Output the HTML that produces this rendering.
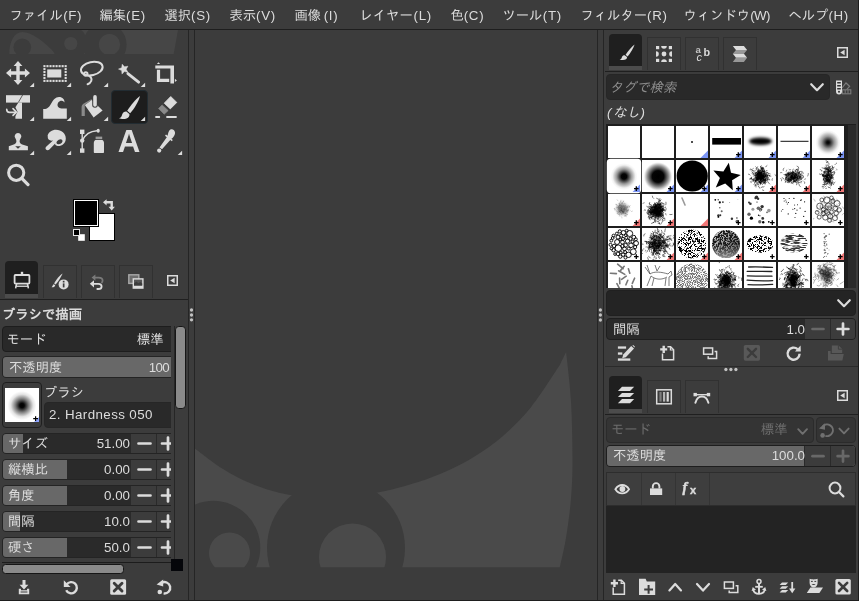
<!DOCTYPE html>
<html lang="ja">
<head>
<meta charset="utf-8">
<title>GIMP</title>
<style>
html,body{margin:0;padding:0;background:#3c3c3c;}
body{width:859px;height:601px;overflow:hidden;position:relative;
  font-family:"Liberation Sans","IPAGothic",sans-serif;font-size:13.33px;color:#dcdcdc;line-height:1;}
#app{position:absolute;left:0;top:0;width:859px;height:601px;background:#3c3c3c;overflow:hidden;}
.abs{position:absolute;}
.t{position:absolute;white-space:nowrap;line-height:16px;height:16px;}
.r{text-align:right;}
.vline,.hline{position:absolute;background:#252525;}
svg{position:absolute;overflow:visible;}
svg.ic{fill:#dcdcdc;}
#menubar,.t,svg.ic{opacity:.999;}
u{text-decoration:none;}
#menubar u{display:inline-block;width:20px;text-align:center;letter-spacing:0.7px;}
/* menubar */
#menubar{position:absolute;left:0;top:0;width:859px;height:29px;}
#menubar span{position:absolute;top:8px;line-height:16px;white-space:nowrap;}
/* tabs */
.tab{position:absolute;box-sizing:border-box;border:1px solid #313131;border-bottom:none;}
.tab.on{background:#1f1f1f;border:none;border-radius:4px 4px 0 0;}
.tab.on i{position:absolute;left:0;right:0;bottom:0;height:4px;background:#4c4c4c;}
.entry{position:absolute;box-sizing:border-box;background:#2a2a2a;border:1px solid #222;border-radius:4px;}
.spin{position:absolute;box-sizing:border-box;background:#2a2a2a;border:1px solid #242424;border-radius:4px;overflow:hidden;}
.spin .fill{position:absolute;left:0;top:0;bottom:0;background:#686868;}
.spin .btns{position:absolute;top:0;bottom:0;right:0;background:#3c3c3c;border-left:1px solid #2a2a2a;}
</style>
</head>
<body>
<div id="app">

<!-- MENUBAR -->
<div id="menubar">
<span style="left:9.4px">ファイル<u>(F)</u></span>
<span style="left:99.4px">編集<u>(E)</u></span>
<span style="left:164.4px">選択<u>(S)</u></span>
<span style="left:229.4px">表示<u>(V)</u></span>
<span style="left:294.4px">画像<u>(I)</u></span>
<span style="left:359.4px">レイヤー<u>(L)</u></span>
<span style="left:450.4px">色<u>(C)</u></span>
<span style="left:502.4px">ツール<u>(T)</u></span>
<span style="left:580.4px">フィルター<u>(R)</u></span>
<span style="left:683.4px">ウィンドウ<u style="letter-spacing:-0.6px">(W)</u></span>
<span style="left:788.4px">ヘルプ<u>(H)</u></span>
</div>
<div class="hline" style="left:0;top:29px;width:859px;height:1px;background:#1e1e1e"></div>

<!-- separators -->
<div class="vline" style="left:188px;top:30px;width:1px;height:571px"></div>
<div class="vline" style="left:194px;top:30px;width:1px;height:571px"></div>
<div class="vline" style="left:597px;top:30px;width:1px;height:571px"></div>
<div class="vline" style="left:603px;top:30px;width:1px;height:571px"></div>
<div class="hline" style="left:0;top:600px;width:859px;height:1px;background:#1e1e1e"></div>

<!-- CANVAS -->
<svg id="canvas" style="left:195px;top:30px" width="402" height="570" viewBox="195 30 402 570">
  <defs>
    <clipPath id="cc"><rect x="195" y="30" width="402" height="537.6"/></clipPath>
    <mask id="wm" maskUnits="userSpaceOnUse" x="195" y="30" width="402" height="570">
      <rect x="195" y="30" width="402" height="570" fill="#fff"/>
      <circle cx="213.3" cy="547.8" r="47" fill="#000"/>
      <circle cx="336" cy="548" r="69" fill="#000"/>
      <circle cx="229.5" cy="553" r="20.5" fill="#fff"/>
      <circle cx="352.5" cy="557" r="33.5" fill="#fff"/>
    </mask>
  </defs>
  <g clip-path="url(#cc)">
    <path d="M195.0 448.8 C199.7 452.1 213.7 463.3 223.0 469.1 C232.3 474.9 241.7 479.7 251.0 483.6 C260.3 487.6 269.7 490.5 279.0 492.8 C288.3 495.0 297.7 496.4 307.0 497.2 C316.3 498.0 325.7 498.1 335.0 497.7 C344.3 497.4 353.7 496.4 363.0 495.0 C372.3 493.7 381.7 491.9 391.0 489.7 C400.3 487.4 409.7 484.8 419.0 481.7 C428.3 478.6 437.7 475.2 447.0 470.9 C456.3 466.7 465.7 462.1 475.0 456.2 C484.3 450.4 493.7 444.1 503.0 435.9 C512.3 427.7 521.7 418.8 531.0 407.2 C540.3 395.6 554.2 373.4 559.0 366.3 C563.8 359.2 558.8 366.9 560.0 364.5 C561.2 362.2 565.1 354.1 566.1 352.0 C566.9 360.0 569.8 381.9 570.9 399.9 C572.0 417.9 572.5 443.2 572.5 459.8 C572.5 476.4 572.0 486.4 570.9 499.7 C569.8 513.0 567.6 528.3 565.7 539.6 C563.8 550.9 560.7 562.9 559.7 567.6 L195 567.6 Z" fill="#4a4a4a" mask="url(#wm)"/>
  </g>
</svg>

<!-- TOOLBOX -->
<div id="toolbox" class="abs" style="left:0;top:30px;width:188px;height:570px">
<!-- wilber header -->
<svg style="left:0px;top:0px" width="188" height="24" viewBox="0 30 188 24">
  <defs>
    <mask id="hm" maskUnits="userSpaceOnUse" x="0" y="30" width="188" height="24">
      <rect x="0" y="30" width="188" height="24" fill="#fff"/>
      <circle cx="22.3" cy="47.3" r="8.8" fill="#000"/>
      <circle cx="69.4" cy="43.5" r="18" fill="#000"/>
      <circle cx="70.8" cy="43.5" r="6.6" fill="#fff"/>
      <circle cx="104.8" cy="44.6" r="21.8" fill="#000"/>
      <circle cx="109.5" cy="44.6" r="10.6" fill="#fff"/>
    </mask>
  </defs>
  <path d="M9.3 54 C9.3 42 14 32 22.5 32 C31 32 43 41 51 49 L56 54 L60 30 L178 30 L173.7 54 Z" fill="#464646" mask="url(#hm)"/>
</svg>
<!-- selected tool button -->
<div class="abs" style="left:111px;top:60px;width:37px;height:34px;box-sizing:border-box;background:#1d1d1d;border:1px solid #222c32;border-radius:4px"></div>
<!-- tool icons: origin of toolbox is (0,30) -->
<svg class="ic" style="left:6px;top:31px" width="24" height="24" viewBox="0 0 24 24"><path d="M12 0 L16.4 5.1 H13.7 V10.3 H18.9 V7.6 L24 12 L18.9 16.4 V13.7 H13.7 V18.9 H16.4 L12 24 L7.6 18.9 H10.3 V13.7 H5.1 V16.4 L0 12 L5.1 7.6 V10.3 H10.3 V5.1 H7.6 Z"/></svg>
<svg class="ic" style="left:43px;top:31px" width="24" height="24" viewBox="0 0 24 24"><rect x="0.40" y="4.10" width="2.1" height="2.1"/><rect x="0.40" y="18.85" width="2.1" height="2.1"/><rect x="3.43" y="4.10" width="2.1" height="2.1"/><rect x="3.43" y="18.85" width="2.1" height="2.1"/><rect x="6.46" y="4.10" width="2.1" height="2.1"/><rect x="6.46" y="18.85" width="2.1" height="2.1"/><rect x="9.49" y="4.10" width="2.1" height="2.1"/><rect x="9.49" y="18.85" width="2.1" height="2.1"/><rect x="12.52" y="4.10" width="2.1" height="2.1"/><rect x="12.52" y="18.85" width="2.1" height="2.1"/><rect x="15.55" y="4.10" width="2.1" height="2.1"/><rect x="15.55" y="18.85" width="2.1" height="2.1"/><rect x="18.58" y="4.10" width="2.1" height="2.1"/><rect x="18.58" y="18.85" width="2.1" height="2.1"/><rect x="21.61" y="4.10" width="2.1" height="2.1"/><rect x="21.61" y="18.85" width="2.1" height="2.1"/><rect x="0.40" y="7.05" width="2.1" height="2.1"/><rect x="21.61" y="7.05" width="2.1" height="2.1"/><rect x="0.40" y="10.00" width="2.1" height="2.1"/><rect x="21.61" y="10.00" width="2.1" height="2.1"/><rect x="0.40" y="12.95" width="2.1" height="2.1"/><rect x="21.61" y="12.95" width="2.1" height="2.1"/><rect x="0.40" y="15.90" width="2.1" height="2.1"/><rect x="21.61" y="15.90" width="2.1" height="2.1"/><rect x="4.2" y="8.4" width="14.1" height="8.1"/></svg>
<svg class="ic" style="left:80px;top:31px" width="24" height="24" viewBox="0 0 24 24"><g fill="none" stroke="#dcdcdc" stroke-width="2" stroke-linecap="round"><ellipse cx="11.8" cy="7.6" rx="11" ry="6.6" transform="rotate(-13 11.8 7.6)"/><circle cx="5.8" cy="13" r="1.7"/><path d="M7 14.2 C10.4 14.8 12.4 17.2 11.2 20 C10.6 21.6 9.4 22.6 7.6 23.2"/></g></svg>
<svg class="ic" style="left:117px;top:31px" width="24" height="24" viewBox="0 0 24 24"><path d="M5.2 3.2 L7.5 5.8 L10.9 5.2 L9.2 8.2 L10.9 11.3 L7.4 10.6 L5.0 13.1 L4.7 9.6 L1.5 8.1 L4.7 6.7 Z" stroke="#dcdcdc" stroke-width="0.5" stroke-linejoin="round"/><path d="M10.9 12.6 L21.6 21.2" stroke="#dcdcdc" stroke-width="2.8" stroke-linecap="round"/></svg>
<svg class="ic" style="left:154px;top:31px" width="24" height="24" viewBox="0 0 24 24"><path d="M1.3 4.5 H20 V22.4 H16.4 V7.4 H1.3 Z"/><path d="M2.9 8.7 H6.1 V17.8 H15.2 V21 H2.9 Z"/><path d="M2.9 2.9 L4.5 1.3 L6.1 2.9 Z"/><path d="M20.9 17.8 L22.9 19.4 L20.9 21 Z"/></svg>
<!-- row 2 -->
<svg class="ic" style="left:6px;top:65px" width="24" height="24" viewBox="0 0 24 24"><rect x="0" y="0.2" width="24" height="7.4"/><path d="M16.6 0 L12.1 7.8" stroke="#3c3c3c" stroke-width="0.8"/><path d="M12.4 7.4 L9.4 12.3 L11.5 16.8 L9.4 21.3 V23.7 H16 V7.4 Z"/><path d="M0.7 14.2 C0.7 16.6 1.6 17.4 3.6 17.4 H9.4" fill="none" stroke="#dcdcdc" stroke-width="1.6" stroke-linecap="round"/><path d="M7 13.6 L10.4 17.1 L7 20.4" fill="none" stroke="#dcdcdc" stroke-width="1.6" stroke-linecap="round" stroke-linejoin="round"/></svg>
<svg class="ic" style="left:43px;top:65px" width="24" height="24" viewBox="0 0 24 24"><path d="M0.2 23.7 V14.1 C3 14.1 5.5 13.5 7.9 9 C10 5 12.5 1.9 16 1.9 C19.5 1.9 21.9 4.4 21.4 7.6 C20.7 6.3 19.9 5.8 18.9 5.7 C17.4 5.6 16.2 6.2 15.4 7.3 C14.3 8.8 14.2 10.8 15.2 12 C16 12.9 17 13.3 18.4 13.4 C19.6 13.5 21.4 13.5 23.8 13.5 V23.7 Z"/></svg>
<svg class="ic" style="left:80px;top:65px" width="24" height="24" viewBox="0 0 24 24"><path d="M4.8 10.1 L11.7 4.8 L22.6 15.4 L13.6 22.6 Z"/><path d="M1.6 21 V12.4 C1.6 10.4 2.4 9.2 4.2 8.2 L11.3 4.3 L11.9 5.1 L4.8 10.1 V21 Z" fill="#8a8a8a"/><path d="M15 1.8 V10" stroke="#3c3c3c" stroke-width="5.6" stroke-linecap="round"/><path d="M15 1.9 V10" stroke="#dcdcdc" stroke-width="3.6" stroke-linecap="round"/></svg>
<svg class="ic" style="left:117px;top:65px" width="24" height="24" viewBox="0 0 24 24"><path d="M23 1 C22 5.5 17.5 13.5 13.2 18.2 L10.2 15.8 C13.5 10.5 19 4 23 1 Z"/><path d="M9.4 16.6 L12.4 19 C13 22 10 24 6.5 24 C4.5 24 3 23.6 2 23.2 C4 22.6 4.6 21.6 5 20 C5.6 17.6 7.6 16.4 9.4 16.6 Z"/></svg>
<svg class="ic" style="left:154px;top:65px" width="24" height="24" viewBox="0 0 24 24"><path d="M16.7 1.5 L22.8 7.4 L16.3 13.9 L10.2 8.2 Z" stroke="#dcdcdc" stroke-width="0.8" stroke-linejoin="round"/><path d="M8.1 9.9 L14.2 15.6 L10.2 19.2 L4.5 13.5 Z" fill="#8a8a8a" stroke="#8a8a8a" stroke-width="0.6" stroke-linejoin="round"/><rect x="1.2" y="20.9" width="4.9" height="2" rx="0.6"/><rect x="12.2" y="20.9" width="10.6" height="2" rx="0.6"/></svg>
<!-- row 3 -->
<svg class="ic" style="left:6px;top:99px" width="24" height="24" viewBox="0 0 24 24"><path d="M12 4.1 A3.3 3.3 0 0 1 14.5 9.6 C13.8 10.6 13.6 11.4 13.6 12.4 C13.6 14 15 15 17 15.8 L21.9 17.2 V21.3 H2.8 V17.2 L7 15.8 C9 15 10.4 14 10.4 12.4 C10.4 11.4 10.2 10.6 9.5 9.6 A3.3 3.3 0 0 1 12 4.1 Z M9.2 17.3 L12 19.8 L14.8 17.3 Z" fill-rule="evenodd"/></svg>
<svg class="ic" style="left:43px;top:99px" width="24" height="24" viewBox="0 0 24 24"><path d="M13 0.8 C18.5 0.8 22.8 4.6 22.8 9.4 C22.8 14.4 18.6 17.4 14.6 17 C12.6 16.8 11.8 15.8 12.2 14.6 L6.4 20.4 C5.4 21.4 3.8 21.4 3 20.4 C2.2 19.4 2.4 18.2 3.4 17.4 L10 11.6 C8 12 5.8 11.4 5 9.6 C4.6 8.6 5 7.8 4.6 6.8 C5.4 3.2 9 0.8 13 0.8 Z M14 12.2 C12.8 13.8 13.6 15.4 15.8 15.2 C18.4 15 20.2 12.8 19.2 11 C18.2 9.4 15.6 10.2 14 12.2 Z" fill-rule="evenodd"/></svg>
<svg class="ic" style="left:80px;top:99px" width="24" height="24" viewBox="0 0 24 24"><rect x="0" y="0.6" width="4.4" height="4.4"/><rect x="0" y="19.4" width="4.4" height="4.4"/><circle cx="2.2" cy="11.6" r="2.2"/><rect x="1.5" y="3" width="1.4" height="18"/><path d="M2.6 11 C5 6 10 2.4 17 1.8" fill="none" stroke="#dcdcdc" stroke-width="1.5"/><ellipse cx="18.2" cy="1.8" rx="1.6" ry="2"/><rect x="15.6" y="7.6" width="6.6" height="2.6" fill="#9a9a9a"/><path d="M15.4 11 H22.4 C23.4 11.6 24 12.6 24 14 V23 C24 23.6 23.6 24 23 24 H14.8 C14.2 24 13.8 23.6 13.8 23 V14 C13.8 12.6 14.4 11.6 15.4 11 Z"/></svg>
<svg class="ic" style="left:117px;top:99px" width="24" height="24" viewBox="0 0 24 24"><text x="11.9" y="22.6" text-anchor="middle" font-family="Liberation Sans, sans-serif" font-weight="bold" font-size="31.2" fill="#dcdcdc">A</text></svg>
<svg class="ic" style="left:154px;top:99px" width="24" height="24" viewBox="0 0 24 24"><path d="M16.4 0.4 C18.8 -0.6 21.4 1.4 21 4.4 C20.8 6.4 19 8.8 17.4 9.8 L18.8 11 L17.8 12.2 L16.3 11 L8 20.3 L5.5 18.4 L12.8 8.3 L11 6.8 L12 5.6 L13.6 6.8 C14 4.4 14.8 1.2 16.4 0.4 Z"/><circle cx="5.2" cy="21.6" r="2.1"/></svg>
<!-- row 4 -->
<svg class="ic" style="left:6px;top:133px" width="24" height="24" viewBox="0 0 24 24"><circle cx="10.2" cy="9.8" r="7.6" fill="none" stroke="#dcdcdc" stroke-width="3"/><path d="M15.8 15.4 L22 21.6" stroke="#dcdcdc" stroke-width="3.2" stroke-linecap="round"/></svg>
<!-- corner triangles -->
<svg class="ic" style="left:0;top:0" width="188" height="130" viewBox="0 0 188 130"><g id="tris">
<path d="M34.1 52.8 V57 H29.7 Z"/><path d="M71.1 52.8 V57 H66.7 Z"/><path d="M108.1 52.8 V57 H103.7 Z"/><path d="M145.1 52.8 V57 H140.7 Z"/><path d="M34.1 86.8 V91 H29.7 Z"/><path d="M71.1 86.8 V91 H66.7 Z"/><path d="M108.1 86.8 V91 H103.7 Z"/><path d="M145.1 86.8 V91 H140.7 Z"/><path d="M34.1 120.8 V125 H29.7 Z"/><path d="M71.1 120.8 V125 H66.7 Z"/><path d="M182.1 120.8 V125 H177.7 Z"/>
</g></svg>
<!-- fg/bg colors (toolbox-local y = page y - 30) -->
<div class="abs" style="left:89px;top:183px;width:26px;height:28px;box-sizing:border-box;background:#fff;border:1px solid #000"></div>
<div class="abs" style="left:73px;top:169px;width:26px;height:28px;box-sizing:border-box;background:#000;border:1px solid #000;box-shadow:inset 0 0 0 1px #fff"></div>
<svg class="ic" style="left:103px;top:169px" width="12" height="12" viewBox="0 0 12 12"><path d="M0 3.3 L3.6 0.2 V2.1 H9.9 V7.8 H11.9 L8.7 11.6 L5.5 7.8 H7.5 V4.5 H3.6 V6.4 Z"/></svg>
<svg style="left:73px;top:199px" width="12" height="12" viewBox="0 0 12 12"><rect x="5.2" y="5.2" width="6.6" height="6.6" fill="#fff"/><rect x="0.5" y="0.5" width="6" height="6" fill="#000" stroke="#e6e6e6" stroke-width="1"/></svg>
<!-- tool-options tabs -->
<div class="tab on" style="left:5px;top:231px;width:33px;height:37px"><i></i></div>
<div class="tab" style="left:43px;top:235px;width:34px;height:33px"></div>
<div class="tab" style="left:81px;top:235px;width:34px;height:33px"></div>
<div class="tab" style="left:119px;top:235px;width:34px;height:33px"></div>
<div class="hline" style="left:0;top:269px;width:188px;height:1px;background:#1f1f1f"></div>
<svg class="ic" style="left:167px;top:245px" width="11" height="11" viewBox="0 0 11 11"><rect x="0.75" y="0.75" width="9.5" height="9.5" fill="none" stroke="#dcdcdc" stroke-width="1.5"/><path d="M7.6 2.8 V8.2 L3.2 5.5 Z"/></svg>
<!-- tab icons (toolbox-local: page y-30) -->
<svg class="ic" style="left:13px;top:241px" width="18" height="18" viewBox="0 0 18 18"><rect x="1.6" y="4" width="14.8" height="8.6" rx="0.8" fill="none" stroke="#dcdcdc" stroke-width="1.8"/><rect x="7.8" y="0.8" width="2.4" height="3"/><path d="M3.6 13 L2.6 17.4 M14.4 13 L15.4 17.4" stroke="#dcdcdc" stroke-width="1.5"/><rect x="2.4" y="14.6" width="13.2" height="1.3"/></svg>
<svg class="ic" style="left:51px;top:243px" width="18" height="18" viewBox="0 0 18 18"><path d="M11.6 0.6 C10.4 3.6 7.4 8.6 4.6 11.6 L3.2 10.6 C4.8 7 8.8 2.4 11.6 0.6 Z"/><path d="M2.8 11.2 L4.2 12.2 C4.2 13.6 2.6 14.4 0.6 14.2 C1.6 13.6 1.6 11.6 2.8 11.2 Z"/><circle cx="12.6" cy="11.4" r="5" /><rect x="11.8" y="10.4" width="1.7" height="4" fill="#3c3c3c"/><rect x="11.8" y="7.8" width="1.7" height="1.7" fill="#3c3c3c"/></svg>
<svg class="ic" style="left:89px;top:244px" width="16" height="16" viewBox="0 0 16 16"><g fill="none" stroke="#7a7a7a" stroke-width="1.8"><path d="M5 3.6 H9.6 C12.4 3.6 13.6 5 13.6 6.6 C13.6 7.6 13.2 8.4 12.4 9"/></g><path d="M6.4 0.4 V6.8 L2.6 3.6 Z" fill="#7a7a7a"/><g fill="none" stroke="#dcdcdc" stroke-width="1.8"><path d="M4 9.8 H9.4 C11.6 9.8 12.6 11 12.6 12.4 C12.6 13.8 11.6 15 9.4 15 H7.6"/></g><path d="M5 6.2 V13.4 L0.8 9.8 Z"/></svg>
<svg class="ic" style="left:128px;top:244px" width="16" height="16" viewBox="0 0 16 16"><rect x="0.8" y="0.8" width="10" height="8.6" fill="#6e6e6e" stroke="#a8a8a8" stroke-width="1.4"/><rect x="4.6" y="4.2" width="11" height="10.6" fill="#dcdcdc"/><rect x="6" y="5.6" width="8.2" height="6" fill="#555"/><path d="M6 11.6 V9.4 L8.4 7.6 L10.4 9.2 L12.2 8 L14.2 9.6 V11.6 Z" fill="#3c3c3c"/></svg>
<!-- title -->
<div class="t" style="left:2px;top:277px;font-weight:bold">ブラシで描画</div>
<!-- options scrolled area -->
<div class="abs" style="left:0;top:295px;width:171px;height:237px;overflow:hidden">
  <div class="entry" style="left:2px;top:1px;width:176px;height:26px;background:#292929;border-color:#1d1d1d"></div>
  <div class="t" style="left:6.5px;top:7px">モード</div>
  <div class="t" style="left:137px;top:7px">標準</div>
  <div class="spin" style="left:2px;top:31px;width:176px;height:22px"><div class="fill" style="width:100%"></div></div>
  <div class="t" style="left:9px;top:35px">不透明度</div>
  <div class="t r" style="right:2px;top:35px"><u style="letter-spacing:-.7px">100</u></div>
  <div class="abs" style="left:2px;top:57px;width:40px;height:46px;box-sizing:border-box;border:1px solid #1f1f1f;border-radius:4px;background:#3c3c3c"></div>
  <svg style="left:5px;top:63px" width="34" height="34" viewBox="0 0 34 34"><defs><radialGradient id="h50"><stop offset="0" stop-color="#000"/><stop offset="0.14" stop-color="#060606"/><stop offset="0.42" stop-color="#7e7e7e"/><stop offset="0.7" stop-color="#e4e4e4"/><stop offset="0.9" stop-color="#fff"/></radialGradient></defs><rect width="34" height="34" fill="#fff"/><circle cx="17" cy="17.5" r="16" fill="url(#h50)"/><path d="M34 29 V34 H29 Z" fill="#8ea4ff"/><path d="M28.2 30.6 H33 M30.6 28.2 V33" stroke="#000" stroke-width="1.2"/></svg>
  <div class="t" style="left:44px;top:60px">ブラシ</div>
  <div class="entry" style="left:44px;top:77px;width:134px;height:26px;background:#292929;border-color:#262626"></div>
  <div class="t" style="left:49px;top:82px"><u style="letter-spacing:.4px">2. Hardness 050</u></div>
  <!-- spin rows -->
  <div class="spin" style="left:2px;top:108px;width:176px;height:21px"><div class="fill" style="width:20px"></div><div class="btns" style="width:46px"></div></div>
  <div class="t" style="left:8px;top:111px">サイズ</div><div class="t r" style="right:41px;top:111px"><u>51.00</u></div>
  <div class="spin" style="left:2px;top:134px;width:176px;height:21px"><div class="fill" style="width:64px"></div><div class="btns" style="width:46px"></div></div>
  <div class="t" style="left:8px;top:137px">縦横比</div><div class="t r" style="right:41px;top:137px"><u>0.00</u></div>
  <div class="spin" style="left:2px;top:160px;width:176px;height:21px"><div class="fill" style="width:64px"></div><div class="btns" style="width:46px"></div></div>
  <div class="t" style="left:8px;top:163px">角度</div><div class="t r" style="right:41px;top:163px"><u>0.00</u></div>
  <div class="spin" style="left:2px;top:186px;width:176px;height:21px"><div class="fill" style="width:17px"></div><div class="btns" style="width:46px"></div></div>
  <div class="t" style="left:8px;top:189px">間隔</div><div class="t r" style="right:41px;top:189px"><u>10.0</u></div>
  <div class="spin" style="left:2px;top:212px;width:176px;height:21px"><div class="fill" style="width:64px"></div><div class="btns" style="width:46px"></div></div>
  <div class="t" style="left:8px;top:215px">硬さ</div><div class="t r" style="right:41px;top:215px"><u>50.0</u></div>
  <svg class="ic" style="left:0;top:108px" width="171" height="130" viewBox="0 108 171 130"><g id="pm" stroke="#dcdcdc" stroke-width="2.7" stroke-linecap="round" fill="none">
    <path d="M138.5 118.5 H150.5 M162 118.5 H174 M168 112.5 V124.5"/>
    <path d="M138.5 144.5 H150.5 M162 144.5 H174 M168 138.5 V150.5"/>
    <path d="M138.5 170.5 H150.5 M162 170.5 H174 M168 164.5 V176.5"/>
    <path d="M138.5 196.5 H150.5 M162 196.5 H174 M168 190.5 V202.5"/>
    <path d="M138.5 222.5 H150.5 M162 222.5 H174 M168 216.5 V228.5"/>
  </g><g stroke="#2a2a2a" stroke-width="1"><path d="M156.5 109 V128 M156.5 135 V154 M156.5 161 V180 M156.5 187 V206 M156.5 213 V232"/></g></svg>
</div>
<!-- scrolled window edges -->
<div class="vline" style="left:174px;top:296px;width:1px;height:236px;background:#262626"></div>
<div class="hline" style="left:2px;top:532px;width:170px;height:1px;background:#1c1c1c"></div>
<div class="abs" style="left:171px;top:529px;width:12px;height:12px;background:#05060a"></div>
<!-- vertical scrollbar -->
<div class="abs" style="left:175.3px;top:296px;width:10.4px;height:82.5px;box-sizing:border-box;background:#8a8a8a;border:1.8px solid #161616;border-radius:3.8px"></div>
<!-- horizontal scrollbar -->
<div class="abs" style="left:2.3px;top:533.6px;width:121.6px;height:10.2px;box-sizing:border-box;background:#8a8a8a;border:1.5px solid #161616;border-radius:3.5px"></div>
<!-- bottom buttons -->
<svg class="ic" style="left:16px;top:549px" width="16" height="16" viewBox="0 0 16 16"><path d="M6.5 1 H9.5 V5.8 H12.4 L8 10.6 L3.6 5.8 H6.5 Z"/><path d="M2.8 9.8 H5 V11.2 H11 V9.8 H13.2 V15.2 H2.8 Z M4.6 12.6 V13.6 H11.4 V12.6 Z" fill-rule="evenodd"/></svg>
<svg class="ic" style="left:63px;top:549px" width="16" height="16" viewBox="0 0 16 16"><path d="M3.6 5.6 A5.6 5.6 0 1 1 3.2 11.2" fill="none" stroke="#dcdcdc" stroke-width="2.4"/><path d="M0.8 1.2 V8 H7.6 Z"/></svg>
<svg class="ic" style="left:110px;top:549px" width="16" height="16" viewBox="0 0 16 16"><rect x="0.2" y="0.3" width="15.9" height="15.5" rx="1.5"/><path d="M4.2 4.2 L12 12 M12 4.2 L4.2 12" stroke="#3c3c3c" stroke-width="2.9" stroke-linecap="round"/></svg>
<svg class="ic" style="left:156px;top:549px" width="16" height="16" viewBox="0 0 16 16"><path d="M5.4 4 A5.7 5.7 0 1 1 7.6 14.4" fill="none" stroke="#dcdcdc" stroke-width="2.4"/><path d="M0.6 5.4 L7.2 0.4 V7.6 Z"/><circle cx="3.8" cy="13" r="2.3"/></svg>
<!-- handle dots between toolbox and canvas -->
<svg class="ic" style="left:189px;top:277px" width="5" height="16" viewBox="0 0 5 16"><circle cx="2.5" cy="3" r="1.65" fill="#c2c2c2"/><circle cx="2.5" cy="8" r="1.65" fill="#c2c2c2"/><circle cx="2.5" cy="12.8" r="1.65" fill="#c2c2c2"/></svg>
</div>

<!-- RIGHT DOCK (page coords used directly; container at 0,0) -->
<div id="rdock" class="abs" style="left:0;top:0;width:859px;height:601px">
<!-- brushes tabs -->
<div class="tab on" style="left:609px;top:34px;width:33px;height:36px"><i></i></div>
<div class="tab" style="left:647px;top:37px;width:34px;height:33px"></div>
<div class="tab" style="left:685px;top:37px;width:34px;height:33px"></div>
<div class="tab" style="left:723px;top:37px;width:34px;height:33px"></div>
<div class="hline" style="left:605px;top:71px;width:254px;height:1px;background:#1f1f1f"></div>
<svg class="ic" style="left:837px;top:47px" width="11" height="11" viewBox="0 0 11 11"><rect x="0.75" y="0.75" width="9.5" height="9.5" fill="none" stroke="#dcdcdc" stroke-width="1.5"/><path d="M7.6 2.8 V8.2 L3.2 5.5 Z"/></svg>
<!-- brushes dock tab icons -->
<svg class="ic" style="left:619px;top:44px" width="16" height="16" viewBox="0 0 16 16"><path d="M15.6 0.4 C14.6 3.8 11.4 9.2 8.6 12.4 L6.6 10.8 C8.8 7.2 12.6 2.6 15.6 0.4 Z"/><path d="M6 11.4 L8 13 C8.4 15 6.4 16 3.8 16 C2.6 16 1.4 15.8 0.6 15.4 C2 15 2.6 14.4 2.8 13.4 C3.2 11.8 4.8 11.2 6 11.4 Z"/></svg>
<svg class="ic" style="left:656px;top:46px" width="16" height="16" viewBox="0 0 16 16"><circle cx="8" cy="8" r="2.4"/><rect x="0" y="0" width="3.2" height="3.2"/><rect x="12.8" y="0" width="3.2" height="3.2"/><rect x="0" y="12.8" width="3.2" height="3.2"/><rect x="12.8" y="12.8" width="3.2" height="3.2"/><path d="M5.2 0 A2.8 2.8 0 0 0 10.8 0 Z"/><path d="M5.2 16 A2.8 2.8 0 0 1 10.8 16 Z"/><path d="M0 5.2 A2.8 2.8 0 0 1 0 10.8 Z"/><path d="M16 5.2 A2.8 2.8 0 0 0 16 10.8 Z"/></svg>
<svg class="ic" style="left:694px;top:44px" width="18" height="18" viewBox="0 0 18 18"><text x="1.5" y="9.1" font-family="Liberation Sans, sans-serif" font-weight="bold" font-size="9.6" fill="#c4c4c4">a</text><text x="9.4" y="12" font-family="Liberation Sans, sans-serif" font-weight="bold" font-size="10.8">b</text><text x="2.4" y="17.2" font-family="Liberation Sans, sans-serif" font-style="italic" font-size="11">c</text></svg>
<svg class="ic" style="left:732px;top:45px" width="16" height="18" viewBox="732 45 16 18"><path d="M732.8 45.9 H743.9 L747.1 50 H736 Z"/><path d="M736 50 H747.1 L743.9 53.8 H732.8 Z" fill="#989898"/><path d="M732.8 53.8 H743.9 L747.1 57.8 H736 Z"/><path d="M736 57.8 H747.1 L743.9 61.9 H732.8 Z" fill="#989898"/></svg>
<!-- tag palette icon -->
<svg class="ic" style="left:835px;top:80px" width="17" height="15" viewBox="835 80 17 15"><path d="M842 88 L846 83 L849.6 86.4 L846.6 89.6" fill="none" stroke="#7c7c7c" stroke-width="1.2"/><rect x="842.4" y="89.8" width="8.4" height="4" fill="none" stroke="#7c7c7c" stroke-width="1.1"/><path d="M845.2 90 V93.6 M848 90 V93.6" stroke="#7c7c7c" stroke-width="1"/><path d="M836 80.6 H842 V91.4 A3 3 0 0 1 836 91.4 Z"/><rect x="837.2" y="82" width="3.6" height="1.5" fill="#333"/><rect x="837.2" y="85" width="3.6" height="1.5" fill="#333"/><rect x="837.2" y="88" width="3.6" height="1.5" fill="#333"/><circle cx="839" cy="91.8" r="1" fill="#333"/></svg>
<!-- tag search -->
<div class="entry" style="left:606px;top:74px;width:224px;height:26px;background:#292929;border-color:#262626"></div>
<div class="t" style="left:609.5px;top:80px;font-style:italic;color:#8c8c8c">タグで検索</div>
<svg style="left:810px;top:83px" width="14" height="9" viewBox="0 0 14 9"><path d="M1.2 1.2 L7 7.2 L12.8 1.2" fill="none" stroke="#dcdcdc" stroke-width="2.2" stroke-linecap="round" stroke-linejoin="round"/></svg>
<div class="t" style="left:607px;top:105px;font-style:italic"><u style="letter-spacing:1.5px">(</u>なし<u style="letter-spacing:1.5px;margin-left:1px">)</u></div>
<!-- brush grid -->
<div id="grid" class="abs" style="left:606px;top:124px;width:250px;height:164px;background:#1e1e1e;overflow:hidden">
<svg style="left:0;top:0" width="250" height="164" viewBox="606 124 250 164">
<defs>
<radialGradient id="g25"><stop offset="0" stop-color="#000"/><stop offset="0.12" stop-color="#111"/><stop offset="0.5" stop-color="#9a9a9a"/><stop offset="0.85" stop-color="#f0f0f0"/><stop offset="1" stop-color="#fff"/></radialGradient>
<radialGradient id="g50"><stop offset="0" stop-color="#000"/><stop offset="0.2" stop-color="#050505"/><stop offset="0.55" stop-color="#9a9a9a"/><stop offset="0.85" stop-color="#f2f2f2"/><stop offset="1" stop-color="#fff"/></radialGradient>
<radialGradient id="g75"><stop offset="0" stop-color="#000"/><stop offset="0.4" stop-color="#050505"/><stop offset="0.72" stop-color="#8a8a8a"/><stop offset="0.94" stop-color="#f2f2f2"/><stop offset="1" stop-color="#fff"/></radialGradient>
<radialGradient id="fade"><stop offset="0" stop-color="#fff"/><stop offset="0.45" stop-color="#fff"/><stop offset="0.8" stop-color="#666"/><stop offset="1" stop-color="#000"/></radialGradient>
<radialGradient id="fade2"><stop offset="0" stop-color="#fff"/><stop offset="0.3" stop-color="#ccc"/><stop offset="0.7" stop-color="#444"/><stop offset="1" stop-color="#000"/></radialGradient>
<radialGradient id="hard"><stop offset="0" stop-color="#fff"/><stop offset="0.93" stop-color="#fff"/><stop offset="1" stop-color="#000"/></radialGradient>
<filter id="nA" x="0" y="0" width="1" height="1"><feTurbulence type="fractalNoise" baseFrequency="0.95" numOctaves="3" seed="2"/><feColorMatrix type="matrix" values="0 0 0 0 0 0 0 0 0 0 0 0 0 0 0 5 0 0 0 -1.7"/></filter>
<filter id="nB" x="0" y="0" width="1" height="1"><feTurbulence type="fractalNoise" baseFrequency="0.7" numOctaves="4" seed="11"/><feColorMatrix type="matrix" values="0 0 0 0 0 0 0 0 0 0 0 0 0 0 0 6 0 0 0 -1.9"/></filter>
<filter id="nC" x="0" y="0" width="1" height="1"><feTurbulence type="fractalNoise" baseFrequency="1.1" numOctaves="3" seed="5"/><feColorMatrix type="matrix" values="0 0 0 0 0 0 0 0 0 0 0 0 0 0 0 5 0 0 0 -2"/></filter>
<filter id="nD" x="0" y="0" width="1" height="1"><feTurbulence type="fractalNoise" baseFrequency="0.22" numOctaves="5" seed="23"/><feColorMatrix type="matrix" values="0 0 0 0 0 0 0 0 0 0 0 0 0 0 0 7 0 0 0 -2.9"/></filter>
<filter id="nE" x="0" y="0" width="1" height="1"><feTurbulence type="turbulence" baseFrequency="0.45" numOctaves="2" seed="8"/><feColorMatrix type="matrix" values="0 0 0 0 0 0 0 0 0 0 0 0 0 0 0 -12 0 0 0 2.9"/></filter>
<filter id="nF" x="0" y="0" width="1" height="1"><feTurbulence type="fractalNoise" baseFrequency="0.15 1.1" numOctaves="2" seed="4"/><feColorMatrix type="matrix" values="0 0 0 0 0 0 0 0 0 0 0 0 0 0 0 6 0 0 0 -2.5"/></filter>
<linearGradient id="lg33" x1="0" y1="0" x2="0" y2="1"><stop offset="0" stop-color="#999" stop-opacity="0"/><stop offset="1" stop-color="#bbb" stop-opacity="0.9"/></linearGradient>
<filter id="nW" x="0" y="0" width="1" height="1"><feTurbulence type="fractalNoise" baseFrequency="0.6" numOctaves="3" seed="19"/><feColorMatrix type="matrix" values="0 0 0 0 1 0 0 0 0 1 0 0 0 0 1 7 0 0 0 -3.2"/></filter>
<linearGradient id="lgm" x1="0" y1="0" x2="0.8" y2="1"><stop offset="0" stop-color="#fff"/><stop offset="0.55" stop-color="#888"/><stop offset="1" stop-color="#222"/></linearGradient>
<filter id="bl1" x="-0.3" y="-0.5" width="1.6" height="2"><feGaussianBlur stdDeviation="1.6"/></filter>
<filter id="bl2" x="-0.5" y="-0.5" width="2" height="2"><feGaussianBlur stdDeviation="0.5"/></filter>
</defs>
<rect x="608" y="126" width="32" height="32" fill="#fff"/>
<rect x="642" y="126" width="32" height="32" fill="#fff"/>
<rect x="676" y="126" width="32" height="32" fill="#fff"/>
<rect x="710" y="126" width="32" height="32" fill="#fff"/>
<rect x="744" y="126" width="32" height="32" fill="#fff"/>
<rect x="778" y="126" width="32" height="32" fill="#fff"/>
<rect x="812" y="126" width="32" height="32" fill="#fff"/>
<rect x="608" y="160" width="32" height="32" fill="#fff"/>
<rect x="642" y="160" width="32" height="32" fill="#fff"/>
<rect x="676" y="160" width="32" height="32" fill="#fff"/>
<rect x="710" y="160" width="32" height="32" fill="#fff"/>
<rect x="744" y="160" width="32" height="32" fill="#fff"/>
<rect x="778" y="160" width="32" height="32" fill="#fff"/>
<rect x="812" y="160" width="32" height="32" fill="#fff"/>
<rect x="608" y="194" width="32" height="32" fill="#fff"/>
<rect x="642" y="194" width="32" height="32" fill="#fff"/>
<rect x="676" y="194" width="32" height="32" fill="#fff"/>
<rect x="710" y="194" width="32" height="32" fill="#fff"/>
<rect x="744" y="194" width="32" height="32" fill="#fff"/>
<rect x="778" y="194" width="32" height="32" fill="#fff"/>
<rect x="812" y="194" width="32" height="32" fill="#fff"/>
<rect x="608" y="228" width="32" height="32" fill="#fff"/>
<rect x="642" y="228" width="32" height="32" fill="#fff"/>
<rect x="676" y="228" width="32" height="32" fill="#fff"/>
<rect x="710" y="228" width="32" height="32" fill="#fff"/>
<rect x="744" y="228" width="32" height="32" fill="#fff"/>
<rect x="778" y="228" width="32" height="32" fill="#fff"/>
<rect x="812" y="228" width="32" height="32" fill="#fff"/>
<rect x="608" y="262" width="32" height="32" fill="#fff"/>
<rect x="642" y="262" width="32" height="32" fill="#fff"/>
<rect x="676" y="262" width="32" height="32" fill="#fff"/>
<rect x="710" y="262" width="32" height="32" fill="#fff"/>
<rect x="744" y="262" width="32" height="32" fill="#fff"/>
<rect x="778" y="262" width="32" height="32" fill="#fff"/>
<rect x="812" y="262" width="32" height="32" fill="#fff"/>
<path d="M691 141 l2 2 m0 -2 l-2 2" stroke="#222" stroke-width="0.8"/>
<path d="M708 150.5 V158 H700.5 Z" fill="#7b96f6"/>
<rect x="712.2" y="138" width="28.8" height="6.6" fill="#000"/>
<path d="M742 150.5 V158 H734.5 Z" fill="#7b96f6"/>
<path d="M736 154.6 H740.6 M738.3 152.3 V156.9" stroke="#000" stroke-width="1.3"/>
<ellipse cx="760.5" cy="141.2" rx="11.5" ry="3.8" fill="#000" filter="url(#bl1)"/>
<path d="M776 150.5 V158 H768.5 Z" fill="#7b96f6"/>
<path d="M770 154.6 H774.6 M772.3 152.3 V156.9" stroke="#000" stroke-width="1.3"/>
<rect x="780.5" y="140.8" width="28" height="1" fill="#111"/>
<path d="M810 150.5 V158 H802.5 Z" fill="#7b96f6"/>
<path d="M804 154.6 H808.6 M806.3 152.3 V156.9" stroke="#000" stroke-width="1.3"/>
<circle cx="828" cy="142.5" r="12.5" fill="url(#g25)"/>
<path d="M844 150.5 V158 H836.5 Z" fill="#7b96f6"/>
<path d="M838 154.6 H842.6 M840.3 152.3 V156.9" stroke="#000" stroke-width="1.3"/>
<rect x="607.5" y="159.5" width="33" height="33" rx="3" fill="#fff" stroke="#fff" stroke-width="1.4"/>
<circle cx="624" cy="176.5" r="13.5" fill="url(#g50)"/>
<path d="M640 184.5 V192 H632.5 Z" fill="#7b96f6"/>
<path d="M634 188.6 H638.6 M636.3 186.3 V190.9" stroke="#000" stroke-width="1.3"/>
<circle cx="658" cy="176.5" r="14.5" fill="url(#g75)"/>
<path d="M674 184.5 V192 H666.5 Z" fill="#7b96f6"/>
<path d="M668 188.6 H672.6 M670.3 186.3 V190.9" stroke="#000" stroke-width="1.3"/>
<path d="M708 184.5 V192 H700.5 Z" fill="#7b96f6"/>
<path d="M702 188.6 H706.6 M704.3 186.3 V190.9" stroke="#000" stroke-width="1.3"/>
<circle cx="692.2" cy="176" r="15.6" fill="#000"/>
<polygon points="728.8,162.8 731.0,172.7 740.7,175.1 732.1,180.2 732.8,190.3 725.2,183.6 715.8,187.4 719.9,178.1 713.4,170.4 723.4,171.4" fill="#000"/>
<path d="M742 184.5 V192 H734.5 Z" fill="#7b96f6"/>
<path d="M736 188.6 H740.6 M738.3 186.3 V190.9" stroke="#000" stroke-width="1.3"/>
<clipPath id="c1"><rect x="744" y="160" width="32" height="32"/></clipPath>
<g clip-path="url(#c1)"><ellipse cx="760.5" cy="176.5" rx="4.7" ry="4.7" fill="#000" opacity="0.8" filter="url(#bl1)"/><path d="M758.3 175.2l1.2 -0.3l1.2 -0.4M759.1 174.2l0.1 0.7l-0.2 0.7M762.9 186.6l0.6 0.3l0.6 -0.3M761.0 172.8l-0.7 0.1l-0.8 -0.1M758.3 178.0l-0.7 0.3l-0.1 0.7M763.1 171.2l-0.6 -1.0l-0.9 -0.9M757.5 179.3l-0.9 0.6l0.2 1.0M755.8 177.6l-0.3 0.4l-0.5 0.2M765.5 176.8l0.3 0.4l0.5 0.1M762.5 177.4l-0.4 -1.0l-0.7 -0.8M758.0 172.9l-1.2 0.0l-1.1 0.5M764.6 172.1l-0.2 -0.5l-0.5 -0.1M764.0 177.2l1.1 -0.4l1.1 0.5M765.0 180.6l0.2 -1.1l0.9 -0.8M762.1 178.4l0.3 -1.1l1.0 -0.4M752.8 179.2l0.8 1.0l-0.3 1.2M759.7 177.7l-1.0 -0.3l-1.0 0.1M763.4 177.6l0.3 -0.5l0.6 -0.0M760.5 179.1l1.0 0.8l-0.1 1.3M759.8 178.1l-0.7 -1.0l-1.2 0.2M755.3 170.8l-0.9 0.2l-0.9 -0.4M760.7 179.6l-0.5 -0.8l-0.4 -0.8M755.9 184.4l-0.2 1.0l-1.0 0.4M759.4 177.3l0.1 0.5l0.5 0.3M763.1 179.0l-0.6 0.6l-0.8 0.4M757.9 171.2l-0.7 0.8l-0.8 0.7M763.9 180.0l-0.4 0.9l-0.9 0.6M760.7 180.7l-0.7 0.2l-0.1 0.7M772.2 180.3l-0.1 -0.8l0.3 -0.8M759.8 182.6l1.1 -0.3l1.0 -0.4M769.3 175.6l0.8 0.3l0.8 0.2M759.7 181.8l0.7 0.9l-0.2 1.1M766.0 178.8l-0.1 1.0l-0.5 0.9M767.4 175.5l-0.6 0.9l0.3 1.0M759.6 172.6l-0.1 0.7l0.4 0.6M761.0 174.8l0.1 0.6l0.5 0.4M759.8 171.4l-0.6 -1.0l-0.7 -1.0M763.0 177.1l-1.1 -0.1l-0.5 -1.0M757.7 176.3l-1.0 -0.7l-1.2 -0.2M768.2 173.0l-0.8 -0.4l-0.8 0.4M761.4 177.2l-0.8 -0.7l0.3 -1.0M750.6 169.0l-0.5 0.3l0.1 0.6M759.4 181.2l0.7 -0.1l0.6 -0.5M759.9 172.7l-0.6 -0.2l-0.2 -0.6M766.2 173.3l0.7 -0.3l0.0 -0.8M757.7 184.3l-0.6 0.1l-0.3 0.6M762.7 180.1l1.1 -0.5l1.2 0.2M760.6 174.0l0.1 -0.7l0.2 -0.7M768.6 178.2l0.7 0.7l0.4 0.9M756.8 171.9l-0.8 0.8l-1.1 -0.3M752.4 169.2l0.3 -0.4l0.5 -0.3M765.3 179.6l-0.8 0.9l0.4 1.1M761.6 176.1l0.5 0.2l0.4 -0.3M767.9 175.9l0.6 -0.3l0.6 -0.0M762.3 170.5l-0.2 1.3l-0.8 1.0M759.2 173.6l-0.9 0.7l-0.9 0.6M751.8 177.2l-1.0 0.6l0.0 1.2M754.5 175.3l1.1 0.1l1.0 -0.5M756.7 172.6l0.8 0.9l1.2 0.3M763.3 179.7l0.5 0.2l0.3 0.5M764.5 179.3l0.6 -0.6l0.9 0.0M761.6 174.5l1.0 0.5l0.2 1.1M764.2 171.6l-1.3 -0.1l-1.0 -0.8M761.2 167.9l1.0 0.4l0.9 0.6M763.5 176.7l-0.2 -0.9l-0.1 -0.9M759.3 181.4l0.9 -0.9l1.0 -0.8M760.3 174.8l0.6 0.7l-0.1 0.9M762.1 178.0l-0.7 0.0l-0.5 0.6M762.7 179.9l0.2 -0.6l0.5 -0.3M763.1 177.8l-0.2 -0.4l-0.4 -0.3M762.1 178.8l0.5 -0.4l0.6 -0.1M763.0 174.9l0.5 -0.6l0.7 -0.2M757.3 174.7l0.8 -0.7l0.4 -1.0M757.6 175.1l-0.3 1.2l-1.2 0.3M765.3 183.8l-0.1 -0.5l-0.5 -0.2M753.0 179.7l0.5 -0.5l0.4 -0.6M762.9 175.3l0.7 0.5l0.4 0.7M766.1 170.8l0.6 0.0l0.4 -0.5M757.2 174.2l0.9 -0.5l1.0 -0.2M759.5 174.1l0.9 -0.7l1.2 0.1M761.0 174.1l0.7 0.3l0.5 0.6M762.9 184.0l0.7 -0.8l0.6 -0.9M764.7 182.3l0.4 0.8l-0.1 0.9M758.6 174.3l0.5 -0.5l0.4 -0.6M754.9 178.8l1.0 0.2l1.0 0.2M761.7 173.0l-1.1 -0.6l-1.0 0.7M761.6 172.3l-0.2 0.7l0.3 0.7M762.0 174.3l0.9 -0.2l0.7 -0.6M761.6 171.5l0.5 -0.4l0.6 -0.2M762.9 176.9l-0.6 0.4l-0.4 0.7M754.6 173.8l-0.8 0.5l-0.9 -0.1M762.5 190.0l0.8 0.1l0.5 0.6M760.8 180.0l0.6 1.1l-0.5 1.2M764.7 178.9l0.3 0.4l0.5 0.1M759.1 171.9l-0.2 0.9l0.7 0.7M759.5 178.0l0.4 -0.7l0.7 -0.4M758.4 180.0l-0.6 -0.3l-0.6 -0.4M760.7 175.0l0.2 0.5l0.2 0.5M764.1 179.5l0.5 0.8l0.8 0.4M760.5 169.3l0.8 -0.2l0.7 0.5M762.8 173.8l1.3 -0.2l0.7 -1.0M760.6 170.6l-0.8 -0.7l-1.0 -0.2M763.6 171.1l0.5 1.2l-0.2 1.3M761.4 176.8l0.5 0.9l-0.0 1.0M767.8 173.1l0.2 0.6l0.6 0.2M757.3 179.1l-0.8 0.8l-1.0 0.5M763.1 169.2l0.1 -0.9l-0.1 -0.9M756.3 175.5l-0.6 -1.0l-0.1 -1.2M760.4 181.5l-0.6 0.2l-0.2 0.6M751.7 179.3l-0.2 -0.5l0.4 -0.4M759.7 171.3l0.7 0.0l0.7 -0.3M758.5 176.7l-0.7 -0.7l-0.4 -0.9M755.5 176.7l0.9 0.8l-0.0 1.2M764.5 171.1l0.0 0.7l0.7 0.3M762.2 169.0l0.9 -0.4l0.9 0.3M761.6 174.9l1.1 0.5l0.0 1.2M759.4 171.2l-0.9 0.7l-0.5 1.1M767.1 178.9l1.0 0.4l0.8 0.7M763.7 179.2l-0.2 1.1l-0.8 0.8M759.4 178.5l-0.5 0.7l-0.6 0.6M763.7 175.4l0.6 0.8l0.7 0.7M760.2 170.8l-1.1 -0.3l-1.0 0.5M761.0 174.1l-0.9 0.1l-0.9 0.0M763.8 179.3l-0.1 0.7l-0.0 0.7M758.2 177.9l-0.5 -1.1l0.8 -1.0M761.7 179.1l-0.8 0.5l-1.0 0.1M756.7 174.1l1.3 -0.0l1.0 0.8M760.4 183.2l1.2 0.3l1.0 0.8M764.2 174.6l-0.2 -0.7l0.5 -0.5M760.7 177.0l-0.2 1.0l-0.3 1.0M762.6 171.0l0.2 -1.2l-0.9 -0.8M763.0 178.5l0.6 0.7l0.2 0.9M762.4 180.7l0.0 0.5l0.3 0.4M759.9 182.4l0.5 -0.1l0.5 -0.1M755.2 177.7l0.8 1.0l1.2 0.5M757.0 174.6l-1.1 -0.5l-0.9 -0.8M755.3 184.6l0.6 1.1l0.1 1.3M760.9 187.9l0.6 -0.7l0.9 -0.1M763.1 178.2l-1.2 0.2l-1.1 0.5M765.6 176.2l-0.2 -1.1l-1.0 -0.5M765.1 173.9l0.4 0.4l0.1 0.6M752.2 173.1l0.6 -0.7l0.4 -0.8M761.3 165.8l-0.3 0.9l0.5 0.8M761.8 176.9l-0.7 0.7l-1.0 -0.1M760.5 166.4l-0.0 1.2l0.5 1.1M757.0 180.0l0.9 -0.0l0.4 -0.8M757.1 180.3l-0.3 -0.6l-0.5 -0.4M762.8 180.5l-0.6 0.5l-0.6 0.5M760.6 171.1l-0.1 -0.8l0.7 -0.5M761.6 177.5l0.7 0.5l0.9 0.2M760.7 176.9l0.1 -0.5l0.3 -0.5M763.4 175.9l-1.0 -0.6l-1.1 -0.5M761.4 176.0l-1.0 -0.5l-1.0 -0.5M765.8 166.8l0.5 -0.8l0.7 -0.5M764.3 172.6l0.6 0.2l0.6 0.4M762.2 178.0l0.9 -0.2l0.5 0.8M764.1 170.7l-0.6 0.3l-0.0 0.7M761.3 181.0l-0.5 -0.4l-0.5 -0.3M755.1 182.4l-0.4 1.1l-0.7 0.9M763.4 175.3l-0.1 0.9l0.4 0.8M752.8 170.7l-0.6 -0.1l-0.4 0.5M757.6 173.4l0.8 0.0l0.6 0.6M758.0 174.0l1.2 -0.3l0.2 -1.3M761.3 181.8l-0.4 0.6l-0.6 0.2M764.2 173.9l0.9 -0.2l1.0 0.1M753.6 175.9l0.7 -0.5l0.7 -0.6M762.5 169.3l-0.3 -0.5l-0.6 -0.1M759.7 177.4l-0.5 0.6l0.2 0.8M763.9 180.9l0.5 -0.4l0.7 -0.1M760.0 176.8l0.5 -0.2l0.5 -0.3M763.7 176.8l-0.5 0.6l-0.5 0.6M765.8 175.4l-1.1 0.4l-1.1 0.5M759.2 172.5l-0.0 -0.6l-0.4 -0.4M758.4 170.4l-0.3 0.4l-0.4 0.3M763.6 178.9l0.4 -1.1l1.0 -0.5M765.5 180.4l1.3 0.2l0.9 0.9M761.6 168.9l0.5 -1.0l1.1 -0.1M762.0 177.1l-0.2 -0.6l0.3 -0.5M754.9 179.8l0.7 0.6l0.4 0.9M760.3 174.0l0.1 1.2l-0.7 0.9M759.7 176.5l-0.2 -1.1l0.2 -1.1M765.9 175.6l0.3 -0.6l-0.1 -0.7M775.0 174.7l0.8 0.6l0.4 0.9M757.5 174.0l-0.7 1.0l0.3 1.2M766.0 179.9l0.8 0.1l0.8 0.2M759.2 173.8l-0.7 -0.8l0.1 -1.0M751.6 178.1l-1.2 0.4l-1.0 0.6M760.0 173.3l-0.8 -0.8l-1.1 0.3M760.7 174.9l0.2 -0.6l-0.2 -0.6M759.3 179.3l-0.6 -0.5l-0.1 -0.8M755.6 181.1l-0.4 0.8l-0.5 0.7M756.4 182.0l-0.7 -0.7l-0.4 -0.9M761.0 179.9l0.7 -0.7l0.7 -0.8M769.8 176.4l-0.2 -0.6l-0.3 -0.5M756.6 179.6l-0.3 0.8l-0.8 0.3M761.8 177.6l-0.5 -0.1l-0.5 0.1M760.5 183.2l0.4 0.8l-0.4 0.8M758.7 173.0l0.5 1.2l-0.3 1.2M759.4 173.7l0.1 1.2l-0.8 0.9M762.1 173.6l-0.2 -1.1l0.8 -0.9M760.2 175.1l0.7 0.2l0.4 0.6M759.9 177.6l-0.6 0.1l-0.6 0.3M759.3 172.1l-0.9 -0.2l-0.2 -0.9M764.7 174.5l0.8 0.7l1.1 -0.1M762.2 176.6l-1.1 0.4l-1.1 0.4M761.4 171.8l-0.2 -0.9l0.3 -0.8M758.6 178.9l0.3 -1.1l0.9 -0.6M757.4 170.3l-0.9 -0.5l-0.6 -0.8M759.6 177.1l0.8 -0.9l0.4 -1.1M758.8 177.3l0.5 -0.2l0.5 -0.3M768.1 177.7l-0.4 -1.1l-0.2 -1.1M757.2 168.7l0.6 0.4l0.7 -0.3M759.0 176.8l-0.6 -0.7l-0.2 -1.0M761.2 175.2l0.8 0.2l0.8 0.2M759.7 173.1l0.9 -0.4l0.8 -0.4M756.7 168.8l-0.1 -1.2l-0.9 -0.8M761.2 177.0l-0.9 -0.6l-1.1 0.1M758.4 174.9l-1.1 -0.7l-0.1 -1.3M760.3 177.9l0.0 0.9l0.4 0.8M756.1 178.1l0.7 -0.4l0.6 -0.5M758.3 181.0l0.5 0.8l0.5 0.8M762.0 171.8l0.7 -0.4l0.7 -0.4M760.3 176.7l-0.2 -1.0l0.9 -0.6M767.8 179.0l0.2 -1.2l-0.8 -0.9M760.0 182.8l-0.3 -0.5l-0.6 0.0M766.6 175.2l-0.6 0.6l0.0 0.9M758.1 186.1l1.0 0.7l0.4 1.2M756.0 181.3l-1.0 -0.3l-0.9 -0.5M752.2 181.1l0.1 -0.8l0.1 -0.8M760.1 178.5l-0.2 1.2l0.6 1.0M760.4 177.6l0.7 -0.1l0.5 -0.5M760.1 174.8l0.4 -1.0l-0.7 -0.8M761.2 173.9l0.9 0.6l-0.1 1.1M758.4 179.0l-1.1 -0.0l-0.5 -1.0M758.8 173.0l-1.2 0.2l-0.9 0.8M758.7 178.3l1.1 -0.1l0.8 -0.8M762.1 167.2l-0.3 0.7l0.1 0.8M763.0 173.1l0.5 -0.6l0.8 -0.3M764.8 175.2l0.5 1.1l-0.8 0.9M753.8 181.0l1.3 -0.0l0.8 1.0M757.2 177.5l0.1 0.7l0.4 0.6M760.6 176.7l-0.2 0.5l-0.5 0.3M751.2 182.7l-0.3 -0.6l0.0 -0.7M752.1 170.4l-0.2 -0.7l-0.6 -0.4M757.4 178.1l0.2 1.1l0.7 0.9M756.8 176.1l-0.4 -0.5l-0.6 -0.3M759.7 181.6l-1.1 -0.5l-0.8 -0.9M767.0 176.7l0.7 -1.0l-0.1 -1.2M758.4 175.2l-0.8 -0.8l0.1 -1.1M755.5 175.8l-0.2 0.6l-0.1 0.6M763.0 181.9l0.1 0.8l0.8 0.3M757.8 183.5l0.7 0.6l0.2 0.9M765.8 174.5l1.1 0.3l0.5 1.0M764.3 170.8l-0.2 -1.1l-0.4 -1.0M763.0 177.5l-0.9 0.2l-0.5 -0.8M757.7 179.6l0.0 -0.7l-0.2 -0.7M762.5 180.5l0.6 0.8l0.7 0.7M761.6 179.3l-0.6 -0.4l0.1 -0.7M764.3 175.7l-0.3 -0.7l-0.6 -0.3M762.3 167.6l0.0 0.7l-0.2 0.7M762.0 178.7l-0.8 0.0l-0.7 0.5M757.4 176.7l-0.9 0.6l-1.0 0.4M756.5 178.1l1.2 -0.3l1.0 0.8M760.6 172.4l-0.6 -0.1l-0.2 -0.6M761.2 177.9l-0.4 -0.4l-0.1 -0.6M758.3 182.5l-0.6 -0.2l-0.6 -0.2M760.4 176.3l0.5 0.6l0.4 0.7M757.2 178.7l-0.3 -0.6l-0.6 -0.4M751.6 178.3l-0.5 0.3l-0.2 0.5M750.0 175.1l-0.6 -0.7l-0.9 -0.2M756.4 183.3l0.8 -0.1l0.8 0.2M758.4 170.6l-0.1 0.7l0.1 0.7M757.7 176.8l1.2 0.3l1.2 -0.2M757.3 176.7l1.0 -0.3l0.9 0.5M761.3 183.1l-0.6 0.3l-0.7 0.0M768.2 182.3l0.7 0.9l0.8 0.8M764.7 181.7l1.0 0.6l1.1 -0.2M760.4 177.5l1.0 0.6l0.4 1.1M753.6 179.0l-0.2 0.8l0.0 0.8M757.5 180.2l-1.1 0.1l-0.9 -0.5M757.6 179.4l-0.6 -0.2l-0.5 0.4M766.9 178.2l0.3 0.5l-0.0 0.6M758.5 172.8l0.8 0.9l1.2 0.3M765.0 181.0l0.2 1.3l-0.9 0.9M754.3 179.0l0.6 0.9l0.9 0.6M762.9 182.3l0.9 -0.4l0.9 0.3M757.8 179.0l-0.3 -1.0l-1.0 -0.1M761.9 182.2l-0.6 -0.0l-0.6 0.2M762.3 175.6l0.5 0.0l0.5 0.1M770.2 173.9l-0.6 -0.2l-0.5 0.3M765.4 171.8l-0.9 -0.9l-0.8 -1.0M760.1 172.6l1.2 0.0l1.2 -0.1M767.2 178.9l0.5 0.5l-0.0 0.7M756.8 168.1l0.5 -0.6l0.3 -0.7M764.3 182.4l0.5 -0.7l0.8 -0.2M766.1 176.4l-1.0 0.0l-1.0 -0.1M757.5 180.0l0.4 -0.6l-0.2 -0.7M762.8 175.9l0.3 0.7l-0.5 0.5M753.6 174.1l-0.2 -1.1l-1.1 -0.2M765.0 179.9l0.1 -1.1l-0.2 -1.1" fill="none" stroke="#000" stroke-width="0.6" opacity="0.85" stroke-linecap="round"/></g>
<path d="M776 184.5 V192 H768.5 Z" fill="#f37878"/>
<path d="M770 188.6 H774.6 M772.3 186.3 V190.9" stroke="#000" stroke-width="1.3"/>
<clipPath id="c2"><rect x="778" y="160" width="32" height="32"/></clipPath>
<g clip-path="url(#c2)"><ellipse cx="793.5" cy="177" rx="5.5" ry="3.6" fill="#000" opacity="0.4" filter="url(#bl1)"/><path d="M797.3 180.3l0.6 1.0l0.3 1.1M788.7 179.8l-0.5 -0.2l-0.5 -0.3M789.4 174.5l0.8 -0.8l0.6 -1.0M793.8 178.6l0.4 -1.0l0.7 -0.9M788.4 178.3l0.2 1.0l0.8 0.5M788.8 174.1l-0.3 -0.6l-0.7 -0.1M790.0 181.0l-1.2 -0.1l-1.2 0.1M785.4 180.9l0.3 0.6l0.2 0.7M790.2 174.7l-0.8 -0.3l-0.6 -0.6M800.1 173.4l-0.6 -0.7l0.3 -0.9M787.4 178.4l0.8 -0.8l0.5 -1.0M793.2 172.9l0.9 -0.5l1.0 -0.5M799.1 176.4l-1.1 0.8l-1.2 -0.6M794.3 178.0l0.8 -1.0l0.5 -1.2M793.3 181.6l0.6 -0.3l0.6 -0.3M791.8 175.2l-0.5 0.3l-0.5 0.3M793.7 178.2l-0.5 0.4l0.0 0.6M796.3 179.5l-0.5 1.1l-0.3 1.1M793.6 178.9l-0.3 1.1l0.5 1.1M785.4 178.2l0.4 -0.8l0.9 -0.2M791.4 175.3l0.5 0.4l0.2 0.6M786.8 180.7l1.3 -0.3l1.3 -0.4M797.2 177.1l0.2 1.1l-0.3 1.0M799.8 174.8l1.0 -0.3l1.0 -0.3M795.4 174.9l0.2 -1.1l1.0 -0.6M796.3 177.7l0.6 -0.2l0.6 -0.3M789.3 174.9l1.0 -0.9l0.6 -1.2M800.3 182.0l-0.7 0.2l-0.3 0.7M799.6 177.2l-0.2 1.0l-0.9 0.4M782.2 177.7l1.1 0.5l0.6 1.0M794.6 176.8l-1.0 -0.0l-1.0 -0.3M789.9 177.4l1.1 -0.7l1.3 -0.2M799.2 176.0l1.0 0.5l1.0 -0.5M793.5 172.7l0.2 0.6l0.6 0.2M799.1 184.4l0.2 1.3l1.1 0.7M790.8 179.9l-0.9 1.1l-0.1 1.4M790.4 177.2l0.9 0.7l1.1 0.3M786.5 177.4l0.5 0.3l0.3 0.5M794.4 177.0l-1.3 0.4l-1.2 -0.7M799.1 176.8l0.5 -0.1l0.5 -0.1M796.1 174.6l-0.8 0.3l-0.7 0.6M798.3 169.6l0.1 0.8l-0.5 0.6M793.2 171.5l-0.5 -1.2l0.5 -1.2M791.0 175.2l1.1 0.6l0.2 1.3M796.3 175.5l-0.1 -1.3l-0.9 -1.0M796.3 177.3l0.2 1.1l-0.6 0.9M796.4 172.8l1.4 -0.2l1.3 -0.4M800.0 174.7l0.0 1.0l0.8 0.7M786.7 180.2l1.0 0.1l1.0 -0.1M793.2 178.1l-0.8 -0.1l-0.5 0.6M787.9 179.6l1.1 0.6l1.1 -0.6M789.2 177.5l0.8 -1.0l1.2 -0.4M792.4 179.6l0.4 -0.9l0.7 -0.7M793.0 175.1l-1.0 0.9l-0.6 1.2M795.0 175.6l0.9 0.1l0.9 -0.4M787.0 174.1l0.9 0.2l0.9 -0.1M800.9 173.8l0.9 -0.8l0.5 -1.0M789.3 174.4l-0.5 0.6l-0.7 0.3M796.2 175.6l-0.4 0.5l-0.2 0.6M791.9 177.9l-0.5 -0.6l0.1 -0.8M793.8 181.9l0.6 -0.1l0.6 -0.3M798.1 176.5l-0.3 0.6l-0.6 0.2M789.2 182.5l-0.6 -0.2l-0.0 -0.7M799.7 174.1l-0.9 -0.7l0.2 -1.2M794.6 179.1l0.1 -0.9l0.8 -0.3M796.3 173.9l0.6 0.9l0.3 1.0M786.5 174.5l-1.3 0.2l-1.3 -0.1M798.0 181.7l0.6 1.1l-0.6 1.1M794.5 178.9l-0.3 -0.9l-0.5 -0.8M793.5 174.3l0.7 0.7l-0.2 1.0M795.6 176.6l-0.0 -0.8l0.7 -0.4M791.8 177.9l-0.5 0.8l0.3 0.9M794.0 174.3l-0.0 -0.7l-0.0 -0.7M791.8 175.3l-0.3 1.2l0.0 1.3M789.8 180.4l-0.5 -1.2l-0.3 -1.2M799.4 172.0l1.2 -0.6l1.3 0.0M792.0 174.2l1.0 0.8l1.2 0.6M790.5 180.2l0.0 -1.2l-1.0 -0.8M795.8 170.0l1.3 -0.2l1.3 0.0M798.2 174.4l0.8 -1.1l0.4 -1.3M799.0 180.5l1.2 -0.5l1.2 -0.6M791.2 177.5l0.4 -0.6l-0.2 -0.7M802.0 181.1l-1.0 0.6l-0.0 1.2M785.9 177.6l0.1 -0.7l0.1 -0.7M797.4 170.9l0.9 0.6l0.0 1.0M787.6 173.4l-0.3 0.9l0.7 0.6M795.3 173.3l0.6 1.2l1.2 0.6M800.7 178.0l1.0 0.5l1.0 -0.4M800.9 177.7l-0.8 -0.7l-0.4 -1.0M792.9 175.2l-0.9 0.5l-1.0 -0.4M790.3 174.2l0.5 -1.1l-0.2 -1.2M793.7 177.3l0.5 -0.5l0.6 -0.4M786.8 176.3l1.0 -0.4l0.4 -1.0M790.8 177.8l-0.9 0.8l-1.1 0.4M787.1 172.7l0.7 -0.0l0.6 0.3M792.8 176.4l0.9 -0.0l0.8 0.3M794.1 180.1l1.0 0.9l1.3 -0.5M800.2 179.1l-0.7 -0.4l-0.0 -0.8M791.9 173.9l-0.3 -1.3l0.8 -1.1M788.3 180.9l0.2 0.8l-0.7 0.5M793.1 174.0l-0.9 -0.2l-0.6 -0.6M788.5 176.5l-1.1 0.6l-1.3 -0.3M793.7 180.0l0.9 -0.7l1.1 -0.4M791.4 175.5l-1.1 -0.5l-1.1 -0.3M789.4 178.7l-0.6 -0.4l-0.1 -0.7M800.8 179.1l-0.7 -0.1l-0.7 0.3M793.2 178.8l0.8 -0.0l0.4 -0.6M786.7 170.1l-0.2 0.7l-0.3 0.6M791.2 180.0l-1.3 -0.6l-1.4 -0.2M788.8 180.6l-1.2 -0.6l-1.2 -0.4M789.9 174.3l-0.7 -0.6l-0.9 0.1M796.8 179.1l1.0 -0.0l1.0 -0.0M786.0 178.7l-0.5 0.7l-0.2 0.8M788.8 175.5l-1.1 -0.8l-1.3 -0.4M783.3 170.4l-0.1 -1.3l0.8 -1.0M795.7 181.0l-0.5 0.7l0.2 0.8M795.5 170.3l0.6 -0.7l0.9 0.1M795.6 173.1l0.4 -1.1l-0.9 -0.8M788.7 174.0l-0.8 1.0l-1.2 0.4M797.3 178.6l0.8 0.0l0.5 -0.6M797.4 177.0l-0.1 -0.6l0.5 -0.4M796.9 182.2l-0.2 1.3l-0.2 1.3M796.2 174.3l-0.2 1.3l1.1 0.7M795.2 178.2l-1.1 -0.4l-1.2 0.3M785.6 174.1l1.2 0.0l0.8 -0.9M798.8 177.6l-0.6 0.6l-0.8 0.3M799.7 177.4l0.8 1.1l0.9 1.0M794.8 180.6l-0.5 0.3l-0.6 -0.0M785.5 179.4l0.1 -1.2l1.1 -0.5M791.8 180.7l-1.0 -0.5l-0.5 -0.9M794.1 172.7l-0.8 -0.6l-1.0 0.2M793.2 178.5l-0.9 -0.6l-1.0 0.1M786.9 181.2l0.5 0.8l0.5 0.8M789.8 177.4l1.0 -0.3l1.0 -0.3M794.6 177.4l-0.7 0.1l-0.7 -0.2M793.1 176.0l-0.6 0.5l-0.7 0.3M785.1 174.6l0.9 0.2l0.7 0.7M794.2 177.7l-0.7 0.2l-0.1 0.7M797.9 173.0l-0.6 -1.1l0.1 -1.3M786.2 178.8l1.2 -0.6l1.2 0.6M796.5 169.4l1.0 -0.4l0.9 -0.6M789.1 169.4l0.7 0.5l0.9 -0.2M798.2 179.4l0.2 0.5l0.1 0.6M788.4 175.8l0.6 0.1l0.6 0.2M795.5 177.6l-0.7 1.1l-1.3 0.5M799.6 173.6l0.9 0.7l0.6 1.0M794.9 176.5l0.3 0.5l0.4 0.5M791.5 179.0l0.2 -1.3l1.3 -0.5M796.0 177.8l-1.1 0.4l-1.1 -0.4M794.8 175.7l-0.5 -0.2l-0.4 -0.4M795.4 174.7l-0.4 0.4l-0.6 -0.1M791.5 179.0l-0.5 0.4l-0.6 -0.3M798.8 175.5l-0.8 0.6l-0.9 -0.4M796.7 177.5l-0.4 -0.7l-0.4 -0.7M797.5 178.8l1.0 -0.5l1.1 -0.2M795.2 175.5l-0.4 -1.3l-0.7 -1.1M799.8 177.4l0.5 -0.3l0.3 -0.5M791.9 173.5l1.0 -0.1l0.9 -0.4M790.2 179.7l0.2 -1.2l0.1 -1.2M788.9 179.9l0.4 0.9l0.7 0.7M800.4 177.5l0.7 0.4l0.5 0.5M797.9 173.8l0.5 -0.1l0.5 0.2M793.0 172.3l0.5 -0.1l0.2 -0.5M802.7 175.2l0.7 0.6l-0.0 0.9M792.5 176.6l0.3 1.2l1.1 0.6M791.7 182.4l0.4 0.9l1.0 0.4M796.3 180.3l0.2 -0.8l-0.3 -0.8M791.6 172.4l1.1 0.1l1.1 0.2M799.7 176.7l-0.4 -0.4l-0.4 -0.4M796.2 177.6l-1.3 -0.0l-0.5 -1.2M796.3 174.0l-1.1 0.4l-0.9 0.7M801.1 177.7l1.2 -0.4l1.3 0.0M794.4 175.1l0.1 1.3l0.1 1.3M794.4 181.3l-0.2 -1.3l-1.1 -0.6M791.8 180.4l0.7 -1.2l-0.5 -1.3M791.2 179.7l1.0 -0.5l0.7 -0.9M790.8 176.1l0.6 -0.7l0.7 -0.6M795.1 173.6l0.7 0.3l0.6 -0.6M781.5 180.8l0.1 -1.4l-0.9 -1.0M790.2 172.2l-1.2 0.4l-0.3 1.2M803.1 172.7l0.2 0.5l-0.3 0.5M781.9 172.7l-0.7 -0.2l-0.7 0.2M791.3 174.6l1.2 -0.1l1.2 0.1M799.2 173.1l-0.8 0.7l-0.7 0.8M795.7 177.4l-0.1 0.5l-0.4 0.3M790.0 176.9l0.9 0.6l1.0 0.4M797.7 173.8l1.1 0.8l0.1 1.4M788.3 181.1l-0.4 -0.4l-0.6 -0.1M791.0 180.5l-1.0 -0.0l-0.5 0.9M791.9 178.2l-1.0 0.9l0.2 1.4M798.2 177.2l-0.4 0.4l-0.6 -0.1M796.2 171.7l-0.6 -0.8l-0.5 -0.8M793.9 177.6l1.3 -0.3l0.9 -0.9M791.2 176.7l0.6 -1.2l1.3 0.1M803.9 181.5l0.9 0.7l-0.2 1.2M796.1 180.7l0.4 -1.1l1.1 -0.5M790.8 173.9l-1.2 -0.3l-0.8 -0.9M788.8 171.8l-0.1 0.8l0.1 0.8M792.9 181.7l1.3 0.1l1.0 -0.9M789.2 172.9l-0.1 0.5l-0.5 0.1M798.1 175.2l0.1 0.9l-0.2 0.9M798.1 179.9l-0.2 -0.7l-0.4 -0.5M790.7 178.6l-0.6 0.2l-0.4 0.4M798.2 173.7l-0.6 0.2l-0.5 0.4M792.4 173.7l0.1 -1.1l0.1 -1.1M791.6 173.7l-0.8 1.2l-1.3 0.6M793.0 177.3l-0.8 0.2l-0.6 -0.5M800.6 175.9l1.1 0.2l1.0 -0.6M785.6 174.9l1.3 0.5l0.5 1.3M788.5 178.7l-0.7 1.0l-1.2 -0.2M785.6 178.1l0.5 0.4l-0.1 0.6M797.0 181.3l-0.1 -0.6l0.4 -0.4M788.5 175.7l-0.2 -0.8l0.5 -0.7M786.3 174.8l-0.8 0.4l-0.6 0.7M797.1 182.6l-1.1 -0.7l-0.8 -1.0M794.0 173.1l-1.3 0.0l-0.8 1.0M793.0 176.7l1.0 1.0l1.3 -0.5M798.7 168.1l-0.4 -1.3l-1.3 -0.6M792.3 172.9l-0.6 -0.0l-0.3 0.5M794.4 175.3l-0.2 -0.6l-0.0 -0.6M805.0 179.7l-0.3 -0.6l0.5 -0.5M796.3 179.9l-0.5 -0.3l-0.3 -0.5M792.7 182.4l1.3 -0.2l0.6 -1.2M786.5 177.4l0.5 0.1l0.3 0.4M792.6 175.1l-0.1 -1.2l-0.7 -1.0M786.1 175.3l1.1 0.4l0.1 1.1M807.7 176.0l0.5 -1.2l0.1 -1.3M791.3 182.0l0.1 0.7l-0.1 0.7M785.0 181.0l0.5 0.6l-0.2 0.8M791.1 181.5l-1.3 -0.1l-1.0 0.9" fill="none" stroke="#000" stroke-width="0.55" opacity="0.85" stroke-linecap="round"/></g>
<path d="M810 184.5 V192 H802.5 Z" fill="#f37878"/>
<path d="M804 188.6 H808.6 M806.3 186.3 V190.9" stroke="#000" stroke-width="1.3"/>
<clipPath id="c3"><rect x="812" y="160" width="32" height="32"/></clipPath>
<g clip-path="url(#c3)"><ellipse cx="828" cy="176.5" rx="3.6" ry="6.2" fill="#000" opacity="0.35" filter="url(#bl1)"/><path d="M831.3 175.7l-0.2 -1.1l-0.8 -0.7M831.6 179.8l0.6 0.6l-0.1 0.8M829.0 174.6l0.6 0.3l0.2 0.7M830.1 177.1l0.5 0.4l0.4 0.4M829.3 181.4l-0.1 -1.1l-0.3 -1.0M828.9 169.9l0.3 -0.6l0.1 -0.7M821.7 170.4l-0.6 -0.6l-0.9 -0.1M827.6 180.1l1.2 -0.1l0.8 0.9M823.4 175.0l-0.3 0.8l0.5 0.8M826.0 178.4l1.0 0.7l1.2 -0.4M829.8 169.1l0.7 0.5l-0.2 0.9M831.8 175.9l0.1 -1.1l-0.4 -1.0M824.2 174.3l-0.9 0.7l-0.8 0.8M828.0 174.6l-0.5 0.2l-0.5 -0.0M830.6 171.8l-0.9 -0.4l-1.0 0.2M825.0 181.0l-0.5 -0.6l-0.5 -0.6M826.1 182.3l-0.3 -0.7l-0.0 -0.8M830.2 171.3l0.7 -0.1l0.5 0.6M829.2 181.0l0.2 -0.5l0.3 -0.4M833.0 167.5l-0.3 -0.7l-0.6 -0.5M827.2 175.1l1.2 0.2l1.1 0.6M829.7 181.2l-0.3 1.2l0.3 1.2M827.2 168.0l-0.3 0.6l-0.3 0.6M824.7 180.6l-0.5 1.0l-0.3 1.1M831.4 183.3l0.8 -0.6l0.9 -0.5M832.8 167.8l0.9 0.1l0.4 -0.8M826.9 179.8l-1.0 0.3l-0.8 -0.6M828.0 177.3l1.1 -0.0l1.1 0.1M828.7 177.6l0.8 -0.4l0.8 0.4M829.1 168.0l0.2 -0.7l-0.2 -0.7M823.3 180.1l0.3 -1.1l0.5 -1.0M826.0 177.0l-0.5 -0.9l-0.5 -0.9M826.8 162.2l0.5 -0.2l0.4 -0.4M824.5 171.3l-0.3 1.2l-0.2 1.2M828.1 174.8l-0.1 0.5l-0.4 0.3M820.7 174.7l-0.6 -0.5l-0.7 -0.2M826.6 178.9l0.8 0.6l1.0 0.2M823.5 178.8l-0.1 0.8l0.2 0.8M826.0 183.4l0.7 0.5l0.8 -0.3M826.8 172.7l0.9 -0.2l0.9 0.1M822.5 175.1l-0.3 -1.0l-1.0 -0.1M831.1 183.2l-1.1 0.7l-1.2 0.3M830.2 168.8l1.0 -0.2l0.7 0.7M825.9 178.3l0.5 0.4l-0.0 0.7M827.5 175.2l0.9 0.2l0.8 0.2M827.6 177.3l-0.1 1.2l-0.7 1.0M829.0 172.8l-0.3 -0.6l-0.6 -0.4M830.0 175.5l-0.2 0.7l-0.6 0.3M826.5 170.1l0.5 -0.7l0.9 0.1M828.4 172.2l0.1 0.9l0.2 0.9M829.1 169.2l-0.0 -1.0l-0.6 -0.8M827.7 161.8l-0.7 -0.8l-1.0 -0.2M830.4 180.3l-0.9 -0.6l-0.9 -0.5M826.8 175.9l0.6 0.2l0.6 -0.1M828.1 179.4l-0.4 0.7l-0.7 0.2M836.8 169.9l-0.0 -0.5l-0.3 -0.4M832.6 176.4l0.4 -0.5l0.0 -0.7M831.0 180.2l-0.6 0.7l0.1 0.9M830.9 177.3l0.9 -0.5l1.0 -0.3M831.0 178.6l-0.7 0.7l-0.5 0.9M828.8 172.5l-0.1 -0.5l-0.4 -0.3M829.7 166.8l-0.2 0.6l-0.7 0.1M826.9 175.3l1.0 -0.1l0.8 -0.5M825.1 176.3l-0.7 -0.4l-0.8 -0.2M827.7 172.1l0.5 -1.0l1.1 -0.0M831.4 185.0l-0.1 -0.6l0.4 -0.5M826.1 176.5l0.3 1.3l-0.6 1.2M828.7 187.4l1.0 0.2l0.9 0.6M832.5 168.2l-0.1 -1.2l-0.2 -1.2M830.9 174.3l-0.2 -1.1l-0.4 -1.0M830.0 169.0l0.5 0.8l0.6 0.8M827.4 175.8l-0.2 -0.8l0.2 -0.8M828.0 177.6l-1.0 0.2l-0.9 -0.4M822.0 173.8l0.3 0.5l0.4 0.4M825.2 169.1l0.9 0.4l1.0 0.0M826.7 176.1l0.5 0.9l0.8 0.6M831.5 175.6l-0.4 0.5l-0.4 0.5M825.7 176.2l0.9 -0.2l0.8 0.4M825.7 167.5l1.0 0.8l0.8 1.0M830.1 182.5l0.8 0.3l0.7 -0.5M831.1 178.2l0.6 -0.9l1.1 0.0M828.8 169.4l-1.0 -0.8l-1.2 0.3M824.3 175.7l1.2 0.1l1.0 0.6M825.1 184.3l-1.1 0.2l-1.1 0.0M830.3 171.8l0.9 0.6l1.1 -0.1M821.7 171.2l-0.1 -0.5l0.3 -0.4M831.3 175.3l-0.0 0.9l-0.1 0.9M833.6 179.4l-0.5 -0.6l0.1 -0.8M830.9 186.2l0.6 -0.7l-0.2 -0.9M826.7 177.3l-0.6 -0.2l-0.6 -0.2M825.8 179.0l-0.8 -0.5l-0.1 -0.9M824.3 178.7l-0.1 -0.6l-0.0 -0.6M829.5 182.0l-1.2 -0.1l-0.5 -1.1M826.0 186.1l-0.5 0.5l-0.6 0.4M825.7 188.4l0.4 -0.3l0.5 0.3M829.2 174.7l-0.5 -0.8l-0.9 -0.2M827.9 175.8l-0.5 0.7l-0.9 0.2M825.9 178.9l-0.9 0.2l-0.8 0.4M832.7 182.2l0.2 0.6l0.5 0.4M829.2 176.0l-0.7 -0.7l-1.0 -0.1M828.4 173.3l0.4 0.3l0.2 0.5M831.9 178.8l-0.3 -0.5l0.3 -0.5M829.7 180.0l0.2 -0.7l0.6 -0.4M826.3 168.2l-0.5 0.5l-0.5 0.5M827.5 175.7l0.6 0.4l0.6 -0.3M828.2 162.6l-0.8 -0.1l-0.8 0.1M831.4 170.6l-0.9 -0.4l-0.2 -1.0M826.5 174.1l0.4 -0.3l0.0 -0.5M829.0 181.3l-1.0 -0.5l-1.2 0.1M835.0 164.6l0.8 -0.8l0.9 -0.7M826.3 177.4l-0.5 0.5l-0.3 0.6M835.0 182.2l-0.5 0.3l-0.1 0.6M826.9 177.2l-0.4 -0.7l-0.1 -0.7M826.4 180.9l0.6 -0.6l0.8 0.2M825.8 168.8l-0.1 -0.9l-0.5 -0.8M827.7 175.2l0.0 1.1l-0.8 0.8M833.2 177.7l-0.6 0.2l-0.5 -0.4M826.0 174.7l0.5 -0.3l0.6 -0.0M827.3 168.1l-0.7 0.1l-0.5 0.6M828.2 170.4l1.0 0.2l0.8 0.7M828.9 170.8l-0.4 -0.9l0.3 -0.9M827.7 180.1l0.4 -0.6l-0.4 -0.6M825.8 168.3l0.9 -1.0l-0.4 -1.2M830.3 175.1l0.5 0.5l0.7 -0.1M829.7 176.6l-0.5 -0.2l-0.3 -0.5M830.1 176.6l0.3 0.5l0.6 -0.1M826.9 176.4l0.4 0.3l0.0 0.5M829.7 181.0l0.1 -0.6l-0.1 -0.6M830.1 170.1l0.6 0.7l-0.1 0.9M825.7 175.5l0.3 1.2l0.6 1.1M828.8 180.4l-1.0 -0.7l-0.6 -1.0M825.8 173.5l0.1 1.0l0.4 0.9M826.5 184.7l1.0 -0.6l0.2 -1.2M828.3 170.0l1.0 0.5l1.0 0.6M826.9 176.7l-0.8 -0.3l-0.4 -0.8M829.3 175.0l0.7 -0.4l-0.1 -0.8M828.1 167.0l0.2 -0.6l0.5 -0.4M834.7 171.0l-0.8 0.9l0.3 1.1M831.0 172.0l-0.6 -0.9l-1.0 -0.5M828.2 178.4l-0.1 -0.5l-0.5 -0.1M826.0 171.5l0.6 -0.0l0.6 0.0M829.9 185.3l1.2 -0.4l0.4 -1.2M827.6 170.0l0.7 0.5l0.3 0.8M827.4 170.9l0.7 0.4l0.8 0.1M823.7 186.8l-0.7 -0.7l-0.9 0.4M825.2 184.0l0.3 0.4l0.5 0.2M830.5 181.7l-0.5 1.0l-1.1 0.5M823.2 184.6l0.9 -0.9l1.2 0.4M833.6 168.9l-1.3 0.3l-0.9 0.9M827.7 175.7l1.0 -0.0l0.5 -0.9M832.1 174.8l-0.7 0.5l-0.8 -0.4M829.4 175.2l0.0 0.6l0.6 0.2M830.5 181.9l-0.7 -0.9l0.2 -1.1M825.9 165.1l1.3 0.2l1.3 -0.0M828.3 169.5l0.1 -1.0l-0.7 -0.8M827.1 176.1l0.8 -0.8l0.3 -1.0M826.8 180.6l0.7 0.6l0.3 0.9M826.2 181.1l0.7 -0.8l-0.1 -1.0M829.0 187.6l-0.4 -0.5l-0.4 -0.4M825.2 181.6l0.7 -0.9l0.2 -1.1M828.0 178.9l-0.1 1.0l-0.5 0.9M823.1 175.6l0.5 0.4l0.6 -0.1M826.9 169.2l-0.8 0.8l-0.3 1.2M833.7 171.3l0.5 0.9l0.1 1.0M827.9 180.5l0.6 0.6l0.1 0.8M825.1 184.1l-0.7 0.8l-0.3 1.0M824.7 171.8l-0.7 0.0l-0.4 0.6M830.0 182.4l-0.5 -0.1l-0.5 -0.3M829.5 177.9l0.6 -0.6l0.5 -0.7M825.9 171.7l-0.6 1.1l-0.9 0.9M824.8 176.5l-1.0 -0.6l-1.1 -0.3M828.2 178.9l1.0 -0.8l1.3 0.1M824.4 172.3l-0.3 -0.4l-0.5 -0.3M826.6 178.9l-1.2 -0.2l-0.8 -0.9M826.2 181.2l0.8 -0.5l0.4 -0.9M826.7 174.4l0.3 -0.8l0.0 -0.8M828.6 173.6l-0.6 0.1l-0.5 0.3M823.2 188.2l0.0 -0.7l-0.5 -0.4M829.6 181.4l-0.7 -1.0l-0.7 -1.0M828.7 178.2l-0.9 -0.5l-0.3 -1.0M828.8 178.2l0.7 0.6l0.2 0.9M826.7 179.7l0.6 0.7l0.9 0.3M826.0 171.8l-0.4 -0.5l-0.3 -0.5M823.5 175.8l-0.1 0.6l0.3 0.5M823.9 168.4l-0.9 -0.3l-0.9 -0.3M830.5 174.7l0.8 0.1l0.7 -0.3M828.8 181.1l-0.4 -1.2l-1.3 -0.1M829.3 179.5l-0.0 -0.7l-0.3 -0.7M826.2 175.4l-0.5 -0.0l-0.5 0.2M830.2 171.6l-0.5 -0.5l-0.7 -0.0M829.6 171.2l-0.5 0.9l-0.9 0.4M827.7 172.7l0.7 -0.5l0.4 -0.7M833.7 184.6l-0.9 -0.3l-0.2 -0.9M830.2 178.5l0.8 0.4l0.7 -0.6M831.2 173.6l0.5 -1.1l1.2 -0.1M826.6 183.5l-0.7 -1.0l-1.1 -0.5M825.0 168.9l-0.5 -0.1l-0.3 -0.5M831.1 177.8l-0.2 0.8l-0.8 0.3M834.1 173.5l0.3 -0.4l0.4 -0.4M823.7 174.4l-1.0 0.5l-0.1 1.1M830.5 166.6l-0.9 0.1l-0.3 0.9M830.5 167.9l0.7 0.5l0.9 -0.2M832.8 175.1l0.6 -0.7l0.9 -0.2M828.6 182.4l-1.0 -0.7l-1.1 -0.3M831.4 177.0l0.1 0.7l0.5 0.4M830.1 172.5l-0.4 0.7l-0.5 0.6M823.6 176.5l0.2 -1.2l-0.2 -1.2M822.4 176.0l-0.0 -0.6l-0.0 -0.6M824.8 181.1l-0.1 1.0l-0.2 1.0M824.8 171.1l-0.4 0.6l0.3 0.7M824.5 167.8l0.2 0.8l0.7 0.4M831.1 170.7l0.8 -0.3l0.6 -0.7M825.3 176.2l-0.8 0.8l-0.8 0.7M829.0 180.8l0.4 -0.9l0.9 -0.3M828.2 175.0l-0.4 1.0l-0.1 1.1M823.4 178.8l-0.0 0.5l0.3 0.4M824.9 180.8l0.6 0.1l0.5 0.4M827.9 169.4l-0.3 -0.7l0.4 -0.7M831.5 183.5l-0.2 -1.1l0.9 -0.7M827.5 181.2l-0.7 0.1l-0.6 0.2M825.2 176.6l0.3 -0.6l0.6 -0.4M827.2 171.6l1.0 -0.7l-0.0 -1.2M827.1 183.0l0.6 -0.9l0.9 -0.6M827.2 170.4l0.5 -0.3l0.5 -0.1M824.5 175.0l0.6 0.1l0.5 0.3M825.1 172.7l-0.5 -0.1l-0.5 -0.2M832.1 175.2l0.4 -0.2l0.4 0.2M824.1 176.7l0.4 -0.6l0.6 -0.4M829.4 164.0l-0.7 -0.2l-0.7 0.3M830.1 176.9l1.2 0.1l1.0 0.8" fill="none" stroke="#000" stroke-width="0.55" opacity="0.85" stroke-linecap="round"/></g>
<path d="M844 184.5 V192 H836.5 Z" fill="#f37878"/>
<path d="M838 188.6 H842.6 M840.3 186.3 V190.9" stroke="#000" stroke-width="1.3"/>
<clipPath id="c4"><rect x="608" y="194" width="32" height="32"/></clipPath>
<g clip-path="url(#c4)"><ellipse cx="622.5" cy="209" rx="5.4" ry="5.4" fill="#333" opacity="0.6" filter="url(#bl1)"/><path d="M629.6 207.2l-0.1 -0.7l-0.4 -0.6M621.0 202.6l0.6 0.1l0.3 0.6M626.4 212.6l-0.5 0.9l-1.1 0.2M619.4 207.2l-0.5 1.0l-0.7 0.8M619.1 211.2l-0.7 -0.2l-0.6 0.4M621.0 208.3l-1.0 -0.7l-0.2 -1.2M622.4 212.7l0.7 -0.4l0.6 0.5M624.6 215.6l1.1 0.3l0.6 0.9M617.6 207.5l1.2 -0.7l0.4 -1.3M621.5 208.9l-0.5 0.4l0.0 0.6M621.4 207.9l0.3 0.4l-0.1 0.5M622.6 210.4l-0.8 -0.8l-0.5 -1.0M618.2 207.7l-0.1 -0.8l0.5 -0.6M620.0 202.3l1.0 -0.8l1.0 -0.8M616.7 208.2l-0.5 -0.3l-0.0 -0.5M623.8 212.9l-0.6 0.2l-0.6 0.1M616.9 205.5l-0.6 -0.5l-0.5 -0.6M627.5 207.7l0.3 -0.4l0.4 -0.3M623.0 211.1l-0.3 0.6l0.3 0.6M623.1 211.5l0.0 1.2l1.0 0.7M622.9 210.1l-0.7 -0.0l-0.7 -0.1M622.7 211.4l-0.6 0.0l-0.4 -0.4M619.2 207.6l-1.3 -0.4l-1.3 -0.4M620.5 210.6l-0.9 0.8l-1.1 0.6M621.3 216.6l0.5 0.6l0.1 0.8M625.9 207.0l1.0 0.1l1.0 -0.1M625.8 209.6l0.4 -0.4l0.0 -0.5M625.7 214.6l-0.4 1.0l-0.8 0.8M626.4 209.3l0.9 0.8l0.9 0.8M618.0 213.8l0.2 -0.5l-0.3 -0.5M621.1 211.8l-0.8 0.3l-0.6 -0.6M618.1 200.9l-0.5 -0.5l-0.4 -0.6M625.1 213.0l0.8 1.0l1.2 0.6M624.5 207.4l0.2 0.7l-0.4 0.6M625.3 203.7l-0.6 -0.3l-0.6 0.1M630.6 210.7l0.8 0.8l1.1 -0.4M621.4 213.8l0.2 0.5l-0.3 0.5M622.4 209.4l-0.4 -1.3l-0.2 -1.4M626.2 209.8l-0.6 -0.5l-0.6 -0.3M622.2 203.7l0.7 -1.2l0.7 -1.2M624.3 208.8l-1.1 -0.1l-0.5 -1.0M618.7 209.7l0.7 -0.6l-0.2 -0.9M619.8 209.9l-0.7 -1.0l-1.2 0.1M619.4 216.1l0.4 -1.1l0.1 -1.2M629.2 207.0l0.4 -0.9l0.7 -0.7M623.2 209.7l0.5 0.1l0.5 0.1M626.9 207.4l0.3 -1.1l1.1 -0.3M621.8 213.2l0.7 -0.4l0.8 0.0M620.7 210.1l0.2 0.8l0.8 0.1M625.0 206.7l0.1 1.2l1.2 0.4M622.8 205.1l0.7 0.5l-0.1 0.8M625.4 209.7l0.5 0.9l1.0 0.4M624.5 206.2l0.6 -0.2l0.3 -0.5M623.6 209.2l0.4 0.9l0.3 1.0M622.1 206.4l-1.1 -0.8l-1.4 -0.3M622.7 211.3l1.0 -0.2l1.0 -0.2M621.0 209.0l0.2 1.1l0.8 0.8M614.7 208.3l0.4 0.8l-0.2 0.9M622.3 202.3l0.9 -0.5l0.4 -1.0M614.3 208.5l0.2 0.7l0.7 0.4M623.7 207.9l0.6 0.9l0.1 1.0M617.2 211.8l-0.2 -0.8l-0.8 -0.2M620.7 204.3l1.1 -0.3l0.3 -1.1M623.5 211.9l-0.1 -0.8l-0.6 -0.5M623.6 211.6l-1.1 0.0l-0.8 -0.8M626.2 211.7l0.8 -0.1l0.4 -0.8M618.7 203.5l0.6 0.1l0.6 -0.1M621.3 210.3l0.8 0.4l-0.0 0.9M619.8 207.8l0.7 -0.2l0.3 -0.7M623.1 209.6l0.8 -0.5l0.8 0.6M621.2 208.7l-0.6 0.6l0.1 0.8M627.3 211.7l0.9 -1.0l0.2 -1.3M620.4 207.2l0.7 -1.1l-0.7 -1.1M625.2 215.8l1.3 -0.1l0.5 -1.2M617.5 205.4l-0.9 -0.4l-0.4 -0.9M626.9 210.7l1.0 -0.2l0.9 -0.5M627.5 214.7l-0.7 -1.2l0.8 -1.1M620.0 202.4l0.5 -1.1l0.3 -1.1M619.7 203.4l-0.1 1.2l-0.4 1.1M619.7 211.6l0.5 -0.3l-0.0 -0.6M620.8 209.0l0.8 -1.0l0.4 -1.3M619.4 213.3l0.8 -0.7l1.0 0.2M620.3 212.4l-0.4 -1.1l-0.7 -0.9M618.3 214.5l-0.5 -0.8l-0.9 -0.4M621.5 210.1l0.0 0.6l0.4 0.4M619.2 205.8l0.6 -0.8l0.2 -1.0M618.6 214.5l0.6 0.1l0.6 -0.0M624.7 211.9l0.6 0.9l-0.3 1.0M617.7 212.9l0.6 0.0l0.4 -0.4M623.1 206.2l-1.2 -0.6l-1.1 -0.7" fill="none" stroke="#333" stroke-width="0.5" opacity="0.4" stroke-linecap="round"/></g>
<path d="M640 218.5 V226 H632.5 Z" fill="#f37878"/>
<path d="M634 222.6 H638.6 M636.3 220.3 V224.9" stroke="#000" stroke-width="1.3"/>
<clipPath id="c5"><rect x="642" y="194" width="32" height="32"/></clipPath>
<g clip-path="url(#c5)"><ellipse cx="657" cy="211" rx="5.3" ry="5.5" fill="#000" opacity="0.85" filter="url(#bl1)"/><path d="M659.9 208.0l0.5 -1.8l-0.4 -1.8M657.5 206.9l0.5 0.8l-0.1 1.0M660.9 216.4l-0.4 0.6l-0.3 0.7M653.3 214.3l1.3 -1.2l0.3 -1.8M663.0 210.5l1.6 -0.4l1.6 -0.3M656.9 221.6l1.4 -0.0l0.8 -1.1M660.3 204.0l1.4 -1.3l1.7 0.7M656.6 206.4l-1.2 -0.2l-0.8 -0.9M651.2 204.9l-1.3 -0.1l-0.5 -1.2M659.6 200.7l-0.2 -0.6l-0.3 -0.6M656.1 214.5l0.5 0.5l0.5 0.4M658.8 202.0l1.3 -0.3l0.3 -1.3M657.5 212.5l0.6 -0.7l0.9 -0.3M651.4 212.8l0.8 -1.1l-0.5 -1.3M654.3 207.8l0.9 -0.1l0.6 -0.6M661.0 208.8l1.4 0.8l0.1 1.6M654.3 211.1l0.7 -0.7l0.1 -1.0M665.7 213.6l0.1 0.7l0.3 0.6M652.4 196.1l0.3 1.3l1.0 1.0M660.3 206.9l-0.7 -1.5l-0.5 -1.6M656.4 211.1l0.7 1.3l-0.1 1.5M655.8 210.3l-0.0 -1.7l1.3 -1.1M657.0 204.2l-0.6 0.8l0.1 1.0M654.5 207.7l0.3 -0.8l-0.2 -0.8M660.1 212.9l0.3 -1.6l1.5 -0.6M663.5 212.5l-0.9 -0.4l-0.1 -1.0M655.4 207.4l0.5 -1.0l0.5 -1.0M652.1 211.8l1.6 0.3l1.6 -0.5M654.4 211.9l-0.5 -0.2l-0.5 0.4M659.2 220.2l-0.6 -1.4l-1.5 -0.3M650.2 213.3l-0.0 -1.1l-1.0 -0.6M649.2 218.7l1.0 -0.9l0.7 -1.2M652.4 207.4l-1.6 0.4l-1.7 0.1M662.9 215.3l-0.2 -0.6l-0.2 -0.6M663.3 210.1l-0.5 -1.0l-0.7 -0.9M660.6 210.7l-0.6 0.1l-0.6 0.1M653.5 205.0l0.9 -0.1l0.6 -0.6M654.5 214.2l0.7 -0.4l0.6 -0.5M661.5 211.0l-1.0 0.3l-0.8 0.7M653.4 218.9l0.6 0.1l0.4 0.4M656.2 206.2l-1.2 0.1l-0.9 0.8M653.2 212.7l-0.8 -0.5l-0.7 -0.7M669.8 214.5l1.2 0.1l1.1 -0.2M665.1 220.0l-0.7 0.2l-0.6 0.5M659.1 216.4l1.8 -0.0l1.5 -1.1M655.6 205.3l0.1 -0.7l-0.6 -0.4M663.9 217.9l0.5 0.2l0.5 0.1M659.5 212.1l0.7 -0.2l0.7 0.2M659.7 206.8l-0.7 0.3l-0.6 0.6M651.4 209.7l-1.0 -0.2l-0.4 -0.9M652.8 212.2l-1.7 0.3l-1.7 -0.2M656.6 202.4l-0.9 1.2l0.5 1.4M652.1 211.5l-0.6 0.5l-0.7 -0.0M654.6 214.8l1.3 1.2l-0.1 1.7M658.8 215.2l-0.2 0.7l-0.6 0.4M649.8 204.3l-0.4 -0.9l0.3 -0.9M661.6 214.8l-0.6 -0.1l-0.6 0.2M654.8 210.7l1.2 0.7l-0.1 1.4M644.1 202.8l-0.6 0.1l-0.4 0.5M648.4 213.6l0.7 -1.7l1.1 -1.5M657.2 205.2l0.6 1.1l1.1 0.6M660.1 203.1l0.1 0.7l0.4 0.5M659.9 211.4l1.7 -0.5l1.6 -0.7M659.1 209.0l1.3 -0.0l1.3 0.3M656.9 211.5l-1.3 -0.4l-1.0 -0.9M658.6 200.7l1.4 0.2l1.0 -1.1M660.1 206.4l1.1 0.1l0.7 0.8M664.4 204.1l-1.5 -0.1l-1.3 -0.7M649.5 211.3l0.4 0.7l0.2 0.8M656.6 198.3l1.7 0.8l1.9 -0.1M652.4 216.3l0.8 -0.0l0.7 -0.2M663.9 205.8l-0.8 0.4l-0.9 -0.2M658.3 215.2l0.8 0.1l0.8 -0.0M649.5 210.8l-0.6 -0.6l-0.7 -0.4M657.1 213.5l1.0 1.6l-0.3 1.8M661.1 205.0l-0.1 1.5l-0.3 1.5M658.4 205.1l-0.4 -0.5l0.1 -0.7M655.4 205.3l-0.1 1.4l0.2 1.4M658.3 218.7l-0.5 -1.5l1.2 -1.1M652.2 214.7l1.3 0.7l0.4 1.4M656.2 211.5l-0.2 -1.0l-0.9 -0.6M657.0 206.3l-1.3 -0.1l-1.3 0.1M655.4 207.6l0.2 1.1l-0.7 0.9M655.7 213.6l-0.1 1.0l0.7 0.7M651.3 212.2l0.6 -0.0l0.5 -0.4M659.3 214.7l0.5 -0.6l0.5 -0.6M649.4 215.0l-1.8 -0.7l-0.7 -1.8M663.7 207.0l0.5 0.4l-0.2 0.6M657.6 212.6l-1.0 -0.9l-1.3 0.1M652.9 213.0l-1.0 0.3l-0.4 0.9M654.7 207.6l1.2 -1.4l-0.8 -1.7M657.9 203.5l-0.4 1.3l0.3 1.3M659.6 207.8l-0.5 -0.7l0.2 -0.8M658.9 222.0l0.5 0.9l0.1 1.1M650.8 215.8l0.9 1.7l0.8 1.7M659.1 209.2l-1.0 0.6l-1.1 -0.6M661.4 210.8l-0.8 0.6l0.1 1.0M661.8 217.0l1.3 1.0l1.5 0.8M658.4 214.7l1.0 1.0l1.4 0.3M653.3 207.8l-0.4 -0.4l-0.1 -0.6M658.6 215.5l1.8 -0.6l1.8 -0.4M651.8 212.3l-1.1 -1.5l-1.7 -0.8M662.6 211.2l-0.7 1.0l-0.6 1.0M659.9 214.0l1.0 -0.8l1.3 -0.3M654.1 208.8l0.9 0.9l1.3 -0.1M648.5 206.3l1.6 0.4l1.5 0.8M661.2 210.4l-0.5 0.6l-0.8 0.1M659.4 212.2l-0.3 1.8l-1.7 0.7M652.7 206.3l-0.5 1.4l-1.4 0.2M655.5 213.0l0.2 1.1l0.6 0.9M654.7 216.2l1.3 -0.6l0.9 -1.1M654.4 211.3l0.4 -0.3l0.5 -0.3M657.9 204.2l1.6 0.2l1.6 -0.0M657.5 209.1l-1.8 0.1l-1.1 1.5M660.9 207.3l-0.7 0.3l-0.7 0.3M658.7 212.4l0.7 0.2l0.6 0.4M651.0 217.6l0.2 0.8l-0.2 0.8M655.2 210.4l-0.8 -0.2l-0.3 -0.8M653.9 205.1l-0.3 1.6l-1.3 1.1M654.1 207.3l0.2 -1.0l-0.7 -0.7M654.3 214.0l-0.5 -0.5l-0.1 -0.7M660.4 215.4l-1.1 1.5l-1.3 1.4M657.0 214.5l-0.5 1.3l0.1 1.4M664.5 209.8l0.2 0.5l0.5 0.1M653.9 212.3l-0.8 0.6l-1.0 -0.4M661.3 223.5l0.9 -1.6l0.7 -1.6M652.0 212.3l0.6 -1.0l-0.5 -1.0M658.2 223.3l1.4 0.0l0.9 1.0M653.3 214.4l-0.6 -0.0l-0.6 0.1M660.6 208.1l0.4 1.7l-0.8 1.5M651.9 206.9l-0.1 1.3l-0.8 1.0M660.6 213.4l-0.2 0.8l-0.4 0.7M659.1 212.0l-1.0 0.1l-1.0 -0.1M658.1 215.0l0.7 -0.8l-0.3 -1.1M663.8 209.6l-0.7 -1.4l0.1 -1.5M656.0 209.4l0.5 0.1l0.3 0.5M659.9 212.5l0.6 -0.6l0.8 -0.3M658.0 211.8l-1.5 0.1l-0.7 1.3M660.0 205.7l-0.8 -0.4l-0.8 0.5M649.5 211.5l-0.7 0.7l-0.9 0.4M658.4 211.7l-1.3 0.4l-1.3 0.3M661.3 213.7l0.5 -0.4l0.6 0.3M646.9 206.2l0.5 0.9l1.0 0.4M649.0 210.3l-0.4 1.2l-1.3 0.3M653.9 207.1l0.6 1.7l-1.2 1.3M657.2 214.8l0.8 -0.5l0.5 -0.8M650.0 206.1l1.1 0.8l1.2 -0.4M657.1 208.3l-0.9 -0.6l-0.8 -0.7M657.1 210.9l0.4 -0.8l0.6 -0.7M656.6 214.7l0.2 1.2l1.1 0.5M654.7 204.0l-0.1 -0.7l0.2 -0.7M655.2 203.4l0.7 1.0l1.1 0.7M665.5 207.0l0.1 0.8l0.5 0.7M659.1 204.5l0.7 -0.1l0.4 -0.6M658.6 216.3l-1.2 0.0l-0.8 -0.9M653.2 210.5l-0.1 0.8l0.3 0.7M659.5 213.1l-0.6 0.2l-0.6 0.3M659.4 205.1l0.7 0.1l0.2 0.6M663.4 218.4l-0.9 0.6l0.2 1.0M653.9 209.0l0.6 0.2l0.6 -0.2M654.8 219.8l0.5 -0.3l0.4 -0.3M657.0 210.7l0.7 -1.6l-0.3 -1.8M655.2 212.4l-0.3 0.6l-0.3 0.6M652.4 211.5l1.3 -0.1l0.7 1.1M660.7 207.8l-0.4 1.0l0.5 1.0M665.8 204.8l0.2 -1.3l-0.1 -1.3M652.7 216.2l-0.9 0.7l-0.1 1.2M656.2 209.9l0.5 0.6l0.4 0.7M651.0 208.7l-0.1 1.8l0.2 1.8M661.8 215.7l1.0 -0.1l0.9 0.4M650.5 211.9l0.3 -1.1l-0.1 -1.2M658.9 211.5l0.4 -1.6l0.4 -1.6M650.8 211.6l0.2 1.0l0.7 0.7M655.7 220.7l-1.3 1.1l-1.3 1.1M653.9 211.1l0.5 -0.5l0.7 0.1M656.7 220.2l0.8 -0.3l0.4 -0.7M657.3 211.8l0.5 -0.5l-0.3 -0.7M648.8 210.4l-0.2 0.6l-0.4 0.5M656.6 208.9l-0.9 -0.8l-0.6 -1.0M655.7 207.4l0.7 -1.3l1.4 -0.4M655.4 207.4l0.7 -0.2l0.8 0.2M658.4 205.0l-0.1 -0.8l-0.7 -0.2M652.9 211.1l-0.3 1.2l-0.9 0.9M653.1 205.0l1.1 -1.1l1.5 0.5M659.4 215.0l1.7 0.5l0.9 1.6M657.3 215.8l1.2 -1.1l1.6 -0.1M650.5 213.5l0.6 1.4l1.5 0.5M655.2 217.3l-0.4 1.7l0.1 1.8M659.6 215.0l-0.4 -1.3l-0.1 -1.3M644.2 210.2l0.7 -0.4l0.7 0.4M659.1 211.4l0.9 0.4l1.0 0.1M663.4 213.8l-0.2 1.2l-0.1 1.2M661.7 206.6l0.9 -0.1l0.5 -0.7M659.7 204.2l0.7 -0.1l0.5 0.5M656.0 212.4l-0.5 -0.2l-0.4 -0.4M654.0 214.0l1.3 -0.6l0.8 -1.2M653.4 209.2l-0.5 0.1l-0.5 0.3M652.7 210.4l0.6 -0.2l0.6 0.1M654.3 209.2l-0.0 1.7l-1.2 1.2M658.1 216.3l0.8 0.7l0.5 0.9M649.5 208.2l-1.3 1.1l-0.8 1.5M660.2 219.0l0.5 0.5l0.1 0.7M660.8 209.5l0.6 0.4l0.6 -0.4M657.7 203.1l0.3 -0.9l0.5 -0.8M656.3 212.8l1.7 0.1l0.7 1.5M662.0 213.4l-0.8 -0.3l-0.7 0.5M661.1 210.5l1.0 -1.2l1.5 -0.2M657.9 211.5l1.0 1.2l0.8 1.3M652.0 213.3l-0.3 -0.6l-0.6 -0.3M649.4 208.5l1.3 0.2l1.3 -0.1M651.8 213.7l-0.7 0.2l-0.8 -0.1M659.4 212.0l-0.6 0.0l-0.3 -0.5M654.3 213.3l1.1 -1.0l0.0 -1.5M662.9 209.4l-0.5 -0.6l0.0 -0.7M648.9 212.9l-0.7 0.2l-0.7 0.1M653.7 214.4l0.3 -1.6l1.2 -1.0M654.5 210.0l-1.7 0.0l-1.7 0.3M656.0 210.0l0.1 -0.5l-0.4 -0.3M648.9 217.3l0.1 1.4l1.0 0.9M656.0 213.1l0.7 0.9l0.7 0.8M659.1 208.3l1.4 0.3l0.4 1.3M657.3 214.1l-0.7 -0.5l-0.7 -0.5M655.5 222.2l-0.2 -1.2l-0.8 -0.9M655.9 214.5l-0.8 1.0l-0.9 0.8M655.8 212.1l-0.4 -0.6l0.1 -0.7M651.5 214.3l-0.6 0.1l-0.4 0.4M662.0 210.0l1.8 0.1l1.2 1.3M657.1 208.3l-1.0 -1.0l-1.4 0.4M653.2 216.6l-1.2 0.1l-0.4 1.1M652.5 207.5l0.0 0.7l-0.4 0.5M648.5 216.4l0.8 0.5l0.2 0.9M659.0 207.8l-0.3 -0.6l-0.3 -0.6M659.3 205.6l0.5 -1.4l-0.3 -1.5M658.7 210.7l0.6 -0.1l0.5 -0.2M650.9 211.4l-0.2 0.5l0.1 0.6M659.3 213.9l0.3 -1.3l0.3 -1.3M653.6 215.5l-0.3 0.6l-0.1 0.6M657.2 210.5l-1.0 -0.4l-1.1 -0.1M654.8 207.8l0.9 0.4l0.4 0.9M657.0 215.3l0.4 -1.8l0.9 -1.6M655.7 211.4l0.3 1.7l1.5 0.8M661.7 207.6l0.4 0.9l0.3 0.9M656.1 216.4l-0.3 -0.4l0.2 -0.5M656.3 208.8l1.4 -1.0l1.7 -0.6M654.5 210.2l0.3 1.4l0.9 1.1M657.3 204.2l0.7 0.2l0.7 -0.3M655.2 213.2l0.7 -1.7l0.8 -1.6M657.6 212.4l-0.2 1.2l-0.8 0.9M654.1 210.2l0.6 -1.4l-0.4 -1.4M651.4 205.4l-0.2 1.1l-0.2 1.1M652.8 210.0l0.8 0.9l-0.2 1.2M659.9 209.0l1.1 1.4l1.7 -0.4M659.2 213.9l-0.7 -0.4l-0.8 0.1M657.2 203.7l0.8 1.1l1.3 0.3M660.4 210.9l1.4 -0.3l1.1 1.0M658.6 208.4l-0.7 0.5l-0.4 0.8M651.1 212.4l-1.0 1.0l-0.9 1.0M652.2 212.2l-0.9 1.4l-1.3 1.0M660.2 214.3l0.4 1.5l1.4 0.7M648.9 213.1l0.9 -0.6l0.9 -0.6M656.6 216.8l-0.7 0.8l-1.0 -0.0M652.8 213.0l0.8 0.6l0.0 1.0M650.6 217.1l-1.2 -0.8l-1.3 0.7M657.3 213.8l-1.2 -0.4l-1.2 -0.2M652.6 209.6l-1.3 0.2l-1.1 -0.8M648.5 214.9l1.5 0.2l1.3 0.7M658.4 212.0l0.2 -0.7l-0.1 -0.7M657.8 209.6l0.3 0.5l0.1 0.6M658.5 208.3l-1.7 -0.3l-1.1 1.3M660.9 206.7l-0.7 -0.0l-0.7 0.2M655.2 205.1l0.6 0.0l0.4 0.4M654.9 218.0l0.8 0.2l0.6 0.6M655.9 212.7l0.9 0.2l0.3 0.9M656.4 213.0l0.3 -0.5l0.6 -0.1M656.5 208.4l-1.5 -0.4l-1.2 -0.9M659.8 205.1l0.7 -1.1l0.3 -1.3M660.8 214.6l1.4 0.6l0.9 1.3M659.2 214.9l0.3 -0.8l0.7 -0.5M658.8 208.0l1.7 -0.2l0.7 -1.5M660.5 204.8l0.7 1.3l1.4 -0.0M652.2 210.5l0.6 1.3l0.0 1.4M658.0 206.9l-0.8 -0.6l-1.0 -0.2M652.2 208.7l1.2 1.0l0.4 1.5M654.1 222.1l-1.3 0.6l-1.3 0.7M661.0 206.4l0.7 1.8l1.8 0.5M652.1 209.2l1.4 -1.0l0.1 -1.7M660.8 218.2l0.6 0.1l0.5 0.4M658.5 208.1l0.3 -1.2l-0.7 -1.1M650.6 210.3l1.6 1.0l1.9 0.3M658.1 212.0l1.1 -0.5l1.2 0.0M658.3 202.9l-0.0 -0.6l0.4 -0.4M657.0 207.5l-0.2 -0.9l-0.5 -0.7M650.0 212.0l0.3 0.6l0.3 0.6M652.6 214.7l-1.0 -0.7l-0.9 -0.8M659.2 207.4l-0.5 -1.8l-0.4 -1.8M655.8 216.8l-0.6 -1.3l-1.4 -0.4M662.0 214.0l-0.7 0.1l-0.6 0.4M658.1 210.4l1.2 -0.4l0.9 0.9M658.2 211.9l-0.5 0.6l-0.8 -0.2M651.0 209.3l-0.5 0.2l-0.3 0.5" fill="none" stroke="#000" stroke-width="0.6" opacity="0.85" stroke-linecap="round"/></g>
<path d="M674 218.5 V226 H666.5 Z" fill="#f37878"/>
<path d="M668 222.6 H672.6 M670.3 220.3 V224.9" stroke="#000" stroke-width="1.3"/>
<path d="M682 198 L685 205" stroke="#999" stroke-width="1.6" stroke-linecap="round"/>
<path d="M708 218.5 V226 H700.5 Z" fill="#f37878"/>
<g filter="url(#bl2)"><circle cx="715.3" cy="199.8" r="0.9" fill="#000"/><circle cx="718.2" cy="199.8" r="0.7" fill="#333"/><circle cx="718.4" cy="215.5" r="1.2" fill="#333"/><circle cx="720.3" cy="215.3" r="1.0" fill="#333"/><circle cx="737.9" cy="199.3" r="0.4" fill="#999"/><circle cx="722.9" cy="202.1" r="0.9" fill="#333"/><circle cx="719.8" cy="202.4" r="1.1" fill="#000"/><circle cx="736.9" cy="218.0" r="0.8" fill="#333"/><circle cx="718.4" cy="216.9" r="0.9" fill="#000"/><circle cx="731.9" cy="218.7" r="1.2" fill="#333"/><circle cx="719.8" cy="207.8" r="0.8" fill="#666"/><circle cx="729.7" cy="202.5" r="0.4" fill="#666"/><circle cx="721.7" cy="211.3" r="1.0" fill="#666"/><circle cx="737.1" cy="221.4" r="1.6" fill="#666"/></g>
<path d="M736 222.6 H740.6 M738.3 220.3 V224.9" stroke="#000" stroke-width="1.3"/>
<g><circle cx="749.0" cy="202.6" r="1.0" fill="#333"/><circle cx="759.9" cy="215.7" r="0.7" fill="#666"/><circle cx="768.9" cy="210.6" r="1.8" fill="#999"/><circle cx="756.6" cy="197.0" r="1.6" fill="#333"/><circle cx="760.6" cy="209.6" r="1.6" fill="#333"/><circle cx="768.8" cy="221.8" r="0.9" fill="#000"/><circle cx="755.7" cy="197.9" r="1.3" fill="#333"/><circle cx="758.4" cy="208.2" r="1.8" fill="#666"/><circle cx="752.9" cy="209.2" r="1.5" fill="#999"/><circle cx="751.4" cy="218.2" r="1.6" fill="#000"/><circle cx="767.0" cy="212.3" r="0.9" fill="#666"/><circle cx="749.0" cy="214.2" r="1.7" fill="#666"/><circle cx="758.1" cy="198.8" r="1.2" fill="#333"/><circle cx="758.6" cy="215.3" r="0.7" fill="#000"/><circle cx="750.4" cy="203.8" r="1.3" fill="#333"/><circle cx="757.0" cy="202.0" r="0.6" fill="#000"/><circle cx="760.1" cy="210.6" r="1.0" fill="#666"/><circle cx="759.8" cy="221.8" r="1.7" fill="#666"/><circle cx="760.7" cy="210.2" r="0.9" fill="#999"/><circle cx="762.1" cy="206.6" r="1.7" fill="#333"/><circle cx="762.7" cy="218.4" r="1.4" fill="#333"/><circle cx="763.2" cy="222.2" r="1.2" fill="#000"/></g>
<path d="M770 222.6 H774.6 M772.3 220.3 V224.9" stroke="#000" stroke-width="1.3"/>
<g><circle cx="795.8" cy="213.4" r="0.6" fill="#000"/><circle cx="788.2" cy="213.9" r="0.6" fill="#000"/><circle cx="804.6" cy="201.8" r="0.6" fill="#000"/><circle cx="797.0" cy="210.1" r="0.6" fill="#000"/><circle cx="794.7" cy="208.6" r="0.6" fill="#000"/><circle cx="797.5" cy="204.8" r="0.5" fill="#000"/><circle cx="793.9" cy="198.4" r="0.6" fill="#000"/><circle cx="800.1" cy="208.1" r="0.6" fill="#000"/><circle cx="805.1" cy="211.4" r="0.6" fill="#000"/><circle cx="784.0" cy="198.5" r="0.6" fill="#000"/><circle cx="788.4" cy="202.5" r="0.6" fill="#000"/><circle cx="800.5" cy="200.2" r="0.5" fill="#000"/><circle cx="787.3" cy="204.1" r="0.5" fill="#000"/><circle cx="794.6" cy="204.9" r="0.5" fill="#000"/><circle cx="785.8" cy="199.9" r="0.5" fill="#000"/><circle cx="803.7" cy="216.4" r="0.6" fill="#000"/><circle cx="784.2" cy="200.9" r="0.5" fill="#000"/><circle cx="789.2" cy="198.5" r="0.5" fill="#000"/><circle cx="786.3" cy="202.0" r="0.6" fill="#000"/><circle cx="792.9" cy="209.3" r="0.5" fill="#000"/><circle cx="795.0" cy="217.4" r="0.5" fill="#000"/><circle cx="782.8" cy="209.5" r="0.5" fill="#000"/><circle cx="801.3" cy="199.9" r="0.6" fill="#000"/><circle cx="781.4" cy="211.1" r="0.5" fill="#000"/></g>
<path d="M804 222.6 H808.6 M806.3 220.3 V224.9" stroke="#000" stroke-width="1.3"/>
<g fill="none" stroke="#222" stroke-width="0.7"><circle cx="823.1" cy="213.6" r="2.1"/><circle cx="837.1" cy="203.5" r="3.0"/><circle cx="819.8" cy="206.2" r="3.1"/><circle cx="832.9" cy="201.1" r="2.1"/><circle cx="821.8" cy="199.9" r="1.9"/><circle cx="828.5" cy="206.5" r="3.4"/><circle cx="835.0" cy="218.1" r="2.5"/><circle cx="826.8" cy="200.0" r="3.1"/><circle cx="829.6" cy="220.4" r="2.0"/><circle cx="839.2" cy="209.9" r="2.2"/><circle cx="817.2" cy="212.5" r="1.9"/><circle cx="830.2" cy="216.3" r="2.5"/><circle cx="835.2" cy="208.3" r="2.3"/><circle cx="836.2" cy="213.3" r="2.2"/><circle cx="826.4" cy="211.5" r="2.0"/><circle cx="825.3" cy="217.5" r="2.6"/><circle cx="819.2" cy="217.1" r="2.0"/><circle cx="831.4" cy="212.0" r="2.0"/><circle cx="823.4" cy="209.4" r="1.9"/><circle cx="831.5" cy="197.8" r="1.8"/></g>
<clipPath id="c6"><rect x="812" y="194" width="32" height="32"/></clipPath>
<g clip-path="url(#c6)"><path d="M826.6 208.9l0.1 -0.7l0.4 -0.5M832.4 209.0l-1.2 -0.5l-0.3 -1.2M824.3 211.3l-0.8 1.1l-1.3 0.3M831.6 217.2l-0.5 0.6l-0.7 0.2M827.8 215.9l-0.1 0.8l0.5 0.6M833.5 200.8l0.0 -1.2l0.2 -1.2M820.4 207.3l-0.6 0.2l-0.4 0.5M824.5 215.9l0.6 -0.8l0.3 -1.0M823.4 214.6l-0.4 -1.0l-0.9 -0.6M828.8 207.6l-0.2 0.5l0.1 0.5M822.0 203.7l-0.4 0.8l-0.5 0.7M827.4 207.5l-0.3 -1.0l-0.4 -0.9M824.6 208.4l-0.6 -0.2l-0.4 -0.5M835.5 207.3l-1.0 0.9l-1.4 -0.3M831.2 201.9l-0.5 0.7l-0.8 -0.1M824.9 212.1l-0.3 -0.8l0.5 -0.7M825.4 207.1l-0.5 -1.1l-1.2 -0.2M819.1 205.9l1.5 0.5l0.5 1.5M813.4 219.0l0.5 -0.2l0.0 -0.5M824.8 206.2l-0.8 -0.2l-0.8 0.2M831.0 212.1l-0.7 0.2l-0.1 0.7M831.8 203.7l1.1 -0.2l1.1 0.2M825.3 211.0l0.8 -0.1l0.4 -0.6M817.9 210.6l-0.3 0.8l0.5 0.6M843.5 208.5l-0.3 -1.1l-1.0 -0.5M832.8 204.1l-0.5 -0.6l-0.8 -0.1M826.2 211.7l-0.7 -0.7l-1.0 0.1M828.1 198.4l-0.4 -0.8l0.3 -0.8M830.0 205.8l-0.1 -0.7l-0.2 -0.7M834.3 199.0l-0.7 -0.1l-0.7 -0.1M836.5 217.7l0.5 -1.5l0.1 -1.6M826.3 208.2l0.6 0.0l0.3 -0.5M825.2 203.4l-0.8 -0.2l-0.5 0.7M825.4 211.5l0.9 1.0l1.2 0.6M828.0 207.0l-0.9 -0.5l-0.9 -0.4M829.5 216.1l1.2 -0.7l1.2 -0.7M816.8 208.3l0.4 -0.5l-0.1 -0.6M825.0 197.1l-0.6 -0.5l-0.7 -0.4M833.7 204.8l-0.6 0.4l-0.3 0.7M835.4 201.4l-0.9 -0.2l-0.9 0.1M828.2 207.8l-0.4 0.5l-0.1 0.6M827.9 214.5l-0.6 -0.1l-0.3 -0.5M833.8 205.7l0.5 0.6l0.7 0.2M829.6 221.3l1.4 -0.7l1.0 -1.1M829.0 206.0l-0.6 -0.1l-0.6 -0.1M830.2 206.7l-0.8 -1.0l-1.1 -0.6M824.8 205.5l1.2 -1.1l1.1 -1.1M823.0 205.7l-0.8 0.7l0.3 1.1M822.9 214.8l-0.0 0.9l-0.3 0.9M831.9 221.6l1.0 0.1l1.0 0.2M832.2 209.0l-0.6 -0.7l-0.9 -0.3M815.1 201.3l-0.3 -1.3l-1.1 -0.7M838.3 203.7l0.9 -0.5l1.0 0.2M836.6 199.2l1.2 0.8l0.3 1.4M826.9 204.3l-0.0 0.6l-0.4 0.4M825.1 213.1l0.1 0.5l0.3 0.4M821.0 202.4l1.4 -0.2l1.5 0.1M828.2 214.3l0.7 0.2l0.2 0.6M825.3 211.4l1.4 -0.6l1.2 -1.0M820.5 205.9l0.4 -1.1l-0.6 -1.0M838.8 213.0l0.5 0.1l0.5 -0.3M830.6 216.4l-0.3 0.8l-0.8 0.3M827.5 206.4l1.3 0.2l1.1 0.6M828.7 211.9l0.7 0.7l0.9 -0.1M826.9 214.7l-0.9 -0.3l-0.3 -0.9M826.2 206.6l0.0 -0.7l-0.5 -0.4M836.8 204.1l0.4 1.3l-0.7 1.1M829.4 201.3l0.3 -0.6l0.5 -0.5M828.1 206.2l0.3 1.5l-0.7 1.3M835.6 210.8l1.3 -0.3l1.2 -0.7M823.5 209.1l-0.2 -0.9l0.1 -0.9M827.8 209.0l1.2 -0.2l0.6 -1.1M824.9 198.9l-0.9 -0.1l-0.5 -0.7M821.0 210.8l0.7 1.4l0.7 1.4M826.7 211.4l1.3 0.8l1.3 0.8M817.5 211.7l-0.5 -1.0l-1.1 -0.2M824.6 200.0l0.7 -1.0l0.1 -1.2M830.2 204.7l1.1 0.7l1.3 0.1M826.4 215.6l0.1 -0.8l0.2 -0.7M830.8 206.4l-1.1 0.4l-0.9 0.8M832.1 201.5l0.6 -0.5l0.5 -0.7M821.8 213.6l0.7 -1.0l-0.5 -1.1M823.6 210.8l-1.0 0.1l-0.5 0.8M821.8 211.0l-0.5 0.1l-0.4 -0.3M821.3 209.3l-0.7 -1.0l0.1 -1.2M831.1 199.8l0.7 0.5l0.2 0.8M830.0 212.0l-0.5 1.5l0.8 1.4M827.0 207.8l0.5 -0.4l0.6 -0.2M842.3 214.9l0.7 -1.1l1.1 -0.7M831.2 204.6l-0.8 1.3l-0.1 1.5" fill="none" stroke="#000" stroke-width="0.45" opacity="0.5" stroke-linecap="round"/></g>
<path d="M838 222.6 H842.6 M840.3 220.3 V224.9" stroke="#000" stroke-width="1.3"/>
<g fill="none" stroke="#000" stroke-width="0.9"><circle cx="622.5" cy="242.2" r="1.9"/><circle cx="627.5" cy="241.2" r="2.1"/><circle cx="631.0" cy="245.3" r="2.3"/><circle cx="617.1" cy="242.0" r="2.5"/><circle cx="621.2" cy="235.6" r="1.6"/><circle cx="632.5" cy="241.7" r="1.5"/><circle cx="629.7" cy="233.5" r="3.0"/><circle cx="612.7" cy="238.0" r="1.4"/><circle cx="625.1" cy="252.1" r="1.5"/><circle cx="624.5" cy="248.8" r="1.9"/><circle cx="618.0" cy="237.1" r="2.0"/><circle cx="636.1" cy="243.2" r="2.4"/><circle cx="618.3" cy="248.2" r="3.3"/><circle cx="633.3" cy="251.7" r="2.9"/><circle cx="623.1" cy="254.7" r="1.7"/><circle cx="617.9" cy="253.9" r="1.8"/><circle cx="626.3" cy="237.8" r="1.5"/><circle cx="611.3" cy="240.6" r="1.4"/><circle cx="628.6" cy="254.8" r="2.7"/><circle cx="623.4" cy="232.7" r="2.2"/><circle cx="633.8" cy="237.2" r="1.9"/><circle cx="613.6" cy="250.2" r="1.7"/><circle cx="619.8" cy="231.4" r="1.6"/><circle cx="610.5" cy="244.8" r="1.5"/><circle cx="628.8" cy="248.6" r="1.5"/><circle cx="614.1" cy="245.9" r="1.7"/><circle cx="620.3" cy="256.6" r="1.7"/><circle cx="615.0" cy="254.1" r="1.3"/><circle cx="620.8" cy="252.3" r="1.3"/><circle cx="613.5" cy="235.6" r="1.4"/><circle cx="625.6" cy="245.3" r="1.9"/><circle cx="616.8" cy="233.6" r="1.4"/><circle cx="630.5" cy="238.8" r="1.6"/><circle cx="623.0" cy="238.9" r="1.5"/><circle cx="635.1" cy="247.1" r="1.6"/><circle cx="635.8" cy="239.3" r="1.5"/><circle cx="625.5" cy="257.6" r="1.5"/><circle cx="625.8" cy="235.2" r="1.3"/><circle cx="622.4" cy="246.1" r="1.7"/><circle cx="620.3" cy="239.4" r="1.3"/><circle cx="626.7" cy="230.6" r="1.4"/><circle cx="611.4" cy="248.6" r="1.3"/></g>
<path d="M634 256.6 H638.6 M636.3 254.3 V258.9" stroke="#000" stroke-width="1.3"/>
<clipPath id="c7"><rect x="642" y="228" width="32" height="32"/></clipPath>
<g clip-path="url(#c7)"><ellipse cx="658" cy="244" rx="7.0" ry="6.7" fill="#000" opacity="0.2" filter="url(#bl1)"/><path d="M654.9 232.3l1.5 0.2l1.0 1.2M667.8 247.5l0.2 -0.7l0.7 -0.1M653.8 248.6l-0.7 -1.0l-0.0 -1.3M656.8 250.3l0.5 0.6l0.5 0.6M662.8 246.3l0.3 -0.6l0.2 -0.7M667.2 246.1l0.6 0.4l0.2 0.7M651.1 246.5l-0.8 -0.7l-0.9 -0.5M659.8 246.5l0.2 0.7l0.5 0.6M661.1 241.6l0.5 0.6l0.8 -0.0M664.8 231.8l0.2 -1.5l0.3 -1.5M652.5 245.6l-0.4 -0.6l-0.4 -0.6M651.4 249.3l0.8 -0.9l-0.1 -1.2M650.2 239.0l-0.6 -0.1l-0.4 0.4M649.1 241.8l-1.3 0.0l-1.3 -0.1M659.8 240.5l0.6 -1.2l-0.5 -1.2M658.7 248.6l0.3 -1.2l-0.9 -0.8M657.5 239.2l0.5 -0.6l-0.2 -0.8M654.8 249.4l-1.0 0.5l-0.2 1.1M657.8 245.6l1.0 -0.1l0.9 -0.6M661.9 250.6l0.7 0.0l0.6 0.3M649.0 242.5l0.5 -0.7l0.8 -0.3M661.7 234.1l-1.3 -0.3l-0.8 1.0M660.7 250.8l-1.1 -0.4l-1.2 -0.2M662.8 245.5l0.4 1.2l1.0 0.7M658.4 237.1l-0.9 0.8l-1.1 -0.3M657.0 245.7l0.5 -0.6l0.8 0.1M652.1 244.8l0.3 -0.5l0.6 -0.1M656.3 253.5l1.4 -0.4l1.1 -0.9M665.0 242.6l-0.3 0.9l0.6 0.7M653.7 239.6l-1.4 -0.6l-1.4 -0.4M665.7 245.3l1.0 0.6l0.9 0.7M649.9 246.6l0.8 0.5l0.9 -0.1M658.6 246.8l0.3 1.4l-1.2 0.8M650.5 237.5l0.9 0.1l0.7 0.5M659.6 243.0l1.6 -0.1l0.8 -1.4M647.5 251.1l-0.4 0.6l-0.5 0.5M650.9 237.2l0.2 1.0l0.8 0.6M669.7 239.3l0.6 -0.2l0.3 -0.6M660.6 238.2l0.7 -1.0l-0.6 -1.1M665.0 250.0l-0.1 0.9l-0.4 0.9M660.5 244.8l-0.5 0.0l-0.5 0.2M656.0 245.6l1.2 0.7l0.8 1.1M651.6 244.4l0.9 -0.5l0.3 -1.0M651.3 243.7l-0.8 -0.3l-0.8 -0.3M666.4 246.1l1.0 -0.8l1.3 0.1M664.7 243.1l-1.2 0.6l-0.5 1.2M655.3 251.1l1.5 0.3l0.5 1.5M649.9 243.4l-0.6 0.8l0.4 0.9M655.8 246.9l-1.0 0.7l-1.2 -0.3M660.7 245.5l-1.1 -1.1l-0.9 -1.2M646.5 242.7l0.1 0.5l0.1 0.5M655.5 242.5l-0.5 -1.1l0.5 -1.1M656.9 245.8l0.1 0.7l0.4 0.6M655.3 240.4l0.7 -0.1l0.5 0.5M658.6 256.7l0.2 1.1l0.8 0.8M656.4 236.4l-0.1 -0.9l-0.8 -0.6M653.1 253.9l-0.7 -0.0l-0.4 0.6M647.1 242.6l-0.6 -1.2l-1.4 -0.1M653.4 245.7l0.2 1.5l-1.0 1.1M647.7 257.6l0.4 1.4l0.5 1.3M642.5 250.9l0.3 -1.2l0.8 -1.0M651.4 235.8l-0.3 -0.8l-0.1 -0.9M654.6 245.8l1.3 0.8l1.4 0.5M654.6 243.7l-1.4 -0.4l-1.1 -1.0M653.9 237.9l0.5 0.0l0.3 -0.4M649.3 237.4l1.2 -0.4l1.3 0.3M658.8 245.9l0.1 -0.8l0.4 -0.7M659.7 242.8l0.2 -0.8l0.3 -0.8M648.7 249.1l-0.6 -1.4l0.2 -1.5M661.6 234.7l-1.1 0.0l-1.1 -0.1M659.2 244.9l-0.3 0.9l0.6 0.7M656.5 239.5l-1.5 0.1l-1.1 -1.0M651.8 246.2l0.5 0.1l0.5 0.2M666.5 246.5l0.5 0.5l0.1 0.7M663.8 251.4l1.0 0.1l1.0 -0.1M658.0 249.0l0.4 -0.6l-0.1 -0.7M652.6 246.2l-1.0 0.5l-1.0 0.3M658.2 250.7l-1.3 -0.5l-1.4 0.3M661.5 247.8l0.3 -0.9l-0.0 -1.0M655.8 243.3l-0.2 1.5l-0.2 1.5M656.5 241.7l1.3 0.8l1.4 -0.7M658.0 241.2l-0.8 -0.6l-1.0 0.1M642.5 253.5l-1.1 -0.7l-1.1 0.7M663.9 241.2l-0.8 -0.5l-0.9 0.2M658.1 253.5l1.3 -0.0l0.5 1.2M653.6 242.2l-0.6 -0.2l-0.4 0.4M664.6 246.9l0.9 -0.6l0.9 -0.6M656.2 243.0l-0.6 -1.3l-1.4 0.0M664.6 240.2l-0.6 -0.0l-0.5 -0.2M653.4 233.3l0.2 0.8l-0.6 0.5M664.3 243.9l-0.3 -0.6l0.1 -0.7M661.7 243.4l-0.9 1.3l0.2 1.5M660.0 236.8l0.2 -1.0l0.9 -0.3M661.3 236.5l0.1 1.5l-1.4 0.6M655.8 243.6l-0.9 0.8l-1.2 -0.2M664.6 241.7l-1.1 0.6l-1.2 -0.5M653.5 237.2l-1.1 0.9l-0.5 1.3M657.2 246.9l-0.4 -0.4l0.1 -0.5M652.8 252.9l-0.5 -0.2l-0.1 -0.6M651.6 239.4l1.0 -1.1l0.9 -1.2M649.8 244.3l0.3 0.5l0.5 0.4M668.2 236.8l1.3 -0.8l1.5 -0.2M661.8 249.2l-0.7 -0.7l-0.7 -0.7M650.1 242.3l0.7 0.5l0.8 -0.4M659.4 238.9l0.1 -0.7l-0.1 -0.7M667.9 245.4l-0.6 0.5l-0.7 0.2M655.0 241.4l-0.3 1.5l0.9 1.3M664.8 240.3l1.0 -1.0l1.4 0.1M653.8 255.3l0.7 1.3l-0.5 1.3M654.0 241.2l0.1 -0.9l-0.0 -0.9M656.5 235.8l-1.5 0.2l-0.8 1.3M658.5 236.4l-0.5 0.3l-0.2 0.6M657.7 244.8l1.1 -0.7l1.2 -0.3M653.9 248.6l0.5 1.1l0.7 1.0M654.6 240.9l0.3 0.7l0.1 0.8M660.9 245.6l-0.7 0.8l-1.0 -0.3M654.6 237.0l-0.4 -1.0l-1.0 -0.4M666.8 236.3l0.5 0.7l0.1 0.8M643.1 244.2l-1.3 -0.2l-1.0 0.9M659.2 246.3l-0.5 -0.4l-0.2 -0.6M651.0 240.9l-1.4 -0.2l-0.9 1.0M661.3 248.6l1.2 -0.3l1.2 0.3M660.3 245.7l-1.4 -0.2l-1.3 -0.7M665.4 250.8l0.7 0.2l0.2 0.7M651.4 242.4l-1.0 1.1l-1.0 1.2M656.3 246.1l0.9 0.8l1.2 0.0M656.4 248.6l0.5 -0.4l0.6 0.2M666.1 239.4l0.7 0.8l0.6 0.9M651.8 246.4l-1.3 0.5l-1.4 0.0M654.0 240.4l-0.2 1.1l0.6 0.9M652.9 245.4l-0.1 1.1l0.3 1.1M652.5 244.1l0.2 -1.4l-0.3 -1.4M652.0 236.6l1.3 -0.7l0.3 -1.4M658.8 240.8l1.1 0.0l0.9 -0.6M665.7 246.2l0.6 -0.6l0.8 -0.3M654.2 247.1l0.2 -1.4l-0.3 -1.4M664.1 250.0l0.6 -0.8l1.0 0.0M658.7 240.4l-0.8 1.0l0.2 1.2M645.4 250.1l0.3 0.5l-0.3 0.5M660.8 239.9l0.4 0.7l0.5 0.7M656.3 243.2l-0.3 0.5l-0.3 0.4M654.8 250.1l-0.6 0.5l-0.8 -0.1M645.9 247.0l0.6 -0.1l0.6 0.1M667.6 241.8l0.7 -0.6l0.9 0.0M660.2 253.0l-0.6 0.7l-0.0 0.9M657.6 248.0l-0.9 1.3l-1.5 0.5M673.5 244.6l-0.4 1.1l-1.1 0.5M655.8 237.4l0.8 -0.5l-0.1 -0.9M654.1 240.6l0.2 1.1l0.6 1.0M651.0 241.1l0.5 1.0l0.8 0.9M657.0 240.1l0.6 -1.3l-0.8 -1.2M665.6 247.8l0.1 -0.5l-0.3 -0.4M664.2 247.7l-0.7 0.6l0.2 0.9M645.1 233.9l-1.2 0.7l-0.1 1.4M663.8 241.8l-0.5 1.1l0.4 1.1M653.4 237.5l-0.6 -0.8l-0.8 -0.5M661.4 230.2l0.5 1.2l-0.0 1.3M652.5 246.4l-1.2 0.9l-1.5 0.4M654.3 232.4l0.8 -1.0l0.1 -1.3M657.1 249.9l-0.8 -0.4l-0.8 0.4M658.3 246.5l0.6 -0.4l0.5 -0.5M655.7 243.9l-0.4 0.4l0.1 0.5M655.3 240.3l-0.1 -0.5l-0.4 -0.3M650.3 247.4l-0.2 -0.9l-0.9 -0.2M656.5 244.6l0.3 -0.6l-0.2 -0.6M654.2 251.0l-0.4 1.0l-0.4 1.0M673.5 244.2l-0.1 -0.6l-0.1 -0.6M659.5 241.0l0.7 -0.5l0.8 -0.3M659.2 232.1l-0.7 -0.7l-0.9 0.1M657.9 240.6l0.6 -0.3l0.6 -0.0M660.7 243.8l1.1 -0.7l1.0 -0.8M656.2 258.4l0.1 0.6l-0.4 0.4M657.7 247.8l-1.0 1.2l-1.5 -0.5M658.6 251.7l0.1 -1.0l0.9 -0.3M665.3 253.2l-1.0 1.0l-1.3 0.4M660.9 242.2l-1.2 -0.2l-0.8 0.8M654.2 244.2l0.6 1.2l0.7 1.2M662.3 236.1l0.7 0.9l-0.1 1.1M654.3 243.7l-0.9 -1.3l-0.0 -1.6M653.4 233.9l-1.3 0.1l-1.0 -0.8M658.6 234.7l1.0 -0.3l0.2 -1.0M649.9 245.7l-0.3 0.8l-0.6 0.6M661.8 244.7l-1.2 1.0l-1.6 -0.1M671.7 238.9l-0.2 0.8l0.2 0.8M664.2 240.2l-0.5 1.5l-0.5 1.5M655.2 245.5l-1.1 0.6l-1.1 0.5M653.3 253.8l0.2 1.0l-0.9 0.6M659.1 245.9l0.3 0.5l0.2 0.5M669.0 239.0l0.9 -0.4l0.0 -1.0M667.0 252.3l0.7 1.4l1.4 0.7M649.3 246.3l-0.0 -1.3l1.2 -0.5M663.1 235.6l0.6 0.1l0.3 0.5M652.7 238.7l-0.2 -0.7l0.5 -0.5M656.7 248.3l-0.5 -0.5l-0.2 -0.7M649.4 244.6l-0.4 1.2l0.7 1.0M655.6 233.7l0.8 -0.6l1.0 -0.1M659.2 256.9l0.6 0.0l0.5 0.5M650.1 249.1l0.9 0.1l0.8 -0.4M659.2 247.8l0.4 0.5l-0.3 0.5M663.0 242.3l0.7 0.1l0.5 -0.4M655.3 254.0l0.8 -1.3l1.3 -0.8M651.6 250.0l0.1 1.5l-0.4 1.5M658.6 238.0l1.4 -0.4l0.9 1.1M673.5 244.3l0.5 -1.0l0.6 -1.0M654.4 249.8l-0.4 0.4l-0.4 0.5M650.9 242.0l-1.0 0.4l-1.0 -0.4M656.4 253.1l0.5 -0.3l0.4 0.4M653.3 240.5l-0.3 0.5l-0.4 0.4M665.4 247.9l-0.7 -0.4l-0.7 0.4M651.3 244.7l-0.4 -0.9l-0.9 -0.6M652.1 246.3l0.9 1.3l0.4 1.5M654.5 239.6l1.2 -0.7l1.1 -0.9M651.9 240.9l0.1 -1.3l-0.3 -1.3M653.3 254.3l0.3 -1.1l-0.3 -1.0M654.0 249.5l-0.5 1.2l0.3 1.2M659.0 249.7l0.8 0.7l1.0 0.2M659.9 251.1l-0.4 -1.1l-1.2 -0.2M666.9 237.7l-1.0 1.0l-1.4 0.3M654.5 245.9l-0.6 0.7l0.2 0.9M667.4 239.5l0.8 -0.2l0.7 0.4M664.6 242.5l0.8 -0.3l0.6 0.6M652.2 244.5l1.6 0.3l1.0 -1.3M659.7 238.2l0.9 0.5l0.7 0.8M652.7 248.7l0.8 1.2l1.1 0.9M657.0 243.6l-0.0 -0.9l-0.0 -0.9M655.8 243.7l-1.3 -0.6l-1.4 0.3M663.4 241.3l0.9 -1.3l1.6 0.2M664.9 253.6l-0.1 -0.6l-0.1 -0.6M653.9 259.5l-0.7 0.0l-0.6 0.3M663.7 245.7l1.1 0.2l1.1 -0.3M655.9 256.9l0.2 0.6l-0.3 0.5M658.9 242.8l0.8 -0.1l0.8 -0.0M658.2 242.9l-0.5 0.4l-0.3 0.6M673.5 238.1l0.1 -0.6l-0.3 -0.5M657.3 237.0l-0.7 0.4l0.0 0.8M656.1 245.3l0.3 0.8l-0.4 0.8M649.5 247.6l0.5 -0.1l0.4 0.4M659.2 243.9l-0.6 -0.3l-0.7 0.0M656.3 247.3l-0.6 -1.3l-1.0 -1.0M660.3 236.1l-0.3 -1.1l0.9 -0.7M657.3 230.6l0.3 -1.4l-0.4 -1.4M656.8 255.1l-0.8 -0.2l-0.4 -0.7M652.8 253.3l0.2 1.0l-0.7 0.8M660.1 243.6l0.3 0.6l0.1 0.7M673.5 255.8l-0.6 -0.5l-0.7 -0.1M646.9 244.3l-0.3 -0.6l-0.1 -0.7M653.3 243.0l-1.4 0.6l-0.2 1.5M653.5 236.1l1.1 -0.3l0.9 0.7M655.1 243.0l-1.4 -0.2l-0.8 1.1M661.7 248.3l-1.2 -0.3l-1.0 -0.7M651.7 244.0l0.3 -0.8l-0.2 -0.8M658.5 241.3l0.1 -1.3l0.1 -1.3M660.3 249.6l0.5 0.6l-0.3 0.8M655.3 251.2l-0.3 1.6l0.5 1.5M668.8 238.0l1.3 0.8l0.8 1.3M652.8 244.4l0.5 1.0l0.9 0.6M656.1 243.4l0.3 -0.5l-0.1 -0.5M667.0 251.8l-0.6 -1.1l-1.1 -0.4M663.2 247.9l0.8 0.4l0.9 0.2M659.5 241.9l-0.2 0.9l0.1 0.9M654.4 241.7l-0.3 -0.5l-0.5 -0.4M655.6 251.5l0.6 0.5l0.7 0.3M673.5 235.4l1.0 0.4l0.8 0.7M669.9 249.3l-0.5 -0.3l-0.1 -0.6M654.6 245.7l0.7 -0.1l0.6 -0.4M658.7 245.0l-1.5 -0.3l-0.4 -1.5M661.9 240.3l0.6 1.3l-0.1 1.4M656.7 240.6l-0.6 -0.3l-0.2 -0.6M658.3 237.9l-0.4 -1.5l-1.6 -0.3M658.2 245.8l0.5 1.5l-0.7 1.4M663.2 247.4l1.1 -1.0l-0.2 -1.4M659.0 243.4l-1.4 0.6l-1.2 -1.0M656.8 248.1l-1.5 -0.2l-1.4 0.6M656.7 244.9l0.3 1.5l-1.2 1.0M647.4 242.1l-1.2 -0.4l-1.3 -0.2M664.7 234.8l-0.3 -1.4l-1.4 -0.3M664.3 241.2l0.8 1.3l1.3 0.8M663.7 239.1l-1.0 1.2l0.6 1.5M666.6 244.3l-0.1 -0.5l0.4 -0.3M657.8 245.6l-0.2 0.7l0.1 0.7M659.1 237.3l0.8 -0.6l0.3 -1.0M661.3 249.2l-0.6 -0.3l-0.6 0.2M654.5 236.1l-0.3 -0.5l0.1 -0.6M654.7 241.9l-0.9 0.5l-1.0 0.1M662.4 237.4l0.4 0.6l0.6 0.3M659.0 245.5l-0.4 0.9l0.0 1.0M653.9 238.6l0.2 1.1l0.8 0.8M657.3 246.1l0.1 -0.5l0.4 -0.3M665.0 249.7l-1.2 1.1l-0.1 1.6M662.4 255.2l0.9 0.2l0.9 -0.0M657.0 246.8l0.5 -0.5l0.6 -0.3M654.7 242.1l-0.7 0.7l0.1 1.0M649.8 251.8l-0.5 -0.6l0.2 -0.8M655.0 244.1l-0.7 -0.1l-0.5 -0.4M654.6 251.6l0.2 -0.5l-0.0 -0.5M661.3 246.8l0.6 -0.7l0.7 -0.5M652.6 246.4l-0.8 0.6l-1.0 -0.3M654.3 238.4l-1.2 0.3l-1.1 0.6M651.8 245.2l0.5 0.9l1.0 -0.1M658.2 247.1l0.7 -0.4l0.8 0.1M652.4 246.4l-0.2 -1.5l-0.2 -1.5M658.5 242.9l1.4 -0.0l1.3 -0.7M650.8 242.7l-0.4 -0.3l-0.5 0.1M660.5 250.0l-0.5 -0.2l-0.5 0.1M654.8 248.5l-0.3 1.6l-0.3 1.6M661.4 246.8l0.5 -0.3l0.6 -0.1M660.6 244.4l0.6 -0.3l0.2 -0.6M658.3 236.9l0.5 0.7l0.8 -0.1M650.0 248.1l-0.9 -0.5l-1.0 0.2M660.5 244.7l1.0 -0.2l1.0 -0.1M655.3 241.2l0.0 1.6l-0.6 1.5M657.9 254.0l0.2 0.8l0.2 0.8M658.1 229.5l0.8 0.9l-0.1 1.2M667.1 245.7l-0.7 0.3l-0.8 -0.2M659.0 243.1l-0.6 -1.0l0.7 -0.9M658.1 244.0l-0.5 1.2l-1.1 0.7M648.4 241.7l-0.3 1.0l0.4 0.9M660.4 235.3l-1.0 0.6l-1.0 0.6M661.2 240.8l1.4 -0.1l1.2 -0.8M660.5 239.0l0.1 -0.5l-0.1 -0.5M654.0 253.0l0.5 -0.8l-0.2 -0.9M669.9 245.4l0.5 0.4l0.6 -0.3M665.3 240.4l0.2 1.1l-0.9 0.7M652.0 244.8l0.4 -0.4l0.5 0.2M652.2 243.1l-0.7 -0.3l-0.8 0.1M656.7 247.8l-0.4 -0.5l0.3 -0.6M657.1 248.5l-1.2 -0.3l-1.2 -0.2M658.7 250.2l0.7 0.2l0.6 0.5M654.7 250.2l-0.3 -1.4l0.3 -1.4M654.8 239.0l-0.7 0.3l-0.3 0.6M654.7 247.9l-0.2 1.2l-0.3 1.2M655.2 237.7l-0.8 -0.7l0.3 -1.0M656.9 250.3l-1.0 0.4l-0.4 1.0M649.5 249.1l-1.1 0.4l-0.7 0.9M659.3 244.9l-0.7 0.7l0.2 1.0M648.0 243.3l1.4 -0.3l1.4 0.3M649.6 247.4l-0.6 0.6l0.2 0.8M660.1 237.9l-1.3 -0.7l-0.8 -1.2M666.8 239.9l0.8 -0.2l0.6 -0.6M651.3 239.6l-0.3 -0.5l0.3 -0.5M668.9 245.1l-1.5 -0.4l-1.4 0.6M663.1 237.9l-0.2 -1.5l0.7 -1.3M668.2 235.8l-0.2 0.9l-0.7 0.5M654.7 243.5l0.5 0.3l0.0 0.5M665.5 243.9l-0.2 0.9l0.2 0.9M654.1 235.2l1.0 0.5l1.0 -0.6M656.8 239.0l-0.5 -0.4l-0.6 0.0M650.4 258.0l-0.8 -0.9l-1.0 -0.7M663.0 256.4l1.0 0.2l1.0 0.0M661.5 245.5l-1.5 -0.2l-0.9 -1.2M656.9 240.7l-0.4 -0.3l-0.3 -0.4M661.0 243.5l-0.2 0.5l-0.5 0.1M665.8 245.2l0.9 -0.6l0.9 -0.6M652.6 231.5l0.3 0.7l0.7 0.4M657.9 252.9l-0.8 0.1l-0.7 -0.3M669.2 245.0l0.9 -0.7l-0.2 -1.1M659.4 253.2l-0.7 -0.1l-0.6 -0.2M653.6 245.9l-0.0 -0.9l-0.5 -0.7M658.3 253.0l-0.4 0.6l-0.8 0.1M650.6 236.5l-0.2 -0.6l-0.1 -0.6M651.2 247.8l-0.7 -0.4l-0.8 0.0M658.1 232.3l0.1 0.6l-0.3 0.5M654.3 236.1l-0.9 1.1l-1.0 0.9M656.3 247.8l-1.2 0.8l-1.4 -0.3M658.7 235.0l-1.6 0.2l-1.2 1.0M663.0 237.7l-0.9 -0.8l-1.1 0.5M658.7 241.2l0.3 -1.1l-0.0 -1.2M656.2 240.5l-0.5 0.8l0.1 0.9M656.3 250.9l-0.6 -0.6l-0.8 -0.2M656.8 245.4l1.1 0.2l1.1 0.3M663.9 242.1l-1.1 0.4l-0.7 0.9M664.5 243.6l0.4 -0.5l0.6 0.1M659.3 239.9l0.8 0.6l-0.0 1.0M657.2 240.0l1.2 0.2l1.2 -0.3M661.6 235.8l0.1 0.8l0.8 0.3M658.1 243.5l1.3 -0.2l1.4 -0.1M663.4 238.4l0.3 -0.4l0.5 -0.1M648.7 243.4l0.3 0.5l0.3 0.6M656.0 239.9l-0.7 0.1l-0.3 -0.6M658.1 242.3l-0.1 -1.0l-0.5 -0.8" fill="none" stroke="#000" stroke-width="0.6" opacity="0.85" stroke-linecap="round"/></g>
<path d="M674 252.5 V260 H666.5 Z" fill="#f37878"/>
<path d="M668 256.6 H672.6 M670.3 254.3 V258.9" stroke="#000" stroke-width="1.3"/>
<mask id="m8" maskUnits="userSpaceOnUse" x="676" y="228" width="32" height="32"><ellipse cx="692" cy="244" rx="15" ry="15" fill="url(#hard)"/></mask>
<rect x="676" y="228" width="32" height="32" filter="url(#nE)" mask="url(#m8)" opacity="1.0"/>
<path d="M708 252.5 V260 H700.5 Z" fill="#f37878"/>
<path d="M702 256.6 H706.6 M704.3 254.3 V258.9" stroke="#000" stroke-width="1.3"/>
<mask id="m33" maskUnits="userSpaceOnUse" x="710" y="228" width="32" height="32"><rect x="710" y="228" width="32" height="32" fill="url(#lgm)"/></mask>
<circle cx="726" cy="244" r="14" fill="#181818"/>
<clipPath id="c9"><circle cx="726" cy="244" r="14"/></clipPath>
<g clip-path="url(#c9)"><rect x="710" y="244" width="32" height="16" fill="url(#lg33)"/><rect x="710" y="228" width="32" height="32" fill="#fff" filter="url(#nW)" mask="url(#m33)" opacity="0.95"/></g>
<path d="M742 252.5 V260 H734.5 Z" fill="#f37878"/>
<path d="M736 256.6 H740.6 M738.3 254.3 V258.9" stroke="#000" stroke-width="1.3"/>
<mask id="m10" maskUnits="userSpaceOnUse" x="744" y="228" width="32" height="32"><ellipse cx="760" cy="244" rx="14" ry="9" fill="url(#hard)"/></mask>
<rect x="744" y="228" width="32" height="32" filter="url(#nE)" mask="url(#m10)" opacity="1.0"/>
<path d="M770 256.6 H774.6 M772.3 254.3 V258.9" stroke="#000" stroke-width="1.3"/>
<mask id="m11" maskUnits="userSpaceOnUse" x="778" y="228" width="32" height="32"><ellipse cx="794" cy="243" rx="14" ry="10" fill="url(#hard)"/></mask>
<rect x="778" y="228" width="32" height="32" filter="url(#nF)" mask="url(#m11)" opacity="0.8"/>
<path d="M804 256.6 H808.6 M806.3 254.3 V258.9" stroke="#000" stroke-width="1.3"/>
<circle cx="829.2" cy="234.2" r="0.6" fill="#555"/><circle cx="827.9" cy="253.6" r="0.6" fill="#555"/><circle cx="825.0" cy="250.2" r="0.7" fill="#555"/><circle cx="827.1" cy="248.6" r="0.5" fill="#555"/><circle cx="824.1" cy="250.1" r="0.5" fill="#555"/><circle cx="826.7" cy="245.0" r="0.6" fill="#555"/><circle cx="825.1" cy="236.5" r="0.6" fill="#555"/><circle cx="825.1" cy="246.0" r="0.6" fill="#555"/><circle cx="826.7" cy="244.1" r="0.6" fill="#555"/><circle cx="825.9" cy="235.5" r="0.6" fill="#555"/><circle cx="824.2" cy="253.2" r="0.3" fill="#555"/><circle cx="826.3" cy="256.1" r="0.4" fill="#555"/><circle cx="824.7" cy="243.1" r="0.6" fill="#555"/><circle cx="826.4" cy="236.2" r="0.5" fill="#555"/><circle cx="824.1" cy="233.6" r="0.6" fill="#555"/><circle cx="826.1" cy="241.6" r="0.5" fill="#555"/><circle cx="824.8" cy="252.9" r="0.7" fill="#555"/><circle cx="825.0" cy="237.1" r="0.6" fill="#555"/><circle cx="825.0" cy="237.6" r="0.3" fill="#555"/><circle cx="824.1" cy="241.6" r="0.5" fill="#555"/><circle cx="823.4" cy="245.4" r="0.3" fill="#555"/><circle cx="825.7" cy="236.3" r="0.5" fill="#555"/><circle cx="824.4" cy="237.8" r="0.7" fill="#555"/><circle cx="825.7" cy="252.4" r="0.6" fill="#555"/><circle cx="824.3" cy="249.7" r="0.5" fill="#555"/><circle cx="827.0" cy="247.9" r="0.3" fill="#555"/><circle cx="825.2" cy="239.2" r="0.5" fill="#555"/><circle cx="824.3" cy="256.6" r="0.5" fill="#555"/><circle cx="824.8" cy="256.3" r="0.4" fill="#555"/><circle cx="824.5" cy="245.1" r="0.6" fill="#555"/><circle cx="824.9" cy="248.1" r="0.3" fill="#555"/><circle cx="823.6" cy="257.6" r="0.5" fill="#555"/><circle cx="824.4" cy="243.4" r="0.6" fill="#555"/><circle cx="824.7" cy="241.5" r="0.3" fill="#555"/><circle cx="826.7" cy="235.8" r="0.5" fill="#555"/><circle cx="829.0" cy="249.9" r="0.4" fill="#555"/><circle cx="826.2" cy="256.5" r="0.4" fill="#555"/><circle cx="823.6" cy="241.9" r="0.4" fill="#555"/><circle cx="825.2" cy="242.0" r="0.5" fill="#555"/><circle cx="827.4" cy="254.3" r="0.4" fill="#555"/>
<path d="M844 252.5 V260 H836.5 Z" fill="#f37878"/>
<path d="M838 256.6 H842.6 M840.3 254.3 V258.9" stroke="#000" stroke-width="1.3"/>
<g stroke="#777" stroke-width="1.6" stroke-linecap="round"><path d="M626.2 276.2 L621.6 279.4"/><path d="M619.6 278.0 L619.8 283.8"/><path d="M618.6 270.8 L624.8 274.4"/><path d="M634.6 278.2 L632.3 283.4"/><path d="M624.2 266.3 L620.6 270.4"/><path d="M616.9 283.7 L621.1 291.5"/><path d="M627.8 280.3 L625.9 284.8"/><path d="M628.4 268.7 L629.8 273.2"/><path d="M610.4 273.3 L616.4 273.6"/><path d="M631.9 285.8 L632.9 290.2"/><path d="M617.6 264.2 L623.1 268.7"/></g>
<g fill="none" stroke="#444" stroke-width="0.7"><path d="M645 267 L650 274 L647 265 M650 274 C654 271 662 272 668 274 L671 271 L672 275 L669 277 L669 286 M666 278 L665 286 M654 278 L652 286 M651 276 L647 286 M651 276 C656 280 662 280 667 277"/><path d="M655 265 L657 271 L660 266"/></g>
<mask id="m12" maskUnits="userSpaceOnUse" x="676" y="262" width="32" height="32"><ellipse cx="692" cy="280" rx="17" ry="17" fill="url(#hard)"/></mask>
<rect x="676" y="262" width="32" height="32" filter="url(#nC)" mask="url(#m12)" opacity="0.55"/>
<clipPath id="c13"><rect x="710" y="262" width="32" height="32"/></clipPath>
<g clip-path="url(#c13)"><ellipse cx="726" cy="281" rx="5.3" ry="6.0" fill="#000" opacity="0.8" filter="url(#bl1)"/><path d="M726.1 287.6l1.3 -0.2l1.3 -0.3M725.1 283.5l1.4 -0.0l1.2 -0.8M720.3 276.6l0.7 -0.5l0.4 -0.7M728.3 287.2l1.2 -0.7l0.3 -1.3M724.8 282.4l0.6 0.9l1.1 0.2M725.6 284.7l-1.3 0.7l-0.7 1.4M722.6 277.7l-0.2 0.8l-0.7 0.5M729.9 274.2l1.1 -0.9l0.5 -1.3M726.6 287.4l-1.1 -0.9l0.1 -1.4M729.6 268.0l-0.6 -1.2l0.3 -1.3M718.1 281.2l0.8 -0.8l0.4 -1.0M721.6 285.7l-1.0 -0.4l-1.1 -0.2M725.5 273.4l1.5 -0.6l0.0 -1.7M720.1 285.8l-1.2 -0.3l-1.2 0.4M719.4 287.5l-0.7 -1.4l0.7 -1.4M733.7 276.2l1.4 -0.8l1.4 0.8M722.1 283.6l-1.3 0.5l-1.0 -1.0M723.8 276.3l0.6 0.3l0.6 -0.3M726.1 281.1l-0.7 0.5l-0.8 -0.4M727.1 282.8l1.3 -1.0l1.3 -0.9M722.1 279.9l-0.7 0.5l0.0 0.8M734.7 279.5l0.4 -0.5l0.6 -0.3M732.5 283.9l1.1 0.5l1.1 -0.5M735.6 279.5l-1.4 0.7l-1.6 -0.3M729.8 289.9l0.6 -0.6l0.8 -0.3M725.7 282.1l-0.6 0.2l-0.6 -0.3M725.0 277.5l-0.5 0.3l-0.3 0.5M719.3 275.4l1.2 -0.2l1.2 -0.4M730.1 276.4l0.3 -0.9l0.9 -0.2M727.5 285.7l0.1 0.9l-0.1 0.9M727.1 280.4l-0.7 -0.4l-0.2 -0.7M725.5 267.9l1.2 -0.3l0.9 -0.9M725.0 275.6l-0.1 0.6l-0.5 0.3M723.8 282.1l0.1 0.7l0.6 0.2M725.9 275.4l-0.3 0.8l0.2 0.9M720.3 280.6l0.9 0.4l0.2 1.0M724.8 275.2l-0.7 0.5l-0.1 0.9M725.3 283.4l0.6 0.1l0.1 0.6M727.3 280.6l-0.4 0.5l-0.2 0.6M723.5 278.7l-0.7 0.2l-0.7 0.2M728.3 284.5l-0.7 0.4l-0.7 0.4M726.9 275.8l0.4 -0.6l0.6 -0.3M731.1 270.2l-0.3 -0.8l0.1 -0.9M723.0 277.3l-0.4 -0.3l-0.5 0.3M730.0 291.2l0.8 0.1l0.6 0.6M729.4 277.5l-1.6 -0.1l-1.4 0.7M728.8 283.5l-0.1 -0.9l0.0 -0.9M733.4 285.2l1.5 -0.4l0.8 -1.4M734.9 278.5l0.2 1.0l0.8 0.6M720.9 287.3l1.1 0.7l0.4 1.2M728.5 282.0l0.3 -1.5l-0.5 -1.4M730.8 276.3l1.4 0.1l1.1 -0.9M721.8 288.9l1.5 0.1l1.4 -0.4M723.1 278.4l-0.7 -0.4l-0.6 -0.5M720.3 283.5l1.4 0.0l1.1 -0.8M728.2 275.9l-0.5 -0.9l-1.0 -0.2M732.9 279.9l1.3 -0.2l1.2 -0.5M719.8 286.4l0.7 -1.2l-0.2 -1.4M725.8 285.9l0.7 0.2l0.7 -0.1M727.8 284.0l-1.3 -0.4l-1.3 0.1M726.5 280.2l0.7 0.2l0.4 0.6M727.2 289.1l-0.5 1.4l-0.5 1.4M729.2 291.4l1.6 -0.0l1.6 -0.2M723.0 279.0l0.5 -0.8l0.6 -0.7M717.3 274.9l-0.9 0.3l-0.8 -0.6M727.0 282.2l-0.2 0.5l-0.5 0.1M717.7 281.3l1.0 0.4l0.5 0.9M733.6 281.3l1.4 -0.4l0.6 -1.4M720.8 281.3l-1.5 0.2l-1.3 0.8M729.8 291.9l-1.2 -0.5l-1.2 -0.6M724.3 279.4l0.5 0.4l0.6 0.4M734.0 284.7l0.9 1.2l0.3 1.5M727.5 284.6l-1.1 -1.3l-1.5 -0.9M726.2 284.2l0.2 -0.6l-0.5 -0.5M722.4 273.9l0.4 1.0l1.1 0.0M725.1 281.8l-0.9 -0.5l-0.8 -0.6M729.8 278.1l0.1 0.6l0.0 0.6M720.4 275.1l-0.9 0.4l-0.9 0.3M725.5 276.8l-0.4 1.5l0.8 1.3M728.1 285.9l-0.8 -0.2l-0.5 -0.7M728.6 286.0l0.7 -0.1l0.3 -0.7M728.0 273.0l0.4 0.5l0.6 -0.1M723.6 280.7l0.2 -0.8l0.4 -0.7M726.4 277.3l0.6 0.1l0.6 -0.1M729.0 276.1l-0.6 0.9l-0.9 0.6M726.4 290.6l0.8 -0.9l-0.0 -1.2M727.2 277.7l-1.2 -0.7l-1.4 -0.0M729.6 284.0l1.3 0.9l0.4 1.5M722.8 280.0l-0.9 1.3l-1.5 0.2M727.7 279.2l-0.6 1.2l-1.3 0.5M729.4 287.3l0.9 -0.6l1.0 0.4M731.7 285.2l1.2 -0.7l1.1 0.8M722.0 277.3l-0.1 -1.0l-0.9 -0.6M721.7 281.5l-1.1 -1.1l-0.3 -1.5M724.3 277.0l0.6 -0.3l0.4 -0.5M729.8 283.2l-1.7 0.2l-1.5 -0.7M725.3 285.5l-1.4 0.8l-1.3 0.9M726.0 285.9l-1.0 -1.3l-1.4 -0.8M728.1 277.8l-0.2 -0.9l0.0 -0.9M726.5 279.3l0.7 0.2l0.6 0.4M721.2 271.3l-1.3 -0.4l-0.4 -1.3M730.7 283.0l-1.3 -0.3l-1.3 0.2M728.7 277.0l0.5 0.3l0.5 0.1M732.2 284.8l0.4 -0.3l0.5 -0.2M730.1 280.5l0.2 1.0l-0.8 0.6M726.4 281.0l-0.3 0.6l-0.1 0.6M719.3 262.7l0.2 -1.0l0.9 -0.4M732.3 284.9l-0.6 0.2l-0.6 -0.1M724.5 276.0l1.1 -0.1l1.0 -0.5M728.7 281.8l-1.0 -0.2l-1.0 0.3M719.9 281.1l-0.8 1.0l-0.8 1.0M725.2 272.4l0.1 0.8l0.3 0.8M734.2 273.1l-0.8 0.4l-0.5 0.6M723.6 288.7l-0.5 -1.1l-0.8 -1.0M741.5 280.4l0.1 -1.3l-0.3 -1.2M720.8 278.6l-0.6 -1.6l0.1 -1.7M721.9 272.7l0.4 -1.6l-0.4 -1.6M731.6 288.1l-1.5 0.6l-1.5 0.7M724.3 278.5l-0.9 -1.0l0.6 -1.2M729.1 282.2l1.0 -0.4l0.4 -1.0M726.3 278.8l-0.3 1.6l-1.6 0.4M721.3 290.5l0.7 -0.9l0.3 -1.1M729.6 274.1l-0.3 0.6l-0.5 0.4M721.2 287.1l-1.1 0.9l-1.3 -0.6M727.4 281.6l0.8 0.8l-0.1 1.2M727.4 281.4l-0.4 0.6l-0.7 -0.0M725.4 288.3l1.4 0.5l1.5 -0.0M719.0 277.7l-0.5 -0.2l-0.4 -0.4M722.2 282.0l0.1 -1.2l-0.2 -1.2M728.0 272.0l-0.5 0.1l-0.5 -0.2M721.4 281.6l0.4 -0.3l0.5 -0.1M726.8 275.4l-0.2 -1.5l0.3 -1.5M730.7 284.1l-0.7 0.6l-0.7 0.6M732.7 288.2l-0.6 -0.9l-0.6 -0.8M728.2 277.7l1.0 0.3l1.0 0.2M723.9 277.5l0.4 0.8l0.0 0.9M734.2 282.3l-0.7 -0.2l-0.7 -0.1M724.8 275.8l-0.3 -0.5l-0.0 -0.6M730.5 279.4l0.4 -1.2l0.6 -1.1M726.9 276.9l-1.0 -0.5l-0.6 -0.9M734.2 279.4l0.8 0.3l0.5 0.7M722.1 292.1l1.1 0.9l-0.1 1.4M726.7 277.5l-0.5 1.5l-0.0 1.6M723.3 269.2l-1.2 0.4l-1.1 0.5M728.3 278.7l-0.8 -1.4l-1.6 0.1M727.6 280.2l-0.9 0.4l-0.9 -0.3M728.4 279.1l-1.0 1.0l-1.1 0.8M727.1 275.9l-1.4 -0.4l-0.9 -1.1M720.6 282.8l-0.9 -0.3l-0.7 -0.6M723.2 274.7l1.1 -0.2l1.0 0.4M727.3 281.4l0.6 -0.8l0.6 -0.8M723.4 291.9l-0.2 1.1l-0.1 1.1M727.5 281.2l0.5 -0.6l0.3 -0.7M727.2 278.7l-0.5 -0.3l-0.5 0.0M724.7 275.6l-1.0 1.3l-0.1 1.7M728.8 277.4l-0.6 0.5l-0.5 0.6M728.1 278.7l-0.4 -0.5l-0.5 -0.5M728.9 277.5l1.1 -0.1l0.4 -1.1M732.7 286.7l-0.6 -1.2l-0.1 -1.3M730.3 283.1l-0.9 -0.5l-0.0 -1.0M728.4 279.5l-0.6 0.7l0.3 0.9M720.8 287.4l1.3 0.1l1.1 -0.8M727.2 283.4l0.2 0.8l-0.5 0.7M727.1 285.9l0.5 1.0l0.4 1.0M716.9 279.3l-1.2 0.5l-1.1 -0.7M727.4 282.2l0.5 -0.2l0.5 -0.1M734.9 277.8l-1.0 0.2l-0.2 1.0M730.1 279.6l0.5 1.4l1.4 0.7M727.8 285.8l0.2 -1.4l-0.8 -1.2M726.8 282.8l0.4 -1.3l0.8 -1.2M721.8 280.1l-1.2 0.5l-0.9 0.9M720.5 278.9l0.6 -0.2l0.6 0.3M725.6 293.4l0.1 0.7l0.5 0.5M735.7 276.7l-0.2 1.1l-1.0 0.4M728.7 287.5l0.3 1.1l-0.9 0.6M728.1 271.8l-0.9 -0.0l-0.7 -0.5M733.9 277.8l-1.2 0.4l-0.4 1.2M727.3 282.1l1.7 0.1l1.0 -1.4M729.9 283.6l-1.5 -0.2l-1.4 0.4M723.8 273.6l-0.6 0.5l-0.8 -0.3M731.0 278.9l-1.5 0.7l-1.4 0.9M725.4 278.6l-0.6 -1.6l-1.2 -1.1M724.8 281.4l-0.3 -0.7l0.2 -0.8M722.3 278.6l-0.5 -0.9l-0.1 -1.0M722.4 280.5l-0.0 -1.3l0.7 -1.1M731.4 276.9l-0.7 -1.2l0.4 -1.3M728.4 280.2l1.0 -1.0l1.4 0.2M724.8 288.4l1.4 -0.7l1.4 0.7M724.9 281.8l0.6 -0.4l0.7 -0.0M727.5 281.1l0.9 -0.4l0.9 0.3M717.2 276.6l0.7 0.4l0.2 0.8M727.7 278.9l0.8 -0.9l1.2 0.1M728.1 273.9l1.0 -0.4l1.1 0.2M725.1 285.9l0.3 1.2l0.1 1.2M725.2 278.6l0.5 0.4l0.1 0.6M729.9 280.4l-1.1 1.1l0.6 1.5M725.2 287.7l-1.7 -0.2l-1.1 1.3M730.7 282.9l-0.7 -0.7l-0.1 -1.0M726.5 283.4l-0.4 1.1l-1.1 0.6M728.9 281.5l0.6 1.1l0.8 1.0M724.9 279.9l0.5 0.9l1.0 0.2M724.8 287.1l-0.5 -1.0l0.3 -1.1M725.7 278.6l-0.1 1.5l0.9 1.2M726.8 274.7l-0.1 0.5l-0.1 0.5M728.5 273.5l1.7 0.0l1.3 -1.0M729.1 285.3l-0.7 -1.4l-1.5 -0.3M721.4 287.0l0.6 0.5l0.8 0.3M721.7 284.4l0.2 -0.8l0.7 -0.3M726.6 277.9l-0.7 -0.9l0.3 -1.1M719.5 286.3l-0.7 0.9l0.6 1.0M720.2 284.9l-1.0 -0.8l0.4 -1.3M727.9 282.7l0.5 0.3l0.2 0.5M726.5 285.2l0.7 0.5l0.6 0.7M721.1 282.7l-0.7 -0.0l-0.5 0.4M727.6 275.5l-0.5 -0.5l-0.5 -0.5M724.1 284.2l-0.5 1.1l0.8 0.8M716.8 284.5l-0.5 -0.4l-0.6 -0.1M721.4 285.3l-1.2 -0.6l-0.9 -1.0M726.7 279.1l-0.4 -0.9l-0.9 -0.1M728.9 279.2l-0.1 -0.5l0.4 -0.4M724.5 275.3l1.5 0.5l1.3 1.0M730.3 276.5l-0.7 0.1l-0.5 -0.5M718.4 286.7l-0.6 0.1l-0.5 0.3M722.4 283.7l1.6 -0.6l0.3 -1.7M725.9 278.3l-1.6 0.2l-1.6 -0.3M721.6 280.9l-0.4 0.6l0.4 0.7M738.2 286.5l-0.4 -1.4l1.1 -0.9M725.3 280.3l-0.8 0.1l-0.8 -0.0M721.4 274.0l-1.5 0.9l-0.0 1.7M728.0 285.3l-0.0 -0.9l0.7 -0.6M723.9 275.7l-0.9 0.3l-0.4 0.9M727.8 280.0l0.3 1.6l0.0 1.6M729.3 280.2l-0.5 0.0l-0.2 0.5M725.2 272.3l0.3 0.5l0.6 0.0M726.2 283.3l-0.8 1.0l-0.4 1.3M720.5 284.4l-0.3 0.8l-0.9 0.0M722.8 278.4l0.5 1.0l1.1 0.1M732.5 279.9l0.2 0.6l-0.2 0.6M730.1 278.2l-1.2 -0.7l-1.2 -0.7M725.3 280.3l-0.8 0.5l-0.6 0.7M725.1 287.4l1.2 -1.2l0.2 -1.7M721.6 272.3l-1.1 1.3l-0.4 1.6M734.8 279.4l-1.1 0.6l-1.2 0.0M725.9 275.6l1.2 -0.9l1.0 -1.2M728.7 283.8l-1.2 -0.0l-1.0 -0.7M723.1 279.2l-0.5 0.7l0.5 0.8M728.1 274.3l0.6 -0.9l0.9 -0.7M723.1 280.5l0.8 0.4l0.1 0.9M724.0 286.5l0.7 -0.8l0.1 -1.0M726.8 283.7l-0.6 -0.1l-0.7 0.1M721.5 282.4l0.1 -1.3l1.0 -0.7M723.1 288.3l-1.0 0.0l-0.4 0.9M719.7 279.3l0.8 -0.2l0.8 -0.2M715.7 280.0l-0.9 0.0l-0.8 -0.3M719.0 276.2l0.5 1.0l-0.6 1.0M723.2 275.7l-0.5 -0.4l-0.4 -0.6M715.2 288.2l-1.0 -0.3l-0.8 0.7M732.0 282.8l-0.4 1.0l-0.2 1.0M730.3 284.6l0.9 0.7l0.4 1.1M717.4 283.6l-1.6 -0.2l-1.2 -1.2M723.7 275.4l0.4 0.5l0.6 -0.1M724.4 286.2l-0.9 -0.3l-0.9 -0.0M727.9 281.1l-1.3 -0.8l-1.5 0.0M724.1 286.8l-0.9 -0.6l-0.3 -1.0M726.8 273.3l0.7 -0.9l1.1 -0.1M717.5 277.3l1.4 0.0l1.4 -0.1M724.8 269.5l-0.6 0.8l0.3 0.9M738.9 278.2l0.0 -0.8l-0.4 -0.6M727.2 278.6l-0.9 0.1l-0.9 -0.1M728.7 286.2l0.5 0.4l0.6 0.1M731.2 277.1l0.8 0.2l0.7 0.4M721.7 285.5l-1.4 -0.7l-0.4 -1.5M724.4 281.1l1.1 1.3l1.6 0.2M721.5 282.7l-0.7 -0.2l-0.6 -0.4M730.4 275.3l-1.3 0.5l-1.0 1.0M728.1 278.3l0.5 -1.3l-0.8 -1.2M732.4 285.9l-0.3 1.6l0.6 1.6M724.6 279.5l-1.2 0.8l-0.8 1.2M724.1 287.3l1.0 0.5l0.9 0.6M726.2 277.8l0.8 -0.4l0.5 -0.8M721.2 286.7l0.7 1.3l-0.1 1.5M721.7 283.4l1.2 0.6l1.3 0.4M727.9 277.6l0.6 0.1l0.6 -0.1M730.2 288.9l-0.9 0.7l-0.8 0.7M727.5 280.9l-0.1 -1.1l-0.7 -0.8M725.8 277.8l-0.6 -0.3l0.0 -0.7M733.4 274.7l1.2 0.9l0.4 1.5M719.2 284.8l0.7 0.3l0.7 0.4M723.0 278.1l-0.4 1.1l0.7 0.8M721.4 284.3l0.6 -1.1l-0.4 -1.3M722.3 282.5l-0.7 -0.9l-0.3 -1.1M728.2 289.8l-0.7 -0.2l-0.2 -0.6M722.3 283.5l-1.0 1.2l-1.6 -0.1M726.2 278.3l0.3 0.4l0.5 -0.1M723.2 283.0l1.2 0.7l1.0 1.0M722.8 286.4l0.5 0.4l0.7 0.1M733.8 273.2l-0.8 -0.5l-0.4 -0.8M727.9 288.8l-0.2 0.9l-0.6 0.8M730.9 275.0l1.4 -0.0l1.2 -0.7M724.7 282.8l0.8 -1.3l1.5 -0.3" fill="none" stroke="#000" stroke-width="0.6" opacity="0.85" stroke-linecap="round"/></g>
<g stroke="#222" stroke-width="1.3" fill="none" stroke-linecap="round"><path d="M748.6 267.0 Q760 266.7 772.5 267.4"/><path d="M747.2 271.4 Q760 271.4 771.9 271.5"/><path d="M747.3 275.8 Q760 276.1 772.0 276.2"/><path d="M747.1 280.2 Q760 281.1 772.7 280.6"/><path d="M748.0 284.6 Q760 285.3 772.6 284.4"/></g>
<clipPath id="c14"><rect x="778" y="262" width="32" height="32"/></clipPath>
<g clip-path="url(#c14)"><ellipse cx="793" cy="280" rx="5.0" ry="7.0" fill="#000" opacity="0.75" filter="url(#bl1)"/><path d="M798.3 287.8l0.7 -0.7l0.3 -1.0M793.6 282.2l0.2 0.7l-0.4 0.6M794.0 283.5l1.5 -0.7l0.3 -1.7M787.5 293.5l-1.0 0.8l-1.3 0.3M792.1 278.4l-0.3 -1.5l-0.5 -1.5M789.2 287.7l1.7 -0.1l1.2 -1.2M793.3 273.3l1.8 -0.1l1.7 -0.2M800.1 273.0l0.8 0.7l-0.2 1.0M793.4 286.2l-0.7 -0.7l-0.1 -1.0M795.3 287.1l-0.5 -0.2l-0.3 -0.5M795.1 269.0l0.4 1.1l1.1 0.4M792.4 272.0l0.5 -0.4l0.2 -0.6M801.6 285.8l-0.4 -0.5l-0.1 -0.7M789.0 282.0l0.3 -1.4l0.2 -1.4M791.9 285.5l-0.6 0.5l-0.1 0.7M782.6 274.3l-0.9 -0.5l-0.8 0.6M796.2 277.6l-0.4 1.4l-1.3 0.5M794.2 281.4l0.4 1.8l0.3 1.8M797.9 285.0l-0.6 -0.0l-0.3 0.5M785.3 291.0l-1.6 0.8l-1.3 1.2M792.1 282.4l-0.6 -0.4l0.1 -0.7M792.4 279.2l-0.8 -0.8l-0.5 -1.0M791.4 278.3l-1.3 0.2l-0.6 1.2M797.7 273.6l0.2 0.6l0.3 0.5M788.9 274.1l0.9 0.9l0.8 1.0M795.3 286.1l-1.0 -1.1l-1.4 0.2M798.9 284.0l1.2 -0.1l0.8 0.9M791.2 282.4l-0.4 -0.7l0.3 -0.8M793.0 278.1l-0.6 1.4l1.0 1.2M793.2 281.6l-0.6 -1.6l0.3 -1.7M795.2 277.6l0.6 -1.7l1.6 -0.8M793.6 284.8l1.3 -0.5l1.2 -0.8M792.9 281.6l0.2 -1.3l-0.8 -1.0M801.8 292.8l0.4 -0.3l0.1 -0.5M796.3 275.6l0.7 -0.9l0.4 -1.0M796.5 278.6l1.4 -0.5l0.5 -1.4M802.4 273.9l0.9 0.8l0.9 0.8M792.9 289.5l1.5 -0.8l1.6 0.4M787.8 284.3l0.6 -0.7l0.9 -0.3M784.7 285.1l-0.7 1.0l-0.6 1.0M796.0 285.3l-0.1 -1.3l1.1 -0.8M793.6 277.1l-1.1 0.0l-0.4 1.0M798.6 277.1l-0.6 1.2l-1.0 0.9M794.1 268.0l-1.1 -0.5l-1.0 -0.7M793.2 281.4l-0.1 -1.4l-1.3 -0.7M791.1 283.4l1.1 0.9l1.3 0.6M790.2 288.7l0.3 -0.8l0.4 -0.8M792.7 284.5l-0.1 0.9l0.5 0.7M801.9 282.3l-0.9 0.0l-0.9 0.0M794.7 278.9l0.6 -0.7l-0.4 -0.8M796.3 279.3l0.6 -0.3l0.1 -0.6M791.9 276.9l0.2 -1.0l1.0 -0.3M787.5 283.9l-0.4 0.9l-0.5 0.8M791.6 287.4l-0.6 1.1l0.4 1.1M791.5 284.8l-1.8 0.3l-1.0 -1.5M786.9 281.9l0.6 -1.5l1.0 -1.3M795.8 287.5l-0.5 0.4l-0.1 0.7M792.6 275.6l-0.2 1.0l0.2 1.0M790.1 279.2l0.6 1.2l1.4 0.1M800.1 269.4l1.0 0.9l0.0 1.3M796.1 293.5l-0.4 0.4l0.2 0.5M792.0 284.6l-0.7 -1.0l0.2 -1.2M790.0 276.7l1.5 0.6l1.6 -0.1M794.2 278.7l0.1 1.7l-1.0 1.4M798.5 284.9l0.7 -1.3l1.2 -0.7M793.1 286.4l0.4 -1.3l-1.0 -0.9M794.3 284.6l0.6 0.7l0.9 0.0M795.7 277.2l1.6 -0.2l1.3 -0.9M795.4 291.6l-0.9 1.0l-1.4 0.4M786.6 279.0l-0.8 -1.0l-1.2 -0.1M796.2 271.7l0.9 0.5l1.0 -0.2M789.3 279.7l-0.1 0.7l-0.5 0.5M792.2 280.9l-1.6 -0.7l-1.7 -0.4M798.5 276.6l-0.1 -0.8l-0.7 -0.4M791.7 276.2l-0.4 -0.3l0.1 -0.5M784.4 287.1l0.7 -1.5l1.6 -0.1M799.2 283.8l0.4 1.7l-1.2 1.3M787.5 282.5l0.0 0.9l0.3 0.8M790.6 288.3l1.3 -0.5l0.0 -1.4M793.0 274.3l-0.3 0.7l0.3 0.7M797.6 278.2l0.1 -0.5l0.4 -0.3M788.8 269.1l-0.9 -1.3l-1.4 -0.8M798.4 263.2l-0.5 1.0l-1.0 0.5M799.4 275.8l0.4 0.4l0.4 0.3M786.7 284.1l-1.2 -0.2l-1.2 0.3M796.6 282.5l-1.2 0.1l-1.0 -0.7M787.5 273.5l-1.2 0.5l-0.9 1.0M789.9 270.7l0.2 1.2l0.4 1.2M791.9 276.4l-0.6 -0.4l0.0 -0.7M795.5 284.5l-1.3 -0.7l-0.2 -1.5M795.0 281.6l-1.6 -0.3l-0.3 -1.5M797.6 276.7l1.4 -0.5l1.2 0.8M793.7 268.9l-1.2 -0.0l-1.0 0.7M805.7 279.4l1.5 0.0l0.7 1.4M793.0 266.5l1.1 -0.8l-0.3 -1.3M793.8 278.1l-0.5 -0.3l0.0 -0.5M785.3 285.2l0.4 -0.6l0.7 -0.3M799.5 277.4l-0.5 -0.1l-0.5 0.2M796.3 272.2l-0.4 0.4l-0.4 0.4M790.5 283.9l0.8 1.4l1.6 0.5M790.5 290.1l0.3 -1.3l0.3 -1.3M790.6 269.9l1.5 0.1l0.8 1.3M787.8 287.4l-1.2 -1.3l0.6 -1.7M795.0 272.7l-1.6 0.2l-1.5 -0.4M795.1 276.2l0.5 -0.3l0.6 -0.0M795.3 286.7l-0.1 -0.8l-0.8 -0.3M792.3 275.8l0.5 0.2l0.4 0.3M783.5 269.4l-1.2 1.1l-1.1 1.2M795.7 286.1l-0.4 0.4l-0.6 -0.2M790.9 283.3l1.5 -0.2l1.0 1.1M795.5 287.3l-1.3 0.2l-1.2 -0.6M787.8 292.7l0.9 0.3l0.2 1.0M788.8 276.8l-1.3 0.2l-0.3 1.2M792.4 274.2l-0.2 1.0l0.7 0.8M798.7 276.2l-0.0 0.5l-0.2 0.5M793.9 277.4l-1.4 -0.8l-1.6 0.3M788.5 277.0l1.1 0.8l1.4 -0.1M795.0 276.4l-0.0 1.3l-0.1 1.3M794.7 275.9l-0.5 0.3l-0.5 0.3M794.6 273.6l-1.5 -0.7l-1.6 -0.4M795.0 285.7l-0.3 0.4l-0.5 0.1M796.3 280.2l0.8 -1.4l-0.7 -1.5M790.5 280.7l0.8 -1.5l0.6 -1.6M793.7 285.6l-1.7 -0.6l-1.4 1.1M803.8 275.1l-0.4 -0.4l-0.5 -0.3M792.7 277.6l-1.0 -0.7l-1.1 0.6M788.5 273.3l0.3 0.6l0.6 0.4M796.8 280.5l-0.5 0.5l-0.6 0.3M793.7 275.1l-0.1 -0.7l0.6 -0.4M794.0 278.8l-1.1 0.8l-1.3 0.1M793.2 275.6l1.2 -0.7l1.4 -0.1M792.9 267.2l0.2 -1.3l0.1 -1.3M794.3 280.6l-0.0 -1.4l-1.2 -0.6M785.8 287.6l0.6 -0.6l0.8 0.3M789.5 282.8l-1.1 0.1l-1.0 0.5M786.6 281.2l-0.3 1.2l-1.2 0.2M790.8 267.6l0.8 0.4l0.9 0.2M790.7 281.2l0.6 0.5l0.3 0.7M794.7 273.2l-0.9 0.8l-0.9 0.8M795.4 275.4l-0.6 0.1l-0.2 0.6M786.3 279.2l0.0 1.3l-0.9 0.9M790.6 280.5l0.1 -0.6l0.6 -0.2M798.2 277.1l-1.2 -0.1l-1.2 0.2M790.7 285.4l0.5 -1.3l1.0 -0.9M788.3 268.3l1.0 0.5l1.1 -0.0M798.5 282.1l0.7 1.3l0.0 1.5M788.3 289.7l-0.7 -0.8l-0.7 -0.8M789.9 285.2l-0.6 -0.8l-0.8 -0.6M791.4 282.8l-0.1 -1.3l1.1 -0.6M789.3 268.4l-0.5 0.0l-0.4 0.4M789.4 279.3l1.2 0.8l1.3 0.7M790.2 289.3l0.7 1.0l1.1 0.5M789.0 285.1l-1.1 -0.2l-1.1 0.3M796.9 288.7l0.5 0.4l0.5 0.5M800.0 275.8l-0.5 -0.2l-0.5 -0.2M798.0 289.3l-1.1 -0.5l-0.9 -0.7M790.9 270.7l0.7 0.8l1.0 -0.3M787.2 284.1l-0.6 0.9l-1.1 -0.1M788.2 274.4l-1.5 0.2l-0.8 1.3M786.7 293.5l0.1 0.9l0.4 0.9M787.3 277.1l1.3 -0.7l0.3 -1.4M787.7 288.3l-0.8 -1.1l-1.3 0.2M794.4 282.8l-0.3 -1.0l-0.7 -0.9M799.7 272.2l0.2 -0.8l0.3 -0.8M797.0 278.2l0.6 0.4l0.1 0.7M799.5 266.2l0.7 1.2l1.1 0.8M790.2 279.9l-0.6 -0.8l-0.2 -1.0M788.5 277.8l-0.3 0.6l-0.4 0.6M793.8 278.8l-0.9 -0.7l-0.5 -1.0M790.5 293.5l-0.4 -1.5l0.2 -1.5M791.5 269.3l-0.7 1.4l-0.5 1.5M787.3 279.9l-0.5 0.4l-0.1 0.6M792.9 283.1l0.7 -1.0l0.2 -1.2M799.8 278.5l0.1 1.4l-1.3 0.6M797.3 277.4l-1.3 0.1l-1.3 0.2M796.7 282.2l0.7 -0.9l-0.2 -1.1M799.3 281.6l0.3 -0.6l0.5 -0.5M792.4 282.7l0.1 0.6l0.3 0.6M801.1 282.3l0.3 1.5l1.5 0.3M794.8 283.7l-1.5 0.5l-0.8 1.3M787.5 287.2l0.4 0.6l0.7 0.0M789.4 279.1l-0.8 -1.0l-0.3 -1.3M784.6 279.9l0.0 -1.7l1.1 -1.3M784.2 273.3l1.5 -0.8l1.6 -0.5M791.5 279.5l0.1 0.6l-0.2 0.6M793.7 279.3l0.3 -1.0l1.0 -0.2M790.1 280.1l0.5 1.7l-0.3 1.7M802.3 283.0l0.3 0.6l0.4 0.5M794.6 276.6l-0.5 -0.5l-0.7 -0.3M786.4 287.6l-0.5 -0.9l0.5 -1.0M794.0 271.3l0.9 0.1l0.7 0.5M796.2 279.9l0.3 -1.7l-1.1 -1.3M797.2 269.4l-1.5 -0.3l-1.3 -0.6M796.6 274.1l0.5 0.7l0.6 0.6M789.0 274.3l-0.1 1.1l-0.7 0.8M784.3 279.6l0.1 -0.6l0.2 -0.6M801.1 283.8l1.3 0.4l1.3 0.2M795.3 282.2l0.2 -0.5l-0.1 -0.5M794.7 281.3l-0.2 0.9l-0.9 0.4M787.1 273.1l0.8 -1.2l1.5 -0.1M794.7 283.1l0.8 -0.9l-0.6 -1.1M798.7 285.2l-1.0 -0.9l-1.3 -0.0M788.1 276.1l-0.6 1.4l0.5 1.5M799.9 288.2l-1.2 0.0l-0.7 -1.0M792.3 282.5l-0.5 0.5l0.1 0.7M791.3 278.6l-0.7 -0.4l-0.7 0.4M806.0 280.8l-0.4 -1.0l-0.8 -0.7M789.2 273.1l-0.5 -0.8l-0.6 -0.7M789.0 289.2l-1.5 -0.8l-1.7 -0.0M794.2 275.8l-0.9 0.6l0.1 1.1M793.2 276.7l-0.4 -1.0l-0.8 -0.8M787.3 284.9l-0.3 -0.4l-0.3 -0.4M788.3 276.1l0.9 -1.1l-0.2 -1.4M793.2 277.9l0.8 -1.0l1.1 -0.6M793.6 271.4l1.1 0.8l1.2 0.5M800.7 283.3l1.5 -0.2l1.5 -0.3M793.1 278.1l-0.8 -0.5l-0.5 -0.7M792.0 277.8l0.4 0.6l0.7 -0.1M801.0 293.5l0.7 0.4l0.6 0.5M794.4 270.3l-0.6 0.2l-0.7 0.0M795.9 278.5l-1.8 -0.1l-1.6 -0.8M788.5 280.6l-0.1 -0.6l0.4 -0.5M789.7 269.4l0.8 0.2l0.6 0.7M791.1 274.3l-0.5 -1.3l-0.9 -1.0M792.3 274.6l-1.4 0.2l-1.0 -1.0M793.3 285.0l0.2 -0.9l0.2 -0.9M794.9 275.2l0.6 -1.7l-1.2 -1.3M793.2 278.9l0.6 -1.3l1.3 -0.6M793.1 281.5l0.1 -1.0l0.3 -0.9M790.6 281.9l1.5 0.8l0.2 1.7M782.9 285.2l0.3 -1.0l-0.2 -1.0M791.4 279.3l1.3 0.6l0.8 1.1M794.1 280.0l-0.3 0.5l-0.5 0.1M795.5 275.0l1.0 0.1l0.5 -0.8M800.3 283.3l-1.3 0.7l-1.3 0.8M793.2 277.9l0.2 0.8l-0.6 0.5M796.1 279.5l-1.2 0.1l-1.1 -0.6M798.5 274.8l1.4 1.0l1.7 -0.3M787.5 276.3l-0.2 0.7l0.5 0.6M795.1 279.5l-1.2 0.2l-1.1 -0.5M794.8 285.8l-0.2 -1.2l-0.3 -1.1M795.7 284.1l-1.0 -0.3l-0.8 -0.6M779.3 279.7l0.8 -0.7l-0.2 -1.0M796.4 278.0l-0.8 -0.9l-0.7 -1.0M793.0 283.7l-0.6 -1.6l1.2 -1.2M796.7 276.9l-0.8 0.2l-0.3 0.8M795.2 278.3l0.8 -1.4l1.3 -1.0M796.0 280.5l0.0 -1.2l1.1 -0.5M790.2 274.5l-0.9 -0.5l-1.0 -0.0M793.0 272.7l1.2 0.5l1.1 -0.6M803.6 286.6l-0.6 0.2l-0.6 -0.3M784.7 286.7l1.0 -1.0l1.3 0.5M793.6 284.5l-1.4 -0.3l-0.7 -1.3M789.5 275.3l-0.1 -0.7l-0.6 -0.4M787.0 285.3l-0.5 1.1l0.6 1.0M793.7 278.3l0.6 0.7l0.8 0.5M803.1 278.8l-0.6 1.0l-0.4 1.1M800.8 288.3l0.7 -1.2l-0.5 -1.3M796.5 284.7l-1.3 0.8l-1.3 0.7M795.2 279.6l-0.9 0.4l-0.1 1.0" fill="none" stroke="#000" stroke-width="0.7" opacity="0.85" stroke-linecap="round"/></g>
<clipPath id="c15"><rect x="812" y="262" width="32" height="32"/></clipPath>
<g clip-path="url(#c15)"><ellipse cx="826" cy="275" rx="6.0" ry="6.5" fill="#222" opacity="0.55" filter="url(#bl1)"/><path d="M825.0 280.9l-0.6 -0.2l-0.6 -0.2M832.2 273.1l-1.8 -0.2l-1.8 -0.0M824.5 285.2l1.0 1.7l-0.8 1.9M820.2 273.1l0.7 0.3l0.4 0.7M825.1 267.5l1.1 1.3l-0.8 1.5M831.1 269.2l-1.1 0.4l-0.5 1.1M838.7 278.6l-0.9 0.7l-0.9 0.7M837.0 273.7l-0.7 -1.7l-0.6 -1.7M820.7 267.3l-0.3 -0.5l-0.3 -0.5M819.6 270.8l1.7 -0.8l1.5 -1.1M817.4 276.2l0.0 -1.1l-0.2 -1.1M821.5 270.9l-1.0 -1.7l-1.3 -1.5M823.1 273.3l0.7 -1.6l1.0 -1.3M824.9 277.0l0.0 0.9l-0.6 0.8M817.3 270.1l0.9 -0.4l0.3 -0.9M825.2 269.4l0.6 -1.1l-0.2 -1.2M833.8 271.9l0.5 -1.6l1.7 -0.3M827.3 273.6l0.5 0.3l0.3 0.5M818.1 275.1l0.7 0.5l0.0 0.8M823.9 272.8l1.4 1.3l0.0 1.9M836.5 284.9l0.8 0.8l0.6 1.0M829.9 264.8l0.9 0.1l0.7 -0.6M832.6 278.8l0.8 0.9l0.3 1.2M827.1 268.4l-0.6 -1.5l-1.4 -0.8M828.0 288.5l-0.1 2.0l1.7 1.1M823.1 282.5l0.3 2.2l-0.4 2.2M831.4 269.5l0.4 -0.6l0.2 -0.7M826.2 280.3l0.5 0.5l0.5 0.5M832.8 272.6l-1.3 -1.6l-0.9 -1.8M819.9 271.9l-0.8 -0.1l-0.5 0.6M829.4 270.1l0.2 -0.6l0.2 -0.6M826.7 274.6l1.1 -0.2l1.1 -0.2M821.3 269.8l-0.9 1.9l0.1 2.1M826.9 275.0l0.9 -0.1l0.8 -0.5M820.9 271.6l-1.0 1.4l-1.2 1.2M832.1 280.3l-0.5 -1.7l0.3 -1.7M827.7 275.3l0.7 -0.6l0.8 0.4M835.9 275.0l-0.2 -0.5l0.3 -0.5M818.3 281.3l0.5 -0.3l0.5 -0.4M825.5 278.2l1.6 -0.5l1.6 -0.2M826.5 268.1l1.4 0.2l1.2 0.8M823.4 265.5l-0.3 1.5l-1.1 1.0M814.6 280.7l-0.6 1.2l-0.4 1.3M834.1 269.2l-0.2 -1.7l0.2 -1.7M825.1 270.4l1.1 0.6l-0.1 1.2M832.0 278.0l0.4 0.4l0.1 0.5M824.2 271.3l-1.3 -0.7l-1.3 -0.7M824.1 265.7l0.3 -1.5l1.4 -0.5M834.2 273.4l-0.2 0.8l-0.5 0.6M829.2 262.5l1.1 -0.4l0.2 -1.1M821.9 270.0l-0.4 -0.7l-0.3 -0.8M825.5 274.4l1.1 0.7l0.8 1.0M827.0 271.8l0.8 -0.2l0.6 0.7M827.3 282.7l0.6 -0.6l0.4 -0.7M833.3 270.4l0.2 -0.6l0.6 -0.2M822.9 276.3l0.6 -1.1l1.2 -0.4M826.6 273.9l0.0 1.6l1.3 1.0M829.5 281.5l0.5 -0.6l-0.2 -0.8M826.9 269.7l-1.0 1.0l-1.3 -0.6M823.0 270.6l-1.9 0.8l-2.0 -0.1M822.6 273.0l0.2 -0.7l0.1 -0.7M827.2 278.5l0.6 0.6l0.0 0.8M831.0 276.1l0.6 0.1l0.6 -0.1M820.5 284.8l-1.5 1.4l-1.9 -0.8M820.4 275.1l1.3 -1.5l1.9 0.6M826.7 279.8l-1.3 -0.5l-1.4 0.0M829.3 279.1l0.8 -0.8l0.5 -1.1M827.7 274.1l-0.2 0.8l0.2 0.8M829.9 272.7l-0.5 0.8l-0.4 0.8M831.1 276.7l1.5 -1.4l0.9 -1.8M827.2 275.9l-0.8 0.5l-1.0 -0.1M826.6 280.6l-0.7 1.0l-1.0 0.7M831.9 264.9l-2.1 -0.7l-2.2 0.1M825.5 267.9l1.2 -0.8l1.5 0.3M828.7 273.3l-0.5 -2.0l0.2 -2.0M823.5 274.1l-0.1 -0.9l0.3 -0.8M833.2 275.6l-1.8 -0.6l-1.9 0.1M825.7 278.8l-1.1 -0.4l-0.2 -1.2M827.2 281.9l-0.7 0.2l-0.3 0.7M825.2 270.8l0.9 1.1l1.1 0.9M828.6 284.3l-0.8 1.2l-1.5 -0.1M822.2 272.7l0.8 0.9l0.2 1.2M840.1 283.9l1.6 -1.0l1.6 -1.1M828.0 275.6l0.6 -0.0l0.4 -0.5M824.6 266.6l-0.5 -1.2l-1.1 -0.7M835.5 272.0l1.9 1.0l2.2 -0.2M821.3 280.3l0.6 -0.9l0.6 -0.9M828.8 277.6l0.4 -1.3l-0.8 -1.1M830.6 274.4l0.5 0.4l-0.1 0.6M824.6 284.0l1.2 1.8l2.0 0.8M829.9 280.0l-1.6 0.9l-1.7 -0.6M823.3 263.9l1.9 1.0l1.8 -1.2M833.8 273.5l-0.9 -0.9l-1.2 0.3M831.5 278.5l0.4 -1.2l-0.3 -1.2M828.5 274.3l0.2 1.6l1.3 0.9M828.4 283.6l1.6 -0.1l1.3 0.9M826.2 280.4l0.7 1.8l0.5 1.9M824.2 275.0l1.4 -1.1l0.7 -1.6M824.3 278.0l0.3 0.5l-0.0 0.6M828.5 277.9l-0.9 -1.5l-0.6 -1.6M824.6 272.8l1.2 0.4l0.3 1.3M829.7 276.1l-0.5 -0.8l-0.5 -0.8M820.2 270.9l-0.8 1.1l0.5 1.3M833.2 274.7l-0.1 0.6l0.3 0.6M826.4 272.3l-1.3 -1.2l-1.8 0.0M827.8 268.8l1.2 -1.2l1.7 0.2M831.3 281.8l0.2 -0.5l0.5 -0.1M815.6 279.5l-1.1 0.7l-1.1 -0.6M834.5 267.5l-0.2 -0.8l-0.6 -0.6M828.7 276.1l-0.5 -0.4l0.1 -0.6M824.0 271.8l-1.9 -0.5l-1.5 -1.3M826.3 267.0l1.5 1.6l0.2 2.2M832.3 265.3l0.4 0.4l0.4 0.4M821.0 283.2l-0.1 0.6l0.3 0.5M831.4 276.9l-0.4 1.0l-0.1 1.0M822.4 269.5l0.6 1.6l1.1 1.2M815.2 275.3l-0.3 -1.1l0.1 -1.2M829.9 275.5l0.6 1.0l0.9 0.8M826.5 278.0l-0.7 0.2l-0.6 -0.5M831.6 282.5l-2.1 -0.2l-1.9 0.7M826.1 273.3l-0.4 -0.4l-0.6 0.2M829.0 271.2l-1.1 -0.9l-0.6 -1.3M831.2 276.8l-1.0 0.6l-1.1 0.3M833.2 269.7l0.5 -0.6l0.8 0.2M824.6 279.8l0.6 1.7l1.5 0.9M831.4 282.9l-1.3 0.7l-1.5 0.1M830.4 283.0l1.2 -0.2l1.0 -0.7M819.1 269.4l-0.7 -0.9l-1.1 -0.2M831.7 272.0l-1.6 -1.4l-1.3 -1.7M829.6 274.4l-0.8 0.7l-1.0 0.4M827.2 279.4l-0.0 0.9l-0.6 0.6M826.4 284.1l-0.8 0.1l-0.6 -0.4M826.4 272.3l1.2 -0.3l1.2 -0.3M825.2 274.4l0.8 0.9l0.4 1.2M825.3 274.6l0.6 -0.6l-0.2 -0.8M825.3 274.7l-1.1 0.4l-1.2 0.1M823.4 286.1l0.7 -0.3l0.7 -0.1M823.6 274.4l1.2 1.7l2.1 0.5M834.2 275.5l0.2 0.5l0.4 0.4M834.9 279.0l-0.6 -0.5l-0.5 -0.6M816.2 276.2l-0.5 1.8l1.4 1.2M821.3 272.2l-0.7 -0.6l-0.8 -0.5M820.5 270.6l-1.2 -1.0l-0.5 -1.5M818.9 276.9l-0.4 1.1l-0.2 1.1M815.9 274.7l-0.8 1.9l-1.9 1.0M825.9 267.9l0.2 -1.7l1.6 -0.7M825.5 274.3l0.6 -1.6l1.5 -0.6M830.1 285.6l1.7 -0.6l0.7 -1.7M827.7 279.3l-0.8 0.8l-0.9 0.7M829.3 281.3l0.9 -0.6l1.0 -0.4M830.1 267.2l-0.2 1.0l0.0 1.1M827.3 278.1l1.1 1.5l0.7 1.7M822.7 270.5l-1.8 -1.0l-0.2 -2.0M826.8 280.8l0.5 -1.6l0.2 -1.6M825.1 271.1l0.3 2.1l0.3 2.1M826.0 284.9l-0.1 -1.6l-1.1 -1.2M829.1 276.9l-0.1 1.8l1.0 1.5M826.6 275.3l-0.6 0.0l-0.3 0.5M824.7 274.2l0.3 -0.4l0.1 -0.5M823.6 276.9l-0.7 -1.4l1.0 -1.2M827.2 262.7l-0.5 -1.8l0.7 -1.7M821.6 273.7l-0.6 -0.1l-0.4 0.4M828.4 275.3l1.3 -1.4l1.4 -1.3M833.0 266.5l1.5 -0.5l1.3 -0.7M824.2 276.6l-2.1 0.2l-0.8 1.9M820.0 266.5l0.6 -0.7l0.6 -0.7M827.3 280.3l1.9 0.9l2.1 0.6M822.2 268.4l-0.2 0.6l0.1 0.6M831.4 273.4l-1.3 -0.1l-1.0 0.8M823.8 270.4l-1.0 -0.6l-1.2 -0.1M830.2 274.6l-1.2 -1.1l-1.6 -0.1M826.1 268.3l0.3 0.8l-0.4 0.7M828.5 276.4l0.9 -1.9l-0.6 -2.0M819.8 269.0l-0.4 -2.0l-1.2 -1.6M824.8 274.6l-1.7 -1.2l-2.1 0.0M826.0 274.9l-0.5 -0.2l-0.5 -0.2M829.3 276.6l-0.2 0.8l-0.5 0.7M830.3 273.8l1.0 0.7l0.9 0.9M828.0 271.6l-0.1 -0.9l-0.0 -0.9M830.9 262.9l1.0 0.3l1.0 0.4M826.7 276.0l0.3 -1.0l0.7 -0.8M822.7 273.4l1.5 -0.3l1.4 -0.7M830.8 275.4l0.2 1.0l-0.2 1.0M818.5 277.1l-0.7 -0.5l0.2 -0.9M833.3 269.0l-1.5 0.3l-1.4 0.7M825.5 276.8l1.2 -0.3l1.1 0.5M828.8 279.5l-0.5 0.6l-0.7 0.4M824.5 274.0l-1.6 -0.5l-1.7 0.3M829.1 281.2l0.6 -0.4l0.1 -0.7M826.5 266.1l-0.5 0.8l-0.9 0.3M825.9 282.7l1.1 -0.1l1.1 0.1M818.2 272.0l1.6 0.1l1.2 1.0M823.6 266.0l0.2 0.7l0.8 0.1M826.9 272.2l2.0 -0.0l1.8 1.0M821.5 276.0l1.1 -1.6l1.4 -1.3M827.5 277.2l-1.1 0.7l-0.2 1.3M827.7 277.0l0.9 -0.6l1.1 0.1M820.7 266.0l-1.5 -0.9l-1.4 1.0M834.8 270.4l-0.9 0.2l-0.6 -0.7M824.0 266.1l0.0 1.9l-0.3 1.9" fill="none" stroke="#222" stroke-width="0.6" opacity="0.6" stroke-linecap="round"/></g>
</svg>
<div class="abs" style="left:241.5px;top:1px;width:8px;height:163px;background:#2b2b2b"></div>
</div>
<!-- tag assign entry -->
<div class="entry" style="left:606px;top:290px;width:250px;height:26px;background:#242424;border-color:#202020"></div>
<svg style="left:837px;top:299px" width="14" height="9" viewBox="0 0 14 9"><path d="M1.2 1.2 L7 7.2 L12.8 1.2" fill="none" stroke="#dcdcdc" stroke-width="2.2" stroke-linecap="round" stroke-linejoin="round"/></svg>
<!-- spacing spin -->
<div class="spin" style="left:606px;top:318px;width:250px;height:22px;border-color:#1e1e1e"><div class="btns" style="width:50px"></div></div>
<div class="t" style="left:613px;top:322px">間隔</div>
<div class="t r" style="right:54px;top:322px"><u>1.0</u></div>
<svg style="left:805px;top:319px" width="53" height="21" viewBox="805 319 53 21"><path d="M830.5 319 V339" stroke="#2a2a2a" stroke-width="1"/><path d="M812.5 329 H823.5" stroke="#686868" stroke-width="2.7" stroke-linecap="round"/><path d="M837.6 329 H848.4 M843 323.6 V334.4" stroke="#dcdcdc" stroke-width="2.7" stroke-linecap="round"/></svg>
<!-- brush action buttons -->
<svg class="ic" style="left:617px;top:345px" width="18" height="17" viewBox="617 345 18 17"><rect x="617.9" y="346.4" width="8.2" height="2.3"/><rect x="617.9" y="352.4" width="4.4" height="2.3"/><rect x="617.9" y="358.4" width="12.4" height="2.3"/><path d="M631.2 346 L634 348.6 L625.8 357.2 L622.2 358.2 L623.2 354.6 Z"/><path d="M632.4 345.6 L633.2 345 L635 346.8 L634.4 347.6 Z"/></svg>
<svg class="ic" style="left:660px;top:345px" width="16" height="17" viewBox="660 345 16 17"><path d="M667.4 346.8 H670.6 L673.6 349.8 V359.7 H662.5 V353.6" fill="none" stroke="#dcdcdc" stroke-width="1.5"/><path d="M670.4 346.8 V350 H673.6" fill="none" stroke="#dcdcdc" stroke-width="1.2"/><path d="M660.2 349.4 H667.2 M663.7 345.8 V353" stroke="#dcdcdc" stroke-width="2.4"/></svg>
<svg class="ic" style="left:702px;top:346px" width="17" height="15" viewBox="702 346 17 15"><rect x="703.6" y="348" width="9" height="6.2" fill="none" stroke="#dcdcdc" stroke-width="1.5"/><path d="M714.6 351.6 H716.6 V358.4 H708.2 V356.2" fill="none" stroke="#dcdcdc" stroke-width="1.5"/></svg>
<svg style="left:743px;top:345px" width="18" height="17" viewBox="743 345 18 17"><rect x="743.8" y="345" width="16.2" height="15.7" rx="1.6" fill="#585858"/><path d="M747.8 348.8 L756 357 M756 348.8 L747.8 357" stroke="#3c3c3c" stroke-width="2.4" stroke-linecap="round"/></svg>
<svg class="ic" style="left:785px;top:345px" width="18" height="17" viewBox="785 345 18 17"><path d="M797.6 349.2 A6 6 0 1 0 799.6 353.8" fill="none" stroke="#dcdcdc" stroke-width="2.4"/><path d="M795 351.6 L800.8 351.4 L800.6 345.6 Z"/></svg>
<svg style="left:827px;top:345px" width="18" height="17" viewBox="827 345 18 17"><path d="M831.8 345.4 H838.6 L842.2 349 V353 H831.8 Z" fill="#585858"/><path d="M838.4 345.4 V349.2 H842.2" fill="none" stroke="#3c3c3c" stroke-width="0.9"/><path d="M828 351 H830.6 V354 H843.8 L842.4 360.4 H828 Z" fill="#585858"/></svg>
<!-- pane separator -->
<div class="hline" style="left:605px;top:366px;width:254px;height:1px;background:#2a2a2a"></div>
<svg style="left:722px;top:367px" width="18" height="5" viewBox="0 0 18 5"><circle cx="3.9" cy="2.5" r="1.65" fill="#c2c2c2"/><circle cx="8.9" cy="2.5" r="1.65" fill="#c2c2c2"/><circle cx="13.9" cy="2.5" r="1.65" fill="#c2c2c2"/></svg>
<svg style="left:598px;top:308px" width="5" height="16" viewBox="0 0 5 16"><circle cx="2.4" cy="2" r="1.65" fill="#c2c2c2"/><circle cx="2.4" cy="7" r="1.65" fill="#c2c2c2"/><circle cx="2.4" cy="12" r="1.65" fill="#c2c2c2"/></svg>
<!-- layers tabs -->
<div class="tab on" style="left:609px;top:376px;width:33px;height:37px"><i></i></div>
<div class="tab" style="left:647px;top:380px;width:34px;height:33px"></div>
<div class="tab" style="left:685px;top:380px;width:34px;height:33px"></div>
<div class="hline" style="left:605px;top:414px;width:254px;height:1px;background:#1f1f1f"></div>
<svg class="ic" style="left:837px;top:390px" width="11" height="11" viewBox="0 0 11 11"><rect x="0.75" y="0.75" width="9.5" height="9.5" fill="none" stroke="#dcdcdc" stroke-width="1.5"/><path d="M7.6 2.8 V8.2 L3.2 5.5 Z"/></svg>
<!-- layers dock tab icons -->
<svg class="ic" style="left:617px;top:386px" width="18" height="18" viewBox="617 386 18 18"><path d="M622 386.7 H634.2 L630 390.9 H617.9 Z"/><path d="M622 392.9 H634.2 L630 397 H617.9 Z"/><path d="M622 398.9 H634.2 L630 403.2 H617.9 Z"/></svg>
<svg class="ic" style="left:655px;top:388px" width="18" height="18" viewBox="655 388 18 18"><rect x="656.7" y="389.8" width="14.6" height="14" fill="none" stroke="#dcdcdc" stroke-width="1.5"/><rect x="659.4" y="392" width="2.2" height="9.6" fill="#7e7e7e"/><rect x="663" y="392" width="2.2" height="9.6" fill="#b4b4b4"/><rect x="666.6" y="392" width="2.2" height="9.6"/></svg>
<svg class="ic" style="left:693px;top:392px" width="18" height="12" viewBox="693 392 18 12"><rect x="693.5" y="392.9" width="3.4" height="3.4"/><rect x="706.8" y="392.9" width="3.4" height="3.4"/><rect x="695" y="394" width="14" height="1.4"/><path d="M695.4 402.8 C696.6 398.6 699 396.6 701.9 396.6 C704.8 396.6 707.2 398.6 708.4 402.8" fill="none" stroke="#dcdcdc" stroke-width="2" stroke-linecap="round"/></svg>
<!-- layer mode -->
<div class="entry" style="left:606px;top:417px;width:208px;height:26px;background:#343434;border-color:#2b2b2b"></div>
<div class="t" style="left:611px;top:422px;color:#6c6c6c">モード</div>
<div class="t" style="left:761px;top:422px;color:#6c6c6c">標準</div>
<svg style="left:796.5px;top:427.5px" width="12" height="8" viewBox="0 0 12 8"><path d="M1.2 1.2 L5.6 5.8 L10 1.2" fill="none" stroke="#707070" stroke-width="1.9" stroke-linecap="round" stroke-linejoin="round"/></svg>
<div class="entry" style="left:816px;top:417px;width:40px;height:26px;background:#343434;border-color:#2b2b2b"></div>
<svg style="left:818px;top:421px" width="36" height="18" viewBox="0 0 36 18"><path d="M4.6 5.6 A5.8 5.8 0 1 1 7.4 14.8" fill="none" stroke="#707070" stroke-width="1.9"/><path d="M1 7.4 L7 2.2 V8.8 Z" fill="#707070"/><circle cx="4.6" cy="14.4" r="2.3" fill="#707070"/><path d="M21.4 7.6 L26 12.4 L30.6 7.6" fill="none" stroke="#707070" stroke-width="1.9" stroke-linecap="round" stroke-linejoin="round"/></svg>
<!-- layer opacity -->
<div class="spin" style="left:606px;top:445px;width:250px;height:22px;border-color:#1e1e1e"><div class="fill" style="width:100%"></div><div class="btns" style="width:50px"></div></div>
<div class="t" style="left:613px;top:448px">不透明度</div>
<div class="t r" style="right:54px;top:448px"><u>100.0</u></div>
<svg style="left:805px;top:445px" width="53" height="22" viewBox="805 445 53 22"><path d="M830.5 446 V466" stroke="#2a2a2a" stroke-width="1"/><path d="M812.5 456.2 H823.5" stroke="#686868" stroke-width="2.7" stroke-linecap="round"/><path d="M837.6 456.2 H848.4 M843 450.8 V461.6" stroke="#686868" stroke-width="2.7" stroke-linecap="round"/></svg>
<!-- layers tree -->
<div class="abs" style="left:606px;top:472px;width:250px;height:101px;background:#232323"></div>
<div class="abs" style="left:606px;top:472px;width:250px;height:34px;box-sizing:border-box;background:#3e3e3e;border:1px solid #2d2d2d"></div>
<div class="vline" style="left:641px;top:473px;width:1px;height:32px;background:#343434"></div>
<div class="vline" style="left:675px;top:473px;width:1px;height:32px;background:#343434"></div>
<div class="vline" style="left:709px;top:473px;width:1px;height:32px;background:#343434"></div>
<!-- header icons -->
<svg class="ic" style="left:614px;top:483px" width="17" height="12" viewBox="614 483 17 12"><path d="M615.4 489.2 C617.4 486 619.8 485 622.2 485 C624.6 485 627 486 629 489.2 C627 492.4 624.6 493.4 622.2 493.4 C619.8 493.4 617.4 492.4 615.4 489.2 Z" fill="none" stroke="#dcdcdc" stroke-width="1.9"/><circle cx="622.4" cy="489" r="2.9"/></svg>
<svg class="ic" style="left:649px;top:482px" width="14" height="14" viewBox="649 482 14 14"><rect x="650" y="488.4" width="12.2" height="6.6"/><path d="M652.8 488.6 V486.4 A3.3 3.3 0 0 1 659.4 486.4 V488.6" fill="none" stroke="#dcdcdc" stroke-width="1.9"/></svg>
<svg class="ic" style="left:682px;top:482px" width="16" height="14" viewBox="682 482 16 14"><text x="682.4" y="492.4" font-family="Liberation Serif, serif" font-style="italic" font-weight="bold" font-size="14" stroke="#dcdcdc" stroke-width="0.5">f</text><text x="690" y="494.2" font-family="Liberation Sans, sans-serif" font-weight="bold" font-size="11" stroke="#dcdcdc" stroke-width="0.4">x</text></svg>
<svg class="ic" style="left:828px;top:481px" width="17" height="17" viewBox="0 0 17 17"><circle cx="7" cy="7" r="5.4" fill="none" stroke="#dcdcdc" stroke-width="2"/><path d="M11 11 L15.4 15.4" stroke="#dcdcdc" stroke-width="2.2" stroke-linecap="round"/></svg>
<!-- layers bottom buttons -->
<svg class="ic" style="left:610px;top:578px" width="16" height="18" viewBox="610 578 16 18"><path d="M618.2 580.2 H621.4 L624.4 583.2 V594.2 H613.2 V587.4" fill="none" stroke="#dcdcdc" stroke-width="1.5"/><path d="M621.2 580.2 V583.4 H624.4" fill="none" stroke="#dcdcdc" stroke-width="1.2"/><path d="M610.8 583.3 H618 M614.4 579.6 V587" stroke="#dcdcdc" stroke-width="2.4"/></svg>
<svg class="ic" style="left:639px;top:578px" width="17" height="18" viewBox="639 578 17 18"><path d="M639 578.8 H645.6 L646.8 581.4 H655.2 V595 H639 Z"/><rect x="640.6" y="583.6" width="13" height="9.8" fill="#dcdcdc"/><path d="M644.2 589.4 H653 M648.6 585 V593.8" stroke="#3c3c3c" stroke-width="2"/></svg>
<svg style="left:667px;top:581px" width="16" height="12" viewBox="667 581 16 12"><path d="M669.4 590.4 L675.2 584 L681 590.4" fill="none" stroke="#dcdcdc" stroke-width="2.2" stroke-linecap="round" stroke-linejoin="round"/></svg>
<svg style="left:695px;top:581px" width="16" height="12" viewBox="695 581 16 12"><path d="M697 584 L703 590.6 L709 584" fill="none" stroke="#dcdcdc" stroke-width="2.2" stroke-linecap="round" stroke-linejoin="round"/></svg>
<svg class="ic" style="left:723px;top:580px" width="17" height="15" viewBox="723 580 17 15"><rect x="724.4" y="582" width="9" height="6.4" fill="none" stroke="#dcdcdc" stroke-width="1.5"/><path d="M735.6 585.8 H737.8 V592.4 H729.2 V590.4" fill="none" stroke="#dcdcdc" stroke-width="1.5"/></svg>
<svg class="ic" style="left:751px;top:578px" width="16" height="18" viewBox="751 578 16 18"><circle cx="759" cy="581.4" r="2" fill="none" stroke="#dcdcdc" stroke-width="1.5"/><path d="M759 583.6 V594" stroke="#dcdcdc" stroke-width="2"/><path d="M755.2 586.8 H762.8" stroke="#dcdcdc" stroke-width="1.8"/><path d="M753.2 589.6 C753.8 592.4 756 593.8 759 593.8 C762 593.8 764.2 592.4 764.8 589.6" fill="none" stroke="#dcdcdc" stroke-width="1.9"/><path d="M751.6 591 L752.8 587 L756 589.8 Z"/><path d="M766.4 591 L765.2 587 L762 589.8 Z"/></svg>
<svg class="ic" style="left:779px;top:581px" width="18" height="13" viewBox="779 581 18 13"><path d="M782 582.4 H788.2 L785.8 585 H779.6 Z"/><path d="M782 586.2 H788.2 L785.8 588.8 H779.6 Z"/><path d="M782 590 H788.2 L785.8 592.6 H779.6 Z"/><path d="M792.2 582 V590" stroke="#dcdcdc" stroke-width="1.8"/><path d="M789 588.6 H795.4 L792.2 593.2 Z"/></svg>
<svg class="ic" style="left:806px;top:578px" width="18" height="16" viewBox="806 578 18 16"><path d="M809.6 578.8 C811.4 579.6 815.8 579.6 817.6 578.8 V583 C817.6 585.6 815.6 587.4 813.6 587.6 C811.6 587.4 809.6 585.6 809.6 583 Z"/><path d="M811 581.4 H812.8 M814.4 581.4 H816.2" stroke="#3c3c3c" stroke-width="1"/><path d="M811.6 584 C812.6 585.4 814.6 585.4 815.6 584 Z" fill="#3c3c3c"/><path d="M810.4 587.6 H823 L819.4 593 H806.8 Z"/></svg>
<svg class="ic" style="left:835px;top:579px" width="16" height="16" viewBox="835 579 16 16"><rect x="835.4" y="579" width="15.4" height="15.6" rx="1.6"/><path d="M839 582.8 L847.2 591 M847.2 582.8 L839 591" stroke="#3c3c3c" stroke-width="2.6" stroke-linecap="round"/></svg>
<!-- right window edge -->
<div class="vline" style="left:858px;top:0;width:1px;height:601px;background:#1c1c1c"></div>
</div>

</div>
</body>
</html>
